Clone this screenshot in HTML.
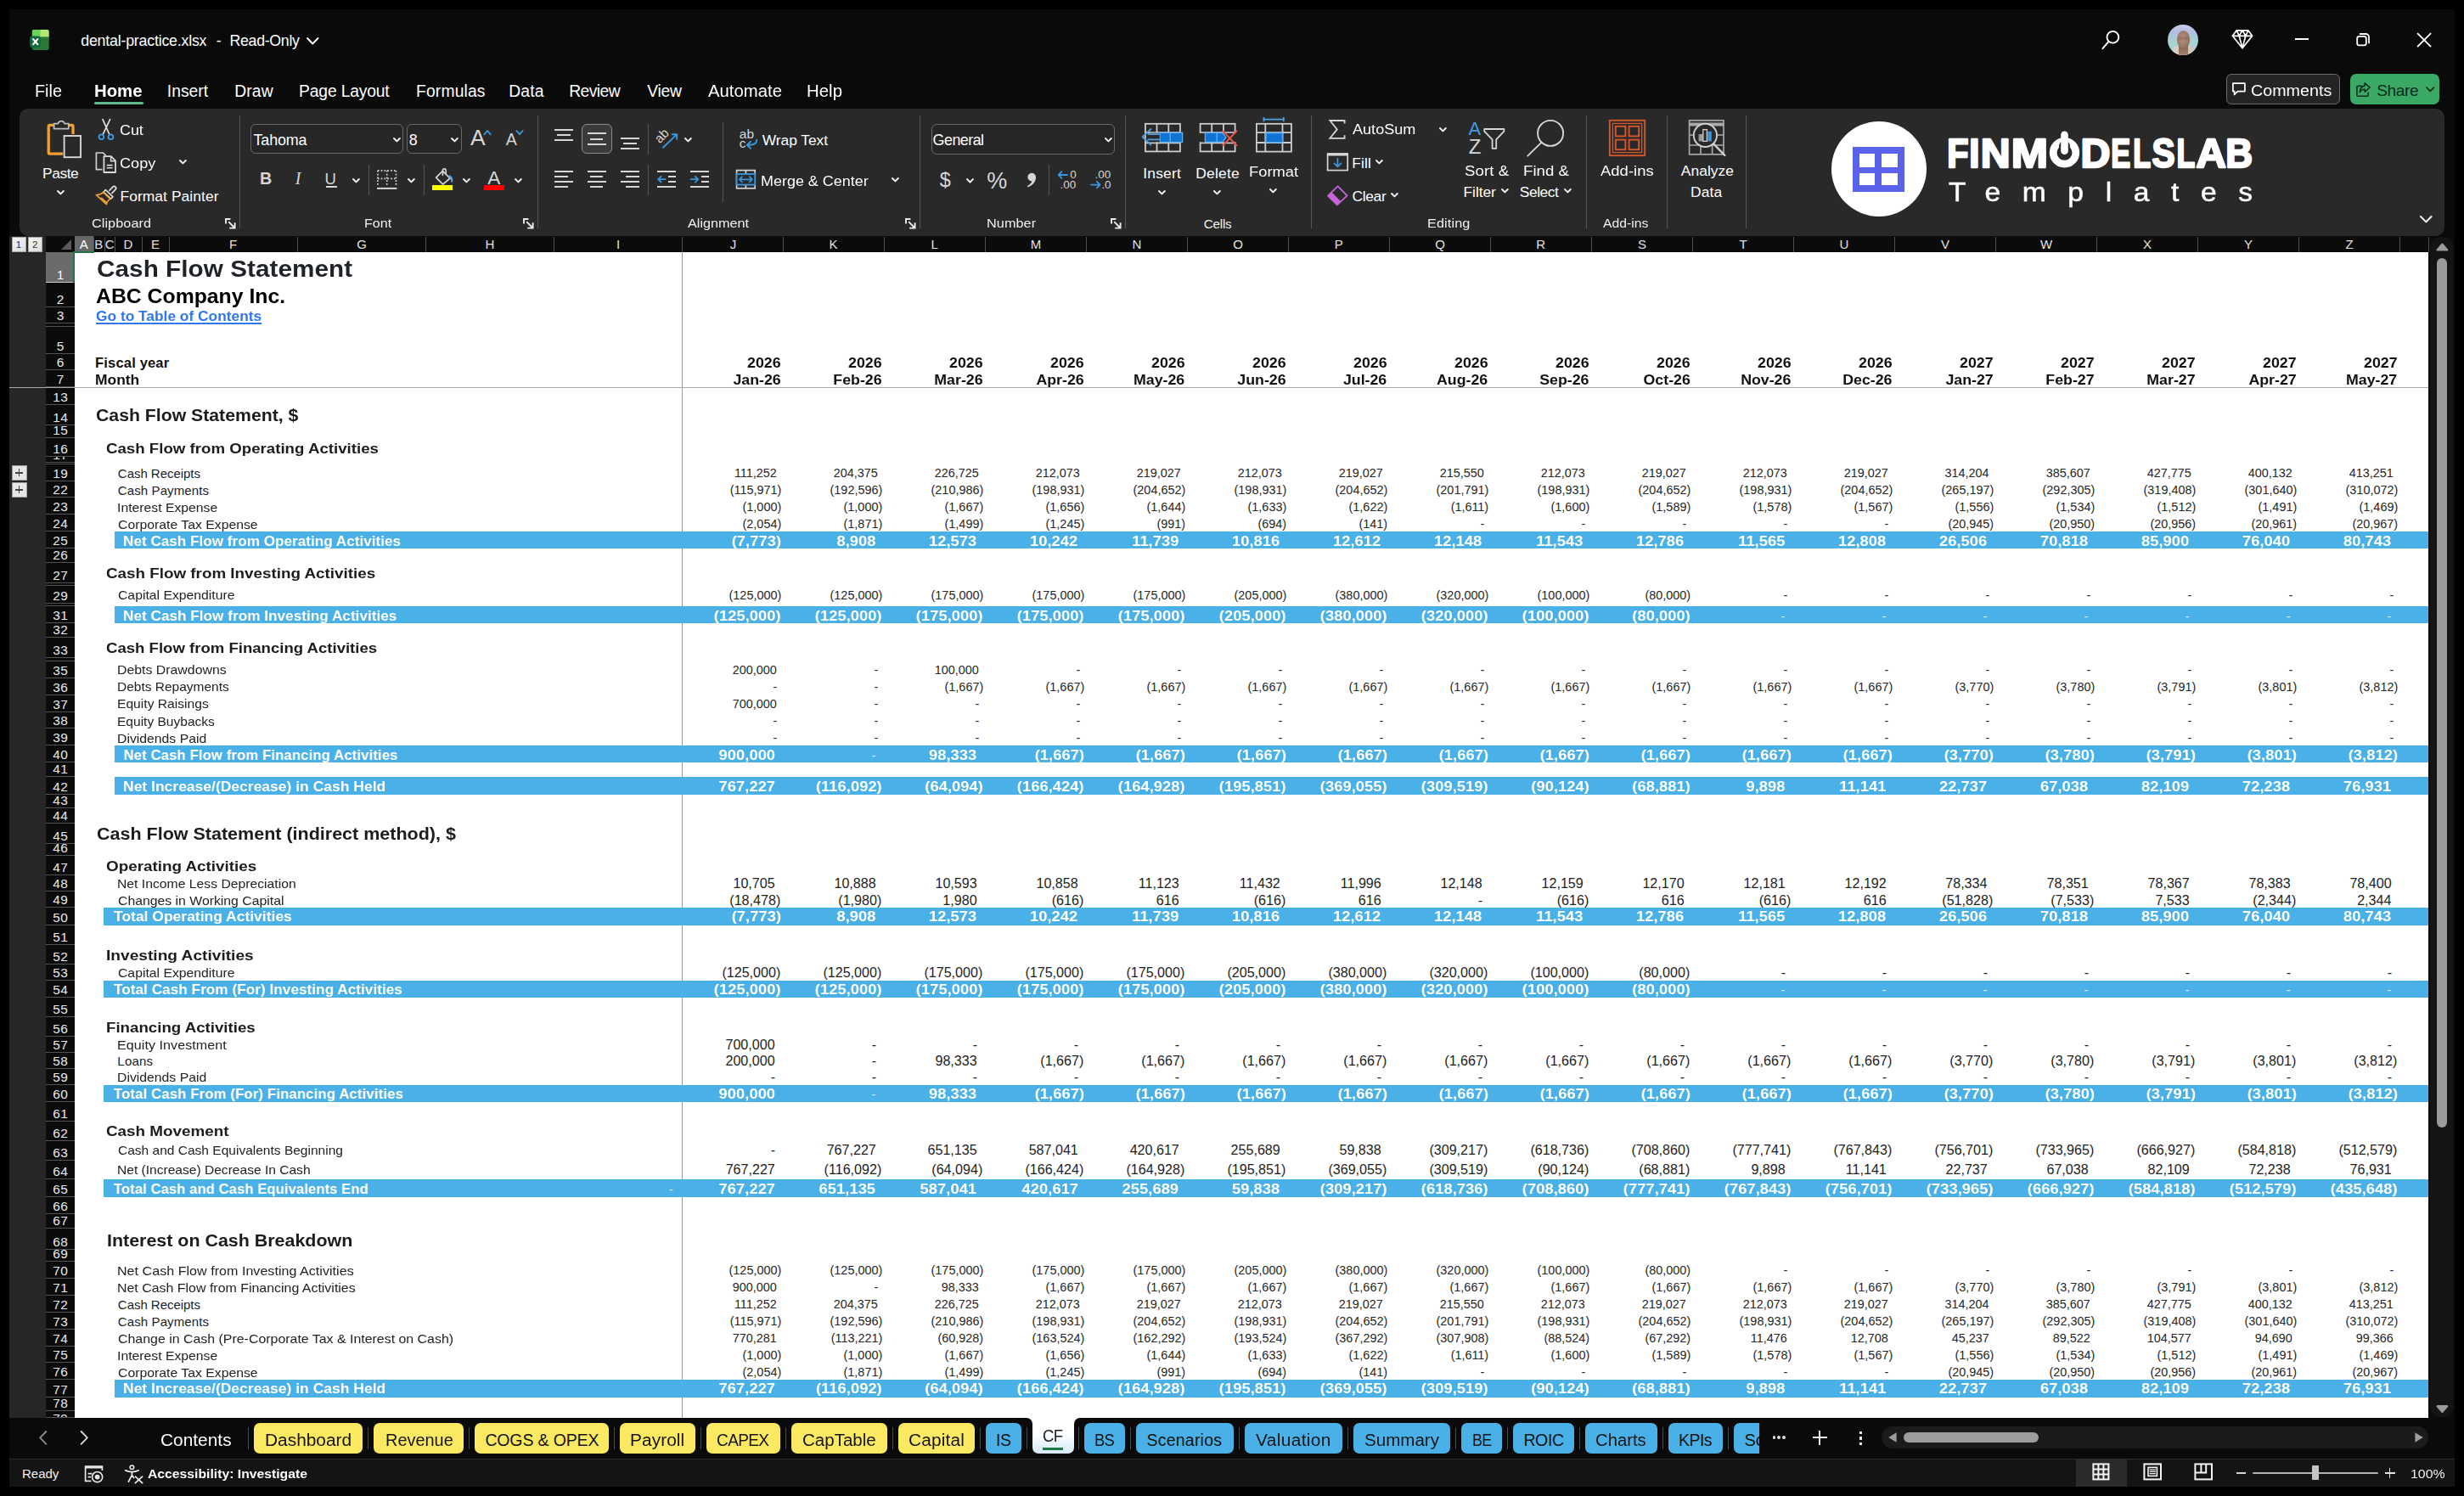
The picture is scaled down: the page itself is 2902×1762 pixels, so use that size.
<!DOCTYPE html>
<html><head><meta charset="utf-8"><title>dental-practice.xlsx</title><style>html,body{margin:0;padding:0;background:#000;}
body{width:2902px;height:1762px;overflow:hidden;position:relative;font-family:"Liberation Sans",sans-serif;}
#r{position:absolute;left:0;top:0;width:2902px;height:1762px;overflow:hidden;}
#r div,#r span,#r svg{position:absolute;white-space:nowrap;}
#r span{display:block;}
</style></head><body><div id="r">
<div style="left:11px;top:11px;width:2880px;height:1740px;background:#0a0a0a;"></div>
<div style="left:11px;top:278px;width:43px;height:1392px;background:#262626;"></div>
<div style="left:54px;top:278px;width:2806px;height:19px;background:#0b0b0b;"></div>
<div style="left:54px;top:297px;width:33.5px;height:1373px;background:#0b0b0b;"></div>
<div style="left:87.5px;top:297px;width:2772.5px;height:1373px;background:#fff;"></div>
<div style="left:13.5px;top:278.5px;width:17.5px;height:18px;background:linear-gradient(135deg,#f4f4f4,#dcdcdc);border:1px solid #a8a8a8;box-sizing:border-box;"></div>
<span style="top:283.00px;font-size:11.5px;line-height:1;color:#333;left:-177.95px;width:400px;text-align:center;">1</span>
<div style="left:32.5px;top:278.5px;width:17.5px;height:18px;background:linear-gradient(135deg,#f4f4f4,#dcdcdc);border:1px solid #a8a8a8;box-sizing:border-box;"></div>
<span style="top:283.00px;font-size:11.5px;line-height:1;color:#333;left:-158.81px;width:400px;text-align:center;">2</span>
<svg style="left:71px;top:281px;" width="14" height="14" viewBox="0 0 14 14" fill="none"><path d="M13 1 L13 13 L1 13 Z" fill="#5a5a5a"/></svg>
<div style="left:87.5px;top:278px;width:22.5px;height:19px;background:#676767;"></div>
<span style="top:280.00px;font-size:15px;line-height:1;color:#fff;left:-101.25px;width:400px;text-align:center;">A</span>
<div style="left:109.5px;top:279px;width:1px;height:18px;background:#4d4d4d;"></div>
<span style="top:280.00px;font-size:15px;line-height:1;color:#e2e2e2;left:-83.73px;width:400px;text-align:center;">B</span>
<div style="left:122.5px;top:279px;width:1px;height:18px;background:#4d4d4d;"></div>
<span style="top:280.00px;font-size:15px;line-height:1;color:#e2e2e2;left:-70.85px;width:400px;text-align:center;">C</span>
<div style="left:135px;top:279px;width:1px;height:18px;background:#4d4d4d;"></div>
<span style="top:280.00px;font-size:15px;line-height:1;color:#e2e2e2;left:-49.01px;width:400px;text-align:center;">D</span>
<div style="left:166.5px;top:279px;width:1px;height:18px;background:#4d4d4d;"></div>
<span style="top:280.00px;font-size:15px;line-height:1;color:#e2e2e2;left:-17.05px;width:400px;text-align:center;">E</span>
<div style="left:199px;top:279px;width:1px;height:18px;background:#4d4d4d;"></div>
<span style="top:280.00px;font-size:15px;line-height:1;color:#e2e2e2;left:74.67px;width:400px;text-align:center;">F</span>
<div style="left:350px;top:279px;width:1px;height:18px;background:#4d4d4d;"></div>
<span style="top:280.00px;font-size:15px;line-height:1;color:#e2e2e2;left:226.17px;width:400px;text-align:center;">G</span>
<div style="left:501px;top:279px;width:1px;height:18px;background:#4d4d4d;"></div>
<span style="top:280.00px;font-size:15px;line-height:1;color:#e2e2e2;left:376.98px;width:400px;text-align:center;">H</span>
<div style="left:652px;top:279px;width:1px;height:18px;background:#4d4d4d;"></div>
<span style="top:280.00px;font-size:15px;line-height:1;color:#e2e2e2;left:528.00px;width:400px;text-align:center;">I</span>
<div style="left:803px;top:279px;width:1px;height:18px;background:#4d4d4d;"></div>
<span style="top:280.00px;font-size:15px;line-height:1;color:#e2e2e2;left:663.43px;width:400px;text-align:center;">J</span>
<div style="left:922px;top:279px;width:1px;height:18px;background:#4d4d4d;"></div>
<span style="top:280.00px;font-size:15px;line-height:1;color:#e2e2e2;left:781.47px;width:400px;text-align:center;">K</span>
<div style="left:1041px;top:279px;width:1px;height:18px;background:#4d4d4d;"></div>
<span style="top:280.00px;font-size:15px;line-height:1;color:#e2e2e2;left:900.63px;width:400px;text-align:center;">L</span>
<div style="left:1160px;top:279px;width:1px;height:18px;background:#4d4d4d;"></div>
<span style="top:280.00px;font-size:15px;line-height:1;color:#e2e2e2;left:1019.99px;width:400px;text-align:center;">M</span>
<div style="left:1279px;top:279px;width:1px;height:18px;background:#4d4d4d;"></div>
<span style="top:280.00px;font-size:15px;line-height:1;color:#e2e2e2;left:1138.98px;width:400px;text-align:center;">N</span>
<div style="left:1398px;top:279px;width:1px;height:18px;background:#4d4d4d;"></div>
<span style="top:280.00px;font-size:15px;line-height:1;color:#e2e2e2;left:1258.00px;width:400px;text-align:center;">O</span>
<div style="left:1517px;top:279px;width:1px;height:18px;background:#4d4d4d;"></div>
<span style="top:280.00px;font-size:15px;line-height:1;color:#e2e2e2;left:1376.77px;width:400px;text-align:center;">P</span>
<div style="left:1636px;top:279px;width:1px;height:18px;background:#4d4d4d;"></div>
<span style="top:280.00px;font-size:15px;line-height:1;color:#e2e2e2;left:1496.00px;width:400px;text-align:center;">Q</span>
<div style="left:1755px;top:279px;width:1px;height:18px;background:#4d4d4d;"></div>
<span style="top:280.00px;font-size:15px;line-height:1;color:#e2e2e2;left:1614.74px;width:400px;text-align:center;">R</span>
<div style="left:1874px;top:279px;width:1px;height:18px;background:#4d4d4d;"></div>
<span style="top:280.00px;font-size:15px;line-height:1;color:#e2e2e2;left:1734.00px;width:400px;text-align:center;">S</span>
<div style="left:1993px;top:279px;width:1px;height:18px;background:#4d4d4d;"></div>
<span style="top:280.00px;font-size:15px;line-height:1;color:#e2e2e2;left:1853.01px;width:400px;text-align:center;">T</span>
<div style="left:2112px;top:279px;width:1px;height:18px;background:#4d4d4d;"></div>
<span style="top:280.00px;font-size:15px;line-height:1;color:#e2e2e2;left:1972.00px;width:400px;text-align:center;">U</span>
<div style="left:2231px;top:279px;width:1px;height:18px;background:#4d4d4d;"></div>
<span style="top:280.00px;font-size:15px;line-height:1;color:#e2e2e2;left:2091.00px;width:400px;text-align:center;">V</span>
<div style="left:2350px;top:279px;width:1px;height:18px;background:#4d4d4d;"></div>
<span style="top:280.00px;font-size:15px;line-height:1;color:#e2e2e2;left:2209.99px;width:400px;text-align:center;">W</span>
<div style="left:2469px;top:279px;width:1px;height:18px;background:#4d4d4d;"></div>
<span style="top:280.00px;font-size:15px;line-height:1;color:#e2e2e2;left:2329.00px;width:400px;text-align:center;">X</span>
<div style="left:2588px;top:279px;width:1px;height:18px;background:#4d4d4d;"></div>
<span style="top:280.00px;font-size:15px;line-height:1;color:#e2e2e2;left:2448.00px;width:400px;text-align:center;">Y</span>
<div style="left:2707px;top:279px;width:1px;height:18px;background:#4d4d4d;"></div>
<span style="top:280.00px;font-size:15px;line-height:1;color:#e2e2e2;left:2567.01px;width:400px;text-align:center;">Z</span>
<div style="left:2826px;top:279px;width:1px;height:18px;background:#4d4d4d;"></div>
<div style="left:2859.5px;top:279px;width:1px;height:18px;background:#4d4d4d;"></div>
<div style="left:54px;top:297px;width:33.5px;height:36px;background:#6b6b6b;overflow:hidden;border-bottom:1px solid #c8c8c8;box-sizing:border-box;"><span style="left:0.6px;width:33.5px;text-align:center;top:19.00px;font-size:15.4px;line-height:1;letter-spacing:0.6px;color:#fff">1</span></div>
<div style="left:54px;top:333px;width:33.5px;height:29px;background:#0b0b0b;overflow:hidden;border-bottom:1px solid #505050;box-sizing:border-box;"><span style="left:0.6px;width:33.5px;text-align:center;top:12.00px;font-size:15.4px;line-height:1;letter-spacing:0.6px;color:#e9e9e9">2</span></div>
<div style="left:54px;top:362px;width:33.5px;height:19px;background:#0b0b0b;overflow:hidden;border-bottom:1px solid #505050;box-sizing:border-box;"><span style="left:0.6px;width:33.5px;text-align:center;top:2.00px;font-size:15.4px;line-height:1;letter-spacing:0.6px;color:#e9e9e9">3</span></div>
<div style="left:54px;top:381px;width:33.5px;height:4px;background:#0b0b0b;overflow:hidden;border-bottom:1px solid #505050;box-sizing:border-box;"></div>
<div style="left:54px;top:385px;width:33.5px;height:32px;background:#0b0b0b;overflow:hidden;border-bottom:1px solid #505050;box-sizing:border-box;"><span style="left:0.6px;width:33.5px;text-align:center;top:15.00px;font-size:15.4px;line-height:1;letter-spacing:0.6px;color:#e9e9e9">5</span></div>
<div style="left:54px;top:417px;width:33.5px;height:19px;background:#0b0b0b;overflow:hidden;border-bottom:1px solid #505050;box-sizing:border-box;"><span style="left:0.6px;width:33.5px;text-align:center;top:2.00px;font-size:15.4px;line-height:1;letter-spacing:0.6px;color:#e9e9e9">6</span></div>
<div style="left:54px;top:436px;width:33.5px;height:20px;background:#0b0b0b;overflow:hidden;border-bottom:1px solid #505050;box-sizing:border-box;"><span style="left:0.6px;width:33.5px;text-align:center;top:3.00px;font-size:15.4px;line-height:1;letter-spacing:0.6px;color:#e9e9e9">7</span></div>
<div style="left:54px;top:457px;width:33.5px;height:20px;background:#0b0b0b;overflow:hidden;border-bottom:1px solid #505050;box-sizing:border-box;"><span style="left:0.6px;width:33.5px;text-align:center;top:3.00px;font-size:15.4px;line-height:1;letter-spacing:0.6px;color:#e9e9e9">13</span></div>
<div style="left:54px;top:477px;width:33.5px;height:24px;background:#0b0b0b;overflow:hidden;border-bottom:1px solid #505050;box-sizing:border-box;"><span style="left:0.6px;width:33.5px;text-align:center;top:7.00px;font-size:15.4px;line-height:1;letter-spacing:0.6px;color:#e9e9e9">14</span></div>
<div style="left:54px;top:501px;width:33.5px;height:14.5px;background:#0b0b0b;overflow:hidden;border-bottom:1px solid #505050;box-sizing:border-box;"><span style="left:0.6px;width:33.5px;text-align:center;top:-2.00px;font-size:15.4px;line-height:1;letter-spacing:0.6px;color:#e9e9e9">15</span></div>
<div style="left:54px;top:515.5px;width:33.5px;height:22.5px;background:#0b0b0b;overflow:hidden;border-bottom:1px solid #505050;box-sizing:border-box;"><span style="left:0.6px;width:33.5px;text-align:center;top:5.50px;font-size:15.4px;line-height:1;letter-spacing:0.6px;color:#e9e9e9">16</span></div>
<div style="left:54px;top:538px;width:33.5px;height:7px;background:#0b0b0b;overflow:hidden;border-bottom:1px solid #505050;box-sizing:border-box;"><span style="left:0.6px;width:33.5px;text-align:center;top:-10.00px;font-size:15.4px;line-height:1;letter-spacing:0.6px;color:#e9e9e9">17</span></div>
<div style="left:54px;top:545px;width:33.5px;height:2px;background:#0b0b0b;overflow:hidden;border-bottom:1px solid #505050;box-sizing:border-box;"></div>
<div style="left:54px;top:547px;width:33.5px;height:19.5px;background:#0b0b0b;overflow:hidden;border-bottom:1px solid #505050;box-sizing:border-box;"><span style="left:0.6px;width:33.5px;text-align:center;top:3.00px;font-size:15.4px;line-height:1;letter-spacing:0.6px;color:#e9e9e9">19</span></div>
<div style="left:54px;top:566.5px;width:33.5px;height:19.5px;background:#0b0b0b;overflow:hidden;border-bottom:1px solid #505050;box-sizing:border-box;"><span style="left:0.6px;width:33.5px;text-align:center;top:2.50px;font-size:15.4px;line-height:1;letter-spacing:0.6px;color:#e9e9e9">22</span></div>
<div style="left:54px;top:586px;width:33.5px;height:20px;background:#0b0b0b;overflow:hidden;border-bottom:1px solid #505050;box-sizing:border-box;"><span style="left:0.6px;width:33.5px;text-align:center;top:3.00px;font-size:15.4px;line-height:1;letter-spacing:0.6px;color:#e9e9e9">23</span></div>
<div style="left:54px;top:606px;width:33.5px;height:20px;background:#0b0b0b;overflow:hidden;border-bottom:1px solid #505050;box-sizing:border-box;"><span style="left:0.6px;width:33.5px;text-align:center;top:3.00px;font-size:15.4px;line-height:1;letter-spacing:0.6px;color:#e9e9e9">24</span></div>
<div style="left:54px;top:626px;width:33.5px;height:20px;background:#0b0b0b;overflow:hidden;border-bottom:1px solid #505050;box-sizing:border-box;"><span style="left:0.6px;width:33.5px;text-align:center;top:3.00px;font-size:15.4px;line-height:1;letter-spacing:0.6px;color:#e9e9e9">25</span></div>
<div style="left:54px;top:646px;width:33.5px;height:17px;background:#0b0b0b;overflow:hidden;border-bottom:1px solid #505050;box-sizing:border-box;"><span style="left:0.6px;width:33.5px;text-align:center;top:0.00px;font-size:15.4px;line-height:1;letter-spacing:0.6px;color:#e9e9e9">26</span></div>
<div style="left:54px;top:663px;width:33.5px;height:23.5px;background:#0b0b0b;overflow:hidden;border-bottom:1px solid #505050;box-sizing:border-box;"><span style="left:0.6px;width:33.5px;text-align:center;top:7.00px;font-size:15.4px;line-height:1;letter-spacing:0.6px;color:#e9e9e9">27</span></div>
<div style="left:54px;top:686.5px;width:33.5px;height:3.5px;background:#0b0b0b;overflow:hidden;border-bottom:1px solid #505050;box-sizing:border-box;"></div>
<div style="left:54px;top:690px;width:33.5px;height:20.5px;background:#0b0b0b;overflow:hidden;border-bottom:1px solid #505050;box-sizing:border-box;"><span style="left:0.6px;width:33.5px;text-align:center;top:4.00px;font-size:15.4px;line-height:1;letter-spacing:0.6px;color:#e9e9e9">29</span></div>
<div style="left:54px;top:710.5px;width:33.5px;height:3.5px;background:#0b0b0b;overflow:hidden;border-bottom:1px solid #505050;box-sizing:border-box;"></div>
<div style="left:54px;top:714px;width:33.5px;height:20px;background:#0b0b0b;overflow:hidden;border-bottom:1px solid #505050;box-sizing:border-box;"><span style="left:0.6px;width:33.5px;text-align:center;top:3.00px;font-size:15.4px;line-height:1;letter-spacing:0.6px;color:#e9e9e9">31</span></div>
<div style="left:54px;top:734px;width:33.5px;height:17px;background:#0b0b0b;overflow:hidden;border-bottom:1px solid #505050;box-sizing:border-box;"><span style="left:0.6px;width:33.5px;text-align:center;top:0.00px;font-size:15.4px;line-height:1;letter-spacing:0.6px;color:#e9e9e9">32</span></div>
<div style="left:54px;top:751px;width:33.5px;height:24px;background:#0b0b0b;overflow:hidden;border-bottom:1px solid #505050;box-sizing:border-box;"><span style="left:0.6px;width:33.5px;text-align:center;top:7.00px;font-size:15.4px;line-height:1;letter-spacing:0.6px;color:#e9e9e9">33</span></div>
<div style="left:54px;top:775px;width:33.5px;height:3.5px;background:#0b0b0b;overflow:hidden;border-bottom:1px solid #505050;box-sizing:border-box;"></div>
<div style="left:54px;top:778.5px;width:33.5px;height:20.5px;background:#0b0b0b;overflow:hidden;border-bottom:1px solid #505050;box-sizing:border-box;"><span style="left:0.6px;width:33.5px;text-align:center;top:3.50px;font-size:15.4px;line-height:1;letter-spacing:0.6px;color:#e9e9e9">35</span></div>
<div style="left:54px;top:799px;width:33.5px;height:20px;background:#0b0b0b;overflow:hidden;border-bottom:1px solid #505050;box-sizing:border-box;"><span style="left:0.6px;width:33.5px;text-align:center;top:3.00px;font-size:15.4px;line-height:1;letter-spacing:0.6px;color:#e9e9e9">36</span></div>
<div style="left:54px;top:819px;width:33.5px;height:19.5px;background:#0b0b0b;overflow:hidden;border-bottom:1px solid #505050;box-sizing:border-box;"><span style="left:0.6px;width:33.5px;text-align:center;top:3.00px;font-size:15.4px;line-height:1;letter-spacing:0.6px;color:#e9e9e9">37</span></div>
<div style="left:54px;top:838.5px;width:33.5px;height:19.5px;background:#0b0b0b;overflow:hidden;border-bottom:1px solid #505050;box-sizing:border-box;"><span style="left:0.6px;width:33.5px;text-align:center;top:2.50px;font-size:15.4px;line-height:1;letter-spacing:0.6px;color:#e9e9e9">38</span></div>
<div style="left:54px;top:858px;width:33.5px;height:20px;background:#0b0b0b;overflow:hidden;border-bottom:1px solid #505050;box-sizing:border-box;"><span style="left:0.6px;width:33.5px;text-align:center;top:3.00px;font-size:15.4px;line-height:1;letter-spacing:0.6px;color:#e9e9e9">39</span></div>
<div style="left:54px;top:878px;width:33.5px;height:20px;background:#0b0b0b;overflow:hidden;border-bottom:1px solid #505050;box-sizing:border-box;"><span style="left:0.6px;width:33.5px;text-align:center;top:3.00px;font-size:15.4px;line-height:1;letter-spacing:0.6px;color:#e9e9e9">40</span></div>
<div style="left:54px;top:898px;width:33.5px;height:17px;background:#0b0b0b;overflow:hidden;border-bottom:1px solid #505050;box-sizing:border-box;"><span style="left:0.6px;width:33.5px;text-align:center;top:0.00px;font-size:15.4px;line-height:1;letter-spacing:0.6px;color:#e9e9e9">41</span></div>
<div style="left:54px;top:915px;width:33.5px;height:20.5px;background:#0b0b0b;overflow:hidden;border-bottom:1px solid #505050;box-sizing:border-box;"><span style="left:0.6px;width:33.5px;text-align:center;top:4.00px;font-size:15.4px;line-height:1;letter-spacing:0.6px;color:#e9e9e9">42</span></div>
<div style="left:54px;top:935.5px;width:33.5px;height:16.5px;background:#0b0b0b;overflow:hidden;border-bottom:1px solid #505050;box-sizing:border-box;"><span style="left:0.6px;width:33.5px;text-align:center;top:-0.50px;font-size:15.4px;line-height:1;letter-spacing:0.6px;color:#e9e9e9">43</span></div>
<div style="left:54px;top:952px;width:33.5px;height:17.5px;background:#0b0b0b;overflow:hidden;border-bottom:1px solid #505050;box-sizing:border-box;"><span style="left:0.6px;width:33.5px;text-align:center;top:1.00px;font-size:15.4px;line-height:1;letter-spacing:0.6px;color:#e9e9e9">44</span></div>
<div style="left:54px;top:969.5px;width:33.5px;height:24.5px;background:#0b0b0b;overflow:hidden;border-bottom:1px solid #505050;box-sizing:border-box;"><span style="left:0.6px;width:33.5px;text-align:center;top:7.50px;font-size:15.4px;line-height:1;letter-spacing:0.6px;color:#e9e9e9">45</span></div>
<div style="left:54px;top:994px;width:33.5px;height:14px;background:#0b0b0b;overflow:hidden;border-bottom:1px solid #505050;box-sizing:border-box;"><span style="left:0.6px;width:33.5px;text-align:center;top:-3.00px;font-size:15.4px;line-height:1;letter-spacing:0.6px;color:#e9e9e9">46</span></div>
<div style="left:54px;top:1008px;width:33.5px;height:23px;background:#0b0b0b;overflow:hidden;border-bottom:1px solid #505050;box-sizing:border-box;"><span style="left:0.6px;width:33.5px;text-align:center;top:6.00px;font-size:15.4px;line-height:1;letter-spacing:0.6px;color:#e9e9e9">47</span></div>
<div style="left:54px;top:1031px;width:33.5px;height:19px;background:#0b0b0b;overflow:hidden;border-bottom:1px solid #505050;box-sizing:border-box;"><span style="left:0.6px;width:33.5px;text-align:center;top:2.00px;font-size:15.4px;line-height:1;letter-spacing:0.6px;color:#e9e9e9">48</span></div>
<div style="left:54px;top:1050px;width:33.5px;height:19px;background:#0b0b0b;overflow:hidden;border-bottom:1px solid #505050;box-sizing:border-box;"><span style="left:0.6px;width:33.5px;text-align:center;top:2.00px;font-size:15.4px;line-height:1;letter-spacing:0.6px;color:#e9e9e9">49</span></div>
<div style="left:54px;top:1069px;width:33.5px;height:20.5px;background:#0b0b0b;overflow:hidden;border-bottom:1px solid #505050;box-sizing:border-box;"><span style="left:0.6px;width:33.5px;text-align:center;top:4.00px;font-size:15.4px;line-height:1;letter-spacing:0.6px;color:#e9e9e9">50</span></div>
<div style="left:54px;top:1089.5px;width:33.5px;height:23.5px;background:#0b0b0b;overflow:hidden;border-bottom:1px solid #505050;box-sizing:border-box;"><span style="left:0.6px;width:33.5px;text-align:center;top:6.50px;font-size:15.4px;line-height:1;letter-spacing:0.6px;color:#e9e9e9">51</span></div>
<div style="left:54px;top:1113px;width:33.5px;height:22.5px;background:#0b0b0b;overflow:hidden;border-bottom:1px solid #505050;box-sizing:border-box;"><span style="left:0.6px;width:33.5px;text-align:center;top:6.00px;font-size:15.4px;line-height:1;letter-spacing:0.6px;color:#e9e9e9">52</span></div>
<div style="left:54px;top:1135.5px;width:33.5px;height:19px;background:#0b0b0b;overflow:hidden;border-bottom:1px solid #505050;box-sizing:border-box;"><span style="left:0.6px;width:33.5px;text-align:center;top:2.50px;font-size:15.4px;line-height:1;letter-spacing:0.6px;color:#e9e9e9">53</span></div>
<div style="left:54px;top:1154.5px;width:33.5px;height:20px;background:#0b0b0b;overflow:hidden;border-bottom:1px solid #505050;box-sizing:border-box;"><span style="left:0.6px;width:33.5px;text-align:center;top:3.50px;font-size:15.4px;line-height:1;letter-spacing:0.6px;color:#e9e9e9">54</span></div>
<div style="left:54px;top:1174.5px;width:33.5px;height:23.5px;background:#0b0b0b;overflow:hidden;border-bottom:1px solid #505050;box-sizing:border-box;"><span style="left:0.6px;width:33.5px;text-align:center;top:6.50px;font-size:15.4px;line-height:1;letter-spacing:0.6px;color:#e9e9e9">55</span></div>
<div style="left:54px;top:1198px;width:33.5px;height:22.5px;background:#0b0b0b;overflow:hidden;border-bottom:1px solid #505050;box-sizing:border-box;"><span style="left:0.6px;width:33.5px;text-align:center;top:6.00px;font-size:15.4px;line-height:1;letter-spacing:0.6px;color:#e9e9e9">56</span></div>
<div style="left:54px;top:1220.5px;width:33.5px;height:19px;background:#0b0b0b;overflow:hidden;border-bottom:1px solid #505050;box-sizing:border-box;"><span style="left:0.6px;width:33.5px;text-align:center;top:2.50px;font-size:15.4px;line-height:1;letter-spacing:0.6px;color:#e9e9e9">57</span></div>
<div style="left:54px;top:1239.5px;width:33.5px;height:19px;background:#0b0b0b;overflow:hidden;border-bottom:1px solid #505050;box-sizing:border-box;"><span style="left:0.6px;width:33.5px;text-align:center;top:2.50px;font-size:15.4px;line-height:1;letter-spacing:0.6px;color:#e9e9e9">58</span></div>
<div style="left:54px;top:1258.5px;width:33.5px;height:19px;background:#0b0b0b;overflow:hidden;border-bottom:1px solid #505050;box-sizing:border-box;"><span style="left:0.6px;width:33.5px;text-align:center;top:2.50px;font-size:15.4px;line-height:1;letter-spacing:0.6px;color:#e9e9e9">59</span></div>
<div style="left:54px;top:1277.5px;width:33.5px;height:20.5px;background:#0b0b0b;overflow:hidden;border-bottom:1px solid #505050;box-sizing:border-box;"><span style="left:0.6px;width:33.5px;text-align:center;top:3.50px;font-size:15.4px;line-height:1;letter-spacing:0.6px;color:#e9e9e9">60</span></div>
<div style="left:54px;top:1298px;width:33.5px;height:23px;background:#0b0b0b;overflow:hidden;border-bottom:1px solid #505050;box-sizing:border-box;"><span style="left:0.6px;width:33.5px;text-align:center;top:6.00px;font-size:15.4px;line-height:1;letter-spacing:0.6px;color:#e9e9e9">61</span></div>
<div style="left:54px;top:1321px;width:33.5px;height:22.5px;background:#0b0b0b;overflow:hidden;border-bottom:1px solid #505050;box-sizing:border-box;"><span style="left:0.6px;width:33.5px;text-align:center;top:6.00px;font-size:15.4px;line-height:1;letter-spacing:0.6px;color:#e9e9e9">62</span></div>
<div style="left:54px;top:1343.5px;width:33.5px;height:23px;background:#0b0b0b;overflow:hidden;border-bottom:1px solid #505050;box-sizing:border-box;"><span style="left:0.6px;width:33.5px;text-align:center;top:6.50px;font-size:15.4px;line-height:1;letter-spacing:0.6px;color:#e9e9e9">63</span></div>
<div style="left:54px;top:1366.5px;width:33.5px;height:22.5px;background:#0b0b0b;overflow:hidden;border-bottom:1px solid #505050;box-sizing:border-box;"><span style="left:0.6px;width:33.5px;text-align:center;top:5.50px;font-size:15.4px;line-height:1;letter-spacing:0.6px;color:#e9e9e9">64</span></div>
<div style="left:54px;top:1389px;width:33.5px;height:21px;background:#0b0b0b;overflow:hidden;border-bottom:1px solid #505050;box-sizing:border-box;"><span style="left:0.6px;width:33.5px;text-align:center;top:4.00px;font-size:15.4px;line-height:1;letter-spacing:0.6px;color:#e9e9e9">65</span></div>
<div style="left:54px;top:1410px;width:33.5px;height:20px;background:#0b0b0b;overflow:hidden;border-bottom:1px solid #505050;box-sizing:border-box;"><span style="left:0.6px;width:33.5px;text-align:center;top:3.00px;font-size:15.4px;line-height:1;letter-spacing:0.6px;color:#e9e9e9">66</span></div>
<div style="left:54px;top:1430px;width:33.5px;height:17px;background:#0b0b0b;overflow:hidden;border-bottom:1px solid #505050;box-sizing:border-box;"><span style="left:0.6px;width:33.5px;text-align:center;top:0.00px;font-size:15.4px;line-height:1;letter-spacing:0.6px;color:#e9e9e9">67</span></div>
<div style="left:54px;top:1447px;width:33.5px;height:25px;background:#0b0b0b;overflow:hidden;border-bottom:1px solid #505050;box-sizing:border-box;"><span style="left:0.6px;width:33.5px;text-align:center;top:8.00px;font-size:15.4px;line-height:1;letter-spacing:0.6px;color:#e9e9e9">68</span></div>
<div style="left:54px;top:1472px;width:33.5px;height:13.5px;background:#0b0b0b;overflow:hidden;border-bottom:1px solid #505050;box-sizing:border-box;"><span style="left:0.6px;width:33.5px;text-align:center;top:-3.00px;font-size:15.4px;line-height:1;letter-spacing:0.6px;color:#e9e9e9">69</span></div>
<div style="left:54px;top:1485.5px;width:33.5px;height:20px;background:#0b0b0b;overflow:hidden;border-bottom:1px solid #505050;box-sizing:border-box;"><span style="left:0.6px;width:33.5px;text-align:center;top:3.50px;font-size:15.4px;line-height:1;letter-spacing:0.6px;color:#e9e9e9">70</span></div>
<div style="left:54px;top:1505.5px;width:33.5px;height:20px;background:#0b0b0b;overflow:hidden;border-bottom:1px solid #505050;box-sizing:border-box;"><span style="left:0.6px;width:33.5px;text-align:center;top:3.50px;font-size:15.4px;line-height:1;letter-spacing:0.6px;color:#e9e9e9">71</span></div>
<div style="left:54px;top:1525.5px;width:33.5px;height:20px;background:#0b0b0b;overflow:hidden;border-bottom:1px solid #505050;box-sizing:border-box;"><span style="left:0.6px;width:33.5px;text-align:center;top:3.50px;font-size:15.4px;line-height:1;letter-spacing:0.6px;color:#e9e9e9">72</span></div>
<div style="left:54px;top:1545.5px;width:33.5px;height:20px;background:#0b0b0b;overflow:hidden;border-bottom:1px solid #505050;box-sizing:border-box;"><span style="left:0.6px;width:33.5px;text-align:center;top:3.50px;font-size:15.4px;line-height:1;letter-spacing:0.6px;color:#e9e9e9">73</span></div>
<div style="left:54px;top:1565.5px;width:33.5px;height:20px;background:#0b0b0b;overflow:hidden;border-bottom:1px solid #505050;box-sizing:border-box;"><span style="left:0.6px;width:33.5px;text-align:center;top:3.50px;font-size:15.4px;line-height:1;letter-spacing:0.6px;color:#e9e9e9">74</span></div>
<div style="left:54px;top:1585.5px;width:33.5px;height:19.5px;background:#0b0b0b;overflow:hidden;border-bottom:1px solid #505050;box-sizing:border-box;"><span style="left:0.6px;width:33.5px;text-align:center;top:2.50px;font-size:15.4px;line-height:1;letter-spacing:0.6px;color:#e9e9e9">75</span></div>
<div style="left:54px;top:1605px;width:33.5px;height:20px;background:#0b0b0b;overflow:hidden;border-bottom:1px solid #505050;box-sizing:border-box;"><span style="left:0.6px;width:33.5px;text-align:center;top:3.00px;font-size:15.4px;line-height:1;letter-spacing:0.6px;color:#e9e9e9">76</span></div>
<div style="left:54px;top:1625px;width:33.5px;height:20.5px;background:#0b0b0b;overflow:hidden;border-bottom:1px solid #505050;box-sizing:border-box;"><span style="left:0.6px;width:33.5px;text-align:center;top:4.00px;font-size:15.4px;line-height:1;letter-spacing:0.6px;color:#e9e9e9">77</span></div>
<div style="left:54px;top:1645.5px;width:33.5px;height:16.5px;background:#0b0b0b;overflow:hidden;border-bottom:1px solid #505050;box-sizing:border-box;"><span style="left:0.6px;width:33.5px;text-align:center;top:-0.50px;font-size:15.4px;line-height:1;letter-spacing:0.6px;color:#e9e9e9">78</span></div>
<div style="left:54px;top:1662px;width:33.5px;height:8px;background:#0b0b0b;overflow:hidden;border-bottom:1px solid #505050;box-sizing:border-box;"><span style="left:0.6px;width:33.5px;text-align:center;top:1.00px;font-size:15.4px;line-height:1;letter-spacing:0.6px;color:#e9e9e9">79</span></div>
<div style="left:86.2px;top:296px;width:25.2px;height:2px;background:#21734a;"></div>
<div style="left:86px;top:296px;width:2px;height:36.5px;background:#21734a;"></div>
<span style="top:304.00px;font-size:27px;line-height:1;color:#1f2328;font-weight:700;letter-spacing:0.043px;transform:scaleX(1.1000);transform-origin:left center;left:114.11px;">Cash Flow Statement</span>
<span style="top:337.00px;font-size:24px;line-height:1;color:#000;font-weight:700;letter-spacing:0.000px;transform:scaleX(1.0328);transform-origin:left center;left:113.38px;">ABC Company Inc.</span>
<span style="top:365.00px;font-size:16.6px;line-height:1;color:#2f77ee;font-weight:700;letter-spacing:0.000px;transform:scaleX(1.0445);transform-origin:left center;left:112.51px;text-decoration:underline;text-decoration-thickness:1.5px;text-underline-offset:2px;">Go to Table of Contents</span>
<span style="top:419.00px;font-size:16.5px;line-height:1;color:#111;font-weight:700;letter-spacing:0.172px;left:112.09px;">Fiscal year</span>
<span style="top:439.00px;font-size:16.5px;line-height:1;color:#111;font-weight:700;letter-spacing:0.000px;transform:scaleX(1.0559);transform-origin:left center;left:112.02px;">Month</span>
<span style="top:420.00px;font-size:16px;line-height:1;color:#111;font-weight:700;letter-spacing:0.000px;transform:scaleX(1.1100);transform-origin:right center;right:1982.64px;text-align:right;">2026</span>
<span style="top:420.00px;font-size:16px;line-height:1;color:#111;font-weight:700;letter-spacing:0.000px;transform:scaleX(1.1100);transform-origin:right center;right:1863.64px;text-align:right;">2026</span>
<span style="top:420.00px;font-size:16px;line-height:1;color:#111;font-weight:700;letter-spacing:0.000px;transform:scaleX(1.1100);transform-origin:right center;right:1744.64px;text-align:right;">2026</span>
<span style="top:420.00px;font-size:16px;line-height:1;color:#111;font-weight:700;letter-spacing:0.000px;transform:scaleX(1.1100);transform-origin:right center;right:1625.64px;text-align:right;">2026</span>
<span style="top:420.00px;font-size:16px;line-height:1;color:#111;font-weight:700;letter-spacing:0.000px;transform:scaleX(1.1100);transform-origin:right center;right:1506.64px;text-align:right;">2026</span>
<span style="top:420.00px;font-size:16px;line-height:1;color:#111;font-weight:700;letter-spacing:0.000px;transform:scaleX(1.1100);transform-origin:right center;right:1387.64px;text-align:right;">2026</span>
<span style="top:420.00px;font-size:16px;line-height:1;color:#111;font-weight:700;letter-spacing:0.000px;transform:scaleX(1.1100);transform-origin:right center;right:1268.64px;text-align:right;">2026</span>
<span style="top:420.00px;font-size:16px;line-height:1;color:#111;font-weight:700;letter-spacing:0.000px;transform:scaleX(1.1100);transform-origin:right center;right:1149.64px;text-align:right;">2026</span>
<span style="top:420.00px;font-size:16px;line-height:1;color:#111;font-weight:700;letter-spacing:0.000px;transform:scaleX(1.1100);transform-origin:right center;right:1030.64px;text-align:right;">2026</span>
<span style="top:420.00px;font-size:16px;line-height:1;color:#111;font-weight:700;letter-spacing:0.000px;transform:scaleX(1.1100);transform-origin:right center;right:911.64px;text-align:right;">2026</span>
<span style="top:420.00px;font-size:16px;line-height:1;color:#111;font-weight:700;letter-spacing:0.000px;transform:scaleX(1.1100);transform-origin:right center;right:792.64px;text-align:right;">2026</span>
<span style="top:420.00px;font-size:16px;line-height:1;color:#111;font-weight:700;letter-spacing:0.000px;transform:scaleX(1.1100);transform-origin:right center;right:673.64px;text-align:right;">2026</span>
<span style="top:420.00px;font-size:16px;line-height:1;color:#111;font-weight:700;letter-spacing:0.000px;transform:scaleX(1.1100);transform-origin:right center;right:554.51px;text-align:right;">2027</span>
<span style="top:420.00px;font-size:16px;line-height:1;color:#111;font-weight:700;letter-spacing:0.000px;transform:scaleX(1.1100);transform-origin:right center;right:435.51px;text-align:right;">2027</span>
<span style="top:420.00px;font-size:16px;line-height:1;color:#111;font-weight:700;letter-spacing:0.000px;transform:scaleX(1.1100);transform-origin:right center;right:316.51px;text-align:right;">2027</span>
<span style="top:420.00px;font-size:16px;line-height:1;color:#111;font-weight:700;letter-spacing:0.000px;transform:scaleX(1.1100);transform-origin:right center;right:197.51px;text-align:right;">2027</span>
<span style="top:420.00px;font-size:16px;line-height:1;color:#111;font-weight:700;letter-spacing:0.000px;transform:scaleX(1.1100);transform-origin:right center;right:78.51px;text-align:right;">2027</span>
<span style="top:440.00px;font-size:16px;line-height:1;color:#111;font-weight:700;letter-spacing:0.000px;transform:scaleX(1.1100);transform-origin:right center;right:1982.66px;text-align:right;">Jan-26</span>
<span style="top:440.00px;font-size:16px;line-height:1;color:#111;font-weight:700;letter-spacing:0.000px;transform:scaleX(1.1100);transform-origin:right center;right:1863.66px;text-align:right;">Feb-26</span>
<span style="top:440.00px;font-size:16px;line-height:1;color:#111;font-weight:700;letter-spacing:0.000px;transform:scaleX(1.1100);transform-origin:right center;right:1744.66px;text-align:right;">Mar-26</span>
<span style="top:440.00px;font-size:16px;line-height:1;color:#111;font-weight:700;letter-spacing:0.000px;transform:scaleX(1.1100);transform-origin:right center;right:1625.68px;text-align:right;">Apr-26</span>
<span style="top:440.00px;font-size:16px;line-height:1;color:#111;font-weight:700;letter-spacing:0.000px;transform:scaleX(1.1100);transform-origin:right center;right:1506.66px;text-align:right;">May-26</span>
<span style="top:440.00px;font-size:16px;line-height:1;color:#111;font-weight:700;letter-spacing:0.000px;transform:scaleX(1.1100);transform-origin:right center;right:1387.66px;text-align:right;">Jun-26</span>
<span style="top:440.00px;font-size:16px;line-height:1;color:#111;font-weight:700;letter-spacing:0.000px;transform:scaleX(1.1100);transform-origin:right center;right:1268.67px;text-align:right;">Jul-26</span>
<span style="top:440.00px;font-size:16px;line-height:1;color:#111;font-weight:700;letter-spacing:0.000px;transform:scaleX(1.1100);transform-origin:right center;right:1149.65px;text-align:right;">Aug-26</span>
<span style="top:440.00px;font-size:16px;line-height:1;color:#111;font-weight:700;letter-spacing:0.000px;transform:scaleX(1.1100);transform-origin:right center;right:1030.64px;text-align:right;">Sep-26</span>
<span style="top:440.00px;font-size:16px;line-height:1;color:#111;font-weight:700;letter-spacing:0.000px;transform:scaleX(1.1100);transform-origin:right center;right:911.64px;text-align:right;">Oct-26</span>
<span style="top:440.00px;font-size:16px;line-height:1;color:#111;font-weight:700;letter-spacing:0.000px;transform:scaleX(1.1100);transform-origin:right center;right:792.64px;text-align:right;">Nov-26</span>
<span style="top:440.00px;font-size:16px;line-height:1;color:#111;font-weight:700;letter-spacing:0.000px;transform:scaleX(1.1100);transform-origin:right center;right:673.64px;text-align:right;">Dec-26</span>
<span style="top:440.00px;font-size:16px;line-height:1;color:#111;font-weight:700;letter-spacing:0.000px;transform:scaleX(1.1100);transform-origin:right center;right:554.53px;text-align:right;">Jan-27</span>
<span style="top:440.00px;font-size:16px;line-height:1;color:#111;font-weight:700;letter-spacing:0.000px;transform:scaleX(1.1100);transform-origin:right center;right:435.53px;text-align:right;">Feb-27</span>
<span style="top:440.00px;font-size:16px;line-height:1;color:#111;font-weight:700;letter-spacing:0.000px;transform:scaleX(1.1100);transform-origin:right center;right:316.52px;text-align:right;">Mar-27</span>
<span style="top:440.00px;font-size:16px;line-height:1;color:#111;font-weight:700;letter-spacing:0.000px;transform:scaleX(1.1100);transform-origin:right center;right:197.54px;text-align:right;">Apr-27</span>
<span style="top:440.00px;font-size:16px;line-height:1;color:#111;font-weight:700;letter-spacing:0.000px;transform:scaleX(1.1100);transform-origin:right center;right:78.53px;text-align:right;">May-27</span>
<span style="top:480.00px;font-size:19.6px;line-height:1;color:#1c1c1c;font-weight:700;letter-spacing:0.000px;transform:scaleX(1.0837);transform-origin:left center;left:113.35px;">Cash Flow Statement, $</span>
<span style="top:520.00px;font-size:17.4px;line-height:1;color:#1c1c1c;font-weight:700;letter-spacing:0.000px;transform:scaleX(1.0737);transform-origin:left center;left:125.45px;">Cash Flow from Operating Activities</span>
<span style="top:550.00px;font-size:15px;line-height:1;color:#222;letter-spacing:-0.039px;left:138.85px;">Cash Receipts</span>
<span style="top:550.00px;font-size:14.4px;line-height:1;color:#262626;right:1987.20px;text-align:right;">111,252</span>
<span style="top:550.00px;font-size:14.4px;line-height:1;color:#262626;right:1868.29px;text-align:right;">204,375</span>
<span style="top:550.00px;font-size:14.4px;line-height:1;color:#262626;right:1749.29px;text-align:right;">226,725</span>
<span style="top:550.00px;font-size:14.4px;line-height:1;color:#262626;right:1630.25px;text-align:right;">212,073</span>
<span style="top:550.00px;font-size:14.4px;line-height:1;color:#262626;right:1511.18px;text-align:right;">219,027</span>
<span style="top:550.00px;font-size:14.4px;line-height:1;color:#262626;right:1392.25px;text-align:right;">212,073</span>
<span style="top:550.00px;font-size:14.4px;line-height:1;color:#262626;right:1273.18px;text-align:right;">219,027</span>
<span style="top:550.00px;font-size:14.4px;line-height:1;color:#262626;right:1154.33px;text-align:right;">215,550</span>
<span style="top:550.00px;font-size:14.4px;line-height:1;color:#262626;right:1035.25px;text-align:right;">212,073</span>
<span style="top:550.00px;font-size:14.4px;line-height:1;color:#262626;right:916.18px;text-align:right;">219,027</span>
<span style="top:550.00px;font-size:14.4px;line-height:1;color:#262626;right:797.25px;text-align:right;">212,073</span>
<span style="top:550.00px;font-size:14.4px;line-height:1;color:#262626;right:678.18px;text-align:right;">219,027</span>
<span style="top:550.00px;font-size:14.4px;line-height:1;color:#262626;right:559.47px;text-align:right;">314,204</span>
<span style="top:550.00px;font-size:14.4px;line-height:1;color:#262626;right:440.18px;text-align:right;">385,607</span>
<span style="top:550.00px;font-size:14.4px;line-height:1;color:#262626;right:321.29px;text-align:right;">427,775</span>
<span style="top:550.00px;font-size:14.4px;line-height:1;color:#262626;right:202.18px;text-align:right;">400,132</span>
<span style="top:550.00px;font-size:14.4px;line-height:1;color:#262626;right:83.18px;text-align:right;">413,251</span>
<span style="top:570.00px;font-size:15px;line-height:1;color:#222;letter-spacing:0.106px;left:138.85px;">Cash Payments</span>
<span style="top:570.00px;font-size:14.4px;line-height:1;color:#262626;right:1981.81px;text-align:right;">(115,971)</span>
<span style="top:570.00px;font-size:14.4px;line-height:1;color:#262626;right:1862.82px;text-align:right;">(192,596)</span>
<span style="top:570.00px;font-size:14.4px;line-height:1;color:#262626;right:1743.82px;text-align:right;">(210,986)</span>
<span style="top:570.00px;font-size:14.4px;line-height:1;color:#262626;right:1624.82px;text-align:right;">(198,931)</span>
<span style="top:570.00px;font-size:14.4px;line-height:1;color:#262626;right:1505.82px;text-align:right;">(204,652)</span>
<span style="top:570.00px;font-size:14.4px;line-height:1;color:#262626;right:1386.82px;text-align:right;">(198,931)</span>
<span style="top:570.00px;font-size:14.4px;line-height:1;color:#262626;right:1267.82px;text-align:right;">(204,652)</span>
<span style="top:570.00px;font-size:14.4px;line-height:1;color:#262626;right:1148.82px;text-align:right;">(201,791)</span>
<span style="top:570.00px;font-size:14.4px;line-height:1;color:#262626;right:1029.82px;text-align:right;">(198,931)</span>
<span style="top:570.00px;font-size:14.4px;line-height:1;color:#262626;right:910.82px;text-align:right;">(204,652)</span>
<span style="top:570.00px;font-size:14.4px;line-height:1;color:#262626;right:791.82px;text-align:right;">(198,931)</span>
<span style="top:570.00px;font-size:14.4px;line-height:1;color:#262626;right:672.82px;text-align:right;">(204,652)</span>
<span style="top:570.00px;font-size:14.4px;line-height:1;color:#262626;right:553.82px;text-align:right;">(265,197)</span>
<span style="top:570.00px;font-size:14.4px;line-height:1;color:#262626;right:434.82px;text-align:right;">(292,305)</span>
<span style="top:570.00px;font-size:14.4px;line-height:1;color:#262626;right:315.82px;text-align:right;">(319,408)</span>
<span style="top:570.00px;font-size:14.4px;line-height:1;color:#262626;right:196.82px;text-align:right;">(301,640)</span>
<span style="top:570.00px;font-size:14.4px;line-height:1;color:#262626;right:77.82px;text-align:right;">(310,072)</span>
<span style="top:590.00px;font-size:15px;line-height:1;color:#222;letter-spacing:0.000px;transform:scaleX(1.0506);transform-origin:left center;left:138.14px;">Interest Expense</span>
<span style="top:590.00px;font-size:14.4px;line-height:1;color:#262626;right:1981.82px;text-align:right;">(1,000)</span>
<span style="top:590.00px;font-size:14.4px;line-height:1;color:#262626;right:1862.82px;text-align:right;">(1,000)</span>
<span style="top:590.00px;font-size:14.4px;line-height:1;color:#262626;right:1743.82px;text-align:right;">(1,667)</span>
<span style="top:590.00px;font-size:14.4px;line-height:1;color:#262626;right:1624.82px;text-align:right;">(1,656)</span>
<span style="top:590.00px;font-size:14.4px;line-height:1;color:#262626;right:1505.82px;text-align:right;">(1,644)</span>
<span style="top:590.00px;font-size:14.4px;line-height:1;color:#262626;right:1386.82px;text-align:right;">(1,633)</span>
<span style="top:590.00px;font-size:14.4px;line-height:1;color:#262626;right:1267.82px;text-align:right;">(1,622)</span>
<span style="top:590.00px;font-size:14.4px;line-height:1;color:#262626;right:1148.85px;text-align:right;">(1,611)</span>
<span style="top:590.00px;font-size:14.4px;line-height:1;color:#262626;right:1029.82px;text-align:right;">(1,600)</span>
<span style="top:590.00px;font-size:14.4px;line-height:1;color:#262626;right:910.82px;text-align:right;">(1,589)</span>
<span style="top:590.00px;font-size:14.4px;line-height:1;color:#262626;right:791.82px;text-align:right;">(1,578)</span>
<span style="top:590.00px;font-size:14.4px;line-height:1;color:#262626;right:672.82px;text-align:right;">(1,567)</span>
<span style="top:590.00px;font-size:14.4px;line-height:1;color:#262626;right:553.82px;text-align:right;">(1,556)</span>
<span style="top:590.00px;font-size:14.4px;line-height:1;color:#262626;right:434.82px;text-align:right;">(1,534)</span>
<span style="top:590.00px;font-size:14.4px;line-height:1;color:#262626;right:315.82px;text-align:right;">(1,512)</span>
<span style="top:590.00px;font-size:14.4px;line-height:1;color:#262626;right:196.82px;text-align:right;">(1,491)</span>
<span style="top:590.00px;font-size:14.4px;line-height:1;color:#262626;right:77.82px;text-align:right;">(1,469)</span>
<span style="top:610.00px;font-size:15px;line-height:1;color:#222;letter-spacing:0.000px;transform:scaleX(1.0522);transform-origin:left center;left:138.81px;">Corporate Tax Expense</span>
<span style="top:610.00px;font-size:14.4px;line-height:1;color:#262626;right:1981.82px;text-align:right;">(2,054)</span>
<span style="top:610.00px;font-size:14.4px;line-height:1;color:#262626;right:1862.82px;text-align:right;">(1,871)</span>
<span style="top:610.00px;font-size:14.4px;line-height:1;color:#262626;right:1743.82px;text-align:right;">(1,499)</span>
<span style="top:610.00px;font-size:14.4px;line-height:1;color:#262626;right:1624.82px;text-align:right;">(1,245)</span>
<span style="top:610.00px;font-size:14.4px;line-height:1;color:#262626;right:1505.84px;text-align:right;">(991)</span>
<span style="top:610.00px;font-size:14.4px;line-height:1;color:#262626;right:1386.84px;text-align:right;">(694)</span>
<span style="top:610.00px;font-size:14.4px;line-height:1;color:#262626;right:1267.84px;text-align:right;">(141)</span>
<span style="top:610.00px;font-size:14.4px;line-height:1;color:#262626;right:1153.68px;text-align:right;">-</span>
<span style="top:610.00px;font-size:14.4px;line-height:1;color:#262626;right:1034.68px;text-align:right;">-</span>
<span style="top:610.00px;font-size:14.4px;line-height:1;color:#262626;right:915.68px;text-align:right;">-</span>
<span style="top:610.00px;font-size:14.4px;line-height:1;color:#262626;right:796.68px;text-align:right;">-</span>
<span style="top:610.00px;font-size:14.4px;line-height:1;color:#262626;right:677.68px;text-align:right;">-</span>
<span style="top:610.00px;font-size:14.4px;line-height:1;color:#262626;right:553.84px;text-align:right;">(20,945)</span>
<span style="top:610.00px;font-size:14.4px;line-height:1;color:#262626;right:434.84px;text-align:right;">(20,950)</span>
<span style="top:610.00px;font-size:14.4px;line-height:1;color:#262626;right:315.84px;text-align:right;">(20,956)</span>
<span style="top:610.00px;font-size:14.4px;line-height:1;color:#262626;right:196.84px;text-align:right;">(20,961)</span>
<span style="top:610.00px;font-size:14.4px;line-height:1;color:#262626;right:77.84px;text-align:right;">(20,967)</span>
<div style="left:135px;top:626px;width:2725px;height:20px;background:#4ab1e8;"></div>
<span style="top:630.00px;font-size:16.6px;line-height:1;color:#fff;font-weight:700;letter-spacing:0.000px;transform:scaleX(1.0330);transform-origin:left center;left:145.34px;">Net Cash Flow from Operating Activities</span>
<span style="top:630.00px;font-size:15.8px;line-height:1;color:#fff;font-weight:700;letter-spacing:0.000px;transform:scaleX(1.1650);transform-origin:right center;right:1982.11px;text-align:right;">(7,773)</span>
<span style="top:630.00px;font-size:15.8px;line-height:1;color:#fff;font-weight:700;letter-spacing:0.000px;transform:scaleX(1.1650);transform-origin:right center;right:1870.55px;text-align:right;">8,908</span>
<span style="top:630.00px;font-size:15.8px;line-height:1;color:#fff;font-weight:700;letter-spacing:0.000px;transform:scaleX(1.1650);transform-origin:right center;right:1751.43px;text-align:right;">12,573</span>
<span style="top:630.00px;font-size:15.8px;line-height:1;color:#fff;font-weight:700;letter-spacing:0.000px;transform:scaleX(1.1650);transform-origin:right center;right:1632.39px;text-align:right;">10,242</span>
<span style="top:630.00px;font-size:15.8px;line-height:1;color:#fff;font-weight:700;letter-spacing:0.000px;transform:scaleX(1.1650);transform-origin:right center;right:1513.44px;text-align:right;">11,739</span>
<span style="top:630.00px;font-size:15.8px;line-height:1;color:#fff;font-weight:700;letter-spacing:0.000px;transform:scaleX(1.1650);transform-origin:right center;right:1394.43px;text-align:right;">10,816</span>
<span style="top:630.00px;font-size:15.8px;line-height:1;color:#fff;font-weight:700;letter-spacing:0.000px;transform:scaleX(1.1650);transform-origin:right center;right:1275.39px;text-align:right;">12,612</span>
<span style="top:630.00px;font-size:15.8px;line-height:1;color:#fff;font-weight:700;letter-spacing:0.000px;transform:scaleX(1.1650);transform-origin:right center;right:1156.53px;text-align:right;">12,148</span>
<span style="top:630.00px;font-size:15.8px;line-height:1;color:#fff;font-weight:700;letter-spacing:0.000px;transform:scaleX(1.1650);transform-origin:right center;right:1037.44px;text-align:right;">11,543</span>
<span style="top:630.00px;font-size:15.8px;line-height:1;color:#fff;font-weight:700;letter-spacing:0.000px;transform:scaleX(1.1650);transform-origin:right center;right:918.43px;text-align:right;">12,786</span>
<span style="top:630.00px;font-size:15.8px;line-height:1;color:#fff;font-weight:700;letter-spacing:0.000px;transform:scaleX(1.1650);transform-origin:right center;right:799.62px;text-align:right;">11,565</span>
<span style="top:630.00px;font-size:15.8px;line-height:1;color:#fff;font-weight:700;letter-spacing:0.000px;transform:scaleX(1.1650);transform-origin:right center;right:680.53px;text-align:right;">12,808</span>
<span style="top:630.00px;font-size:15.8px;line-height:1;color:#fff;font-weight:700;letter-spacing:0.000px;transform:scaleX(1.1650);transform-origin:right center;right:561.43px;text-align:right;">26,506</span>
<span style="top:630.00px;font-size:15.8px;line-height:1;color:#fff;font-weight:700;letter-spacing:0.000px;transform:scaleX(1.1650);transform-origin:right center;right:442.53px;text-align:right;">70,818</span>
<span style="top:630.00px;font-size:15.8px;line-height:1;color:#fff;font-weight:700;letter-spacing:0.000px;transform:scaleX(1.1650);transform-origin:right center;right:323.34px;text-align:right;">85,900</span>
<span style="top:630.00px;font-size:15.8px;line-height:1;color:#fff;font-weight:700;letter-spacing:0.000px;transform:scaleX(1.1650);transform-origin:right center;right:204.34px;text-align:right;">76,040</span>
<span style="top:630.00px;font-size:15.8px;line-height:1;color:#fff;font-weight:700;letter-spacing:0.000px;transform:scaleX(1.1650);transform-origin:right center;right:85.43px;text-align:right;">80,743</span>
<span style="top:667.00px;font-size:17.4px;line-height:1;color:#1c1c1c;font-weight:700;letter-spacing:0.000px;transform:scaleX(1.0819);transform-origin:left center;left:125.45px;">Cash Flow from Investing Activities</span>
<span style="top:693.00px;font-size:15px;line-height:1;color:#222;letter-spacing:0.000px;transform:scaleX(1.0500);transform-origin:left center;left:138.81px;">Capital Expenditure</span>
<span style="top:694.00px;font-size:14.4px;line-height:1;color:#262626;right:1981.82px;text-align:right;">(125,000)</span>
<span style="top:694.00px;font-size:14.4px;line-height:1;color:#262626;right:1862.82px;text-align:right;">(125,000)</span>
<span style="top:694.00px;font-size:14.4px;line-height:1;color:#262626;right:1743.82px;text-align:right;">(175,000)</span>
<span style="top:694.00px;font-size:14.4px;line-height:1;color:#262626;right:1624.82px;text-align:right;">(175,000)</span>
<span style="top:694.00px;font-size:14.4px;line-height:1;color:#262626;right:1505.82px;text-align:right;">(175,000)</span>
<span style="top:694.00px;font-size:14.4px;line-height:1;color:#262626;right:1386.82px;text-align:right;">(205,000)</span>
<span style="top:694.00px;font-size:14.4px;line-height:1;color:#262626;right:1267.82px;text-align:right;">(380,000)</span>
<span style="top:694.00px;font-size:14.4px;line-height:1;color:#262626;right:1148.82px;text-align:right;">(320,000)</span>
<span style="top:694.00px;font-size:14.4px;line-height:1;color:#262626;right:1029.82px;text-align:right;">(100,000)</span>
<span style="top:694.00px;font-size:14.4px;line-height:1;color:#262626;right:910.84px;text-align:right;">(80,000)</span>
<span style="top:694.00px;font-size:14.4px;line-height:1;color:#262626;right:796.68px;text-align:right;">-</span>
<span style="top:694.00px;font-size:14.4px;line-height:1;color:#262626;right:677.68px;text-align:right;">-</span>
<span style="top:694.00px;font-size:14.4px;line-height:1;color:#262626;right:558.68px;text-align:right;">-</span>
<span style="top:694.00px;font-size:14.4px;line-height:1;color:#262626;right:439.68px;text-align:right;">-</span>
<span style="top:694.00px;font-size:14.4px;line-height:1;color:#262626;right:320.68px;text-align:right;">-</span>
<span style="top:694.00px;font-size:14.4px;line-height:1;color:#262626;right:201.68px;text-align:right;">-</span>
<span style="top:694.00px;font-size:14.4px;line-height:1;color:#262626;right:82.68px;text-align:right;">-</span>
<div style="left:135px;top:714px;width:2725px;height:20px;background:#4ab1e8;"></div>
<span style="top:718.00px;font-size:16.6px;line-height:1;color:#fff;font-weight:700;letter-spacing:0.000px;transform:scaleX(1.0364);transform-origin:left center;left:145.34px;">Net Cash Flow from Investing Activities</span>
<span style="top:718.00px;font-size:15.8px;line-height:1;color:#fff;font-weight:700;letter-spacing:0.000px;transform:scaleX(1.1650);transform-origin:right center;right:1982.11px;text-align:right;">(125,000)</span>
<span style="top:718.00px;font-size:15.8px;line-height:1;color:#fff;font-weight:700;letter-spacing:0.000px;transform:scaleX(1.1650);transform-origin:right center;right:1863.11px;text-align:right;">(125,000)</span>
<span style="top:718.00px;font-size:15.8px;line-height:1;color:#fff;font-weight:700;letter-spacing:0.000px;transform:scaleX(1.1650);transform-origin:right center;right:1744.11px;text-align:right;">(175,000)</span>
<span style="top:718.00px;font-size:15.8px;line-height:1;color:#fff;font-weight:700;letter-spacing:0.000px;transform:scaleX(1.1650);transform-origin:right center;right:1625.11px;text-align:right;">(175,000)</span>
<span style="top:718.00px;font-size:15.8px;line-height:1;color:#fff;font-weight:700;letter-spacing:0.000px;transform:scaleX(1.1650);transform-origin:right center;right:1506.11px;text-align:right;">(175,000)</span>
<span style="top:718.00px;font-size:15.8px;line-height:1;color:#fff;font-weight:700;letter-spacing:0.000px;transform:scaleX(1.1650);transform-origin:right center;right:1387.11px;text-align:right;">(205,000)</span>
<span style="top:718.00px;font-size:15.8px;line-height:1;color:#fff;font-weight:700;letter-spacing:0.000px;transform:scaleX(1.1650);transform-origin:right center;right:1268.11px;text-align:right;">(380,000)</span>
<span style="top:718.00px;font-size:15.8px;line-height:1;color:#fff;font-weight:700;letter-spacing:0.000px;transform:scaleX(1.1650);transform-origin:right center;right:1149.11px;text-align:right;">(320,000)</span>
<span style="top:718.00px;font-size:15.8px;line-height:1;color:#fff;font-weight:700;letter-spacing:0.000px;transform:scaleX(1.1650);transform-origin:right center;right:1030.11px;text-align:right;">(100,000)</span>
<span style="top:718.00px;font-size:15.8px;line-height:1;color:#fff;font-weight:700;letter-spacing:0.000px;transform:scaleX(1.1650);transform-origin:right center;right:911.13px;text-align:right;">(80,000)</span>
<span style="top:718.00px;font-size:15px;line-height:1;color:rgba(255,255,255,.78);right:799.45px;text-align:right;">-</span>
<span style="top:718.00px;font-size:15px;line-height:1;color:rgba(255,255,255,.78);right:680.45px;text-align:right;">-</span>
<span style="top:718.00px;font-size:15px;line-height:1;color:rgba(255,255,255,.78);right:561.45px;text-align:right;">-</span>
<span style="top:718.00px;font-size:15px;line-height:1;color:rgba(255,255,255,.78);right:442.45px;text-align:right;">-</span>
<span style="top:718.00px;font-size:15px;line-height:1;color:rgba(255,255,255,.78);right:323.45px;text-align:right;">-</span>
<span style="top:718.00px;font-size:15px;line-height:1;color:rgba(255,255,255,.78);right:204.45px;text-align:right;">-</span>
<span style="top:718.00px;font-size:15px;line-height:1;color:rgba(255,255,255,.78);right:85.45px;text-align:right;">-</span>
<span style="top:755.00px;font-size:17.4px;line-height:1;color:#1c1c1c;font-weight:700;letter-spacing:0.000px;transform:scaleX(1.0676);transform-origin:left center;left:125.46px;">Cash Flow from Financing Activities</span>
<span style="top:781.00px;font-size:15px;line-height:1;color:#222;letter-spacing:0.000px;transform:scaleX(1.0570);transform-origin:left center;left:138.29px;">Debts Drawdowns</span>
<span style="top:782.00px;font-size:14.4px;line-height:1;color:#262626;right:1987.33px;text-align:right;">200,000</span>
<span style="top:782.00px;font-size:14.4px;line-height:1;color:#262626;right:1867.68px;text-align:right;">-</span>
<span style="top:782.00px;font-size:14.4px;line-height:1;color:#262626;right:1749.33px;text-align:right;">100,000</span>
<span style="top:782.00px;font-size:14.4px;line-height:1;color:#262626;right:1629.68px;text-align:right;">-</span>
<span style="top:782.00px;font-size:14.4px;line-height:1;color:#262626;right:1510.68px;text-align:right;">-</span>
<span style="top:782.00px;font-size:14.4px;line-height:1;color:#262626;right:1391.68px;text-align:right;">-</span>
<span style="top:782.00px;font-size:14.4px;line-height:1;color:#262626;right:1272.68px;text-align:right;">-</span>
<span style="top:782.00px;font-size:14.4px;line-height:1;color:#262626;right:1153.68px;text-align:right;">-</span>
<span style="top:782.00px;font-size:14.4px;line-height:1;color:#262626;right:1034.68px;text-align:right;">-</span>
<span style="top:782.00px;font-size:14.4px;line-height:1;color:#262626;right:915.68px;text-align:right;">-</span>
<span style="top:782.00px;font-size:14.4px;line-height:1;color:#262626;right:796.68px;text-align:right;">-</span>
<span style="top:782.00px;font-size:14.4px;line-height:1;color:#262626;right:677.68px;text-align:right;">-</span>
<span style="top:782.00px;font-size:14.4px;line-height:1;color:#262626;right:558.68px;text-align:right;">-</span>
<span style="top:782.00px;font-size:14.4px;line-height:1;color:#262626;right:439.68px;text-align:right;">-</span>
<span style="top:782.00px;font-size:14.4px;line-height:1;color:#262626;right:320.68px;text-align:right;">-</span>
<span style="top:782.00px;font-size:14.4px;line-height:1;color:#262626;right:201.68px;text-align:right;">-</span>
<span style="top:782.00px;font-size:14.4px;line-height:1;color:#262626;right:82.68px;text-align:right;">-</span>
<span style="top:801.00px;font-size:15px;line-height:1;color:#222;letter-spacing:-0.000px;transform:scaleX(1.0325);transform-origin:left center;left:138.32px;">Debts Repayments</span>
<span style="top:802.00px;font-size:14.4px;line-height:1;color:#262626;right:1986.68px;text-align:right;">-</span>
<span style="top:802.00px;font-size:14.4px;line-height:1;color:#262626;right:1867.68px;text-align:right;">-</span>
<span style="top:802.00px;font-size:14.4px;line-height:1;color:#262626;right:1743.82px;text-align:right;">(1,667)</span>
<span style="top:802.00px;font-size:14.4px;line-height:1;color:#262626;right:1624.82px;text-align:right;">(1,667)</span>
<span style="top:802.00px;font-size:14.4px;line-height:1;color:#262626;right:1505.82px;text-align:right;">(1,667)</span>
<span style="top:802.00px;font-size:14.4px;line-height:1;color:#262626;right:1386.82px;text-align:right;">(1,667)</span>
<span style="top:802.00px;font-size:14.4px;line-height:1;color:#262626;right:1267.82px;text-align:right;">(1,667)</span>
<span style="top:802.00px;font-size:14.4px;line-height:1;color:#262626;right:1148.82px;text-align:right;">(1,667)</span>
<span style="top:802.00px;font-size:14.4px;line-height:1;color:#262626;right:1029.82px;text-align:right;">(1,667)</span>
<span style="top:802.00px;font-size:14.4px;line-height:1;color:#262626;right:910.82px;text-align:right;">(1,667)</span>
<span style="top:802.00px;font-size:14.4px;line-height:1;color:#262626;right:791.82px;text-align:right;">(1,667)</span>
<span style="top:802.00px;font-size:14.4px;line-height:1;color:#262626;right:672.82px;text-align:right;">(1,667)</span>
<span style="top:802.00px;font-size:14.4px;line-height:1;color:#262626;right:553.82px;text-align:right;">(3,770)</span>
<span style="top:802.00px;font-size:14.4px;line-height:1;color:#262626;right:434.82px;text-align:right;">(3,780)</span>
<span style="top:802.00px;font-size:14.4px;line-height:1;color:#262626;right:315.82px;text-align:right;">(3,791)</span>
<span style="top:802.00px;font-size:14.4px;line-height:1;color:#262626;right:196.82px;text-align:right;">(3,801)</span>
<span style="top:802.00px;font-size:14.4px;line-height:1;color:#262626;right:77.82px;text-align:right;">(3,812)</span>
<span style="top:821.00px;font-size:15px;line-height:1;color:#222;letter-spacing:0.000px;transform:scaleX(1.0421);transform-origin:left center;left:138.31px;">Equity Raisings</span>
<span style="top:822.00px;font-size:14.4px;line-height:1;color:#262626;right:1987.33px;text-align:right;">700,000</span>
<span style="top:822.00px;font-size:14.4px;line-height:1;color:#262626;right:1867.68px;text-align:right;">-</span>
<span style="top:822.00px;font-size:14.4px;line-height:1;color:#262626;right:1748.68px;text-align:right;">-</span>
<span style="top:822.00px;font-size:14.4px;line-height:1;color:#262626;right:1629.68px;text-align:right;">-</span>
<span style="top:822.00px;font-size:14.4px;line-height:1;color:#262626;right:1510.68px;text-align:right;">-</span>
<span style="top:822.00px;font-size:14.4px;line-height:1;color:#262626;right:1391.68px;text-align:right;">-</span>
<span style="top:822.00px;font-size:14.4px;line-height:1;color:#262626;right:1272.68px;text-align:right;">-</span>
<span style="top:822.00px;font-size:14.4px;line-height:1;color:#262626;right:1153.68px;text-align:right;">-</span>
<span style="top:822.00px;font-size:14.4px;line-height:1;color:#262626;right:1034.68px;text-align:right;">-</span>
<span style="top:822.00px;font-size:14.4px;line-height:1;color:#262626;right:915.68px;text-align:right;">-</span>
<span style="top:822.00px;font-size:14.4px;line-height:1;color:#262626;right:796.68px;text-align:right;">-</span>
<span style="top:822.00px;font-size:14.4px;line-height:1;color:#262626;right:677.68px;text-align:right;">-</span>
<span style="top:822.00px;font-size:14.4px;line-height:1;color:#262626;right:558.68px;text-align:right;">-</span>
<span style="top:822.00px;font-size:14.4px;line-height:1;color:#262626;right:439.68px;text-align:right;">-</span>
<span style="top:822.00px;font-size:14.4px;line-height:1;color:#262626;right:320.68px;text-align:right;">-</span>
<span style="top:822.00px;font-size:14.4px;line-height:1;color:#262626;right:201.68px;text-align:right;">-</span>
<span style="top:822.00px;font-size:14.4px;line-height:1;color:#262626;right:82.68px;text-align:right;">-</span>
<span style="top:842.00px;font-size:15px;line-height:1;color:#222;letter-spacing:-0.000px;transform:scaleX(1.0355);transform-origin:left center;left:138.32px;">Equity Buybacks</span>
<span style="top:842.00px;font-size:14.4px;line-height:1;color:#262626;right:1986.68px;text-align:right;">-</span>
<span style="top:842.00px;font-size:14.4px;line-height:1;color:#262626;right:1867.68px;text-align:right;">-</span>
<span style="top:842.00px;font-size:14.4px;line-height:1;color:#262626;right:1748.68px;text-align:right;">-</span>
<span style="top:842.00px;font-size:14.4px;line-height:1;color:#262626;right:1629.68px;text-align:right;">-</span>
<span style="top:842.00px;font-size:14.4px;line-height:1;color:#262626;right:1510.68px;text-align:right;">-</span>
<span style="top:842.00px;font-size:14.4px;line-height:1;color:#262626;right:1391.68px;text-align:right;">-</span>
<span style="top:842.00px;font-size:14.4px;line-height:1;color:#262626;right:1272.68px;text-align:right;">-</span>
<span style="top:842.00px;font-size:14.4px;line-height:1;color:#262626;right:1153.68px;text-align:right;">-</span>
<span style="top:842.00px;font-size:14.4px;line-height:1;color:#262626;right:1034.68px;text-align:right;">-</span>
<span style="top:842.00px;font-size:14.4px;line-height:1;color:#262626;right:915.68px;text-align:right;">-</span>
<span style="top:842.00px;font-size:14.4px;line-height:1;color:#262626;right:796.68px;text-align:right;">-</span>
<span style="top:842.00px;font-size:14.4px;line-height:1;color:#262626;right:677.68px;text-align:right;">-</span>
<span style="top:842.00px;font-size:14.4px;line-height:1;color:#262626;right:558.68px;text-align:right;">-</span>
<span style="top:842.00px;font-size:14.4px;line-height:1;color:#262626;right:439.68px;text-align:right;">-</span>
<span style="top:842.00px;font-size:14.4px;line-height:1;color:#262626;right:320.68px;text-align:right;">-</span>
<span style="top:842.00px;font-size:14.4px;line-height:1;color:#262626;right:201.68px;text-align:right;">-</span>
<span style="top:842.00px;font-size:14.4px;line-height:1;color:#262626;right:82.68px;text-align:right;">-</span>
<span style="top:862.00px;font-size:15px;line-height:1;color:#222;letter-spacing:0.000px;transform:scaleX(1.0513);transform-origin:left center;left:138.30px;">Dividends Paid</span>
<span style="top:862.00px;font-size:14.4px;line-height:1;color:#262626;right:1986.68px;text-align:right;">-</span>
<span style="top:862.00px;font-size:14.4px;line-height:1;color:#262626;right:1867.68px;text-align:right;">-</span>
<span style="top:862.00px;font-size:14.4px;line-height:1;color:#262626;right:1748.68px;text-align:right;">-</span>
<span style="top:862.00px;font-size:14.4px;line-height:1;color:#262626;right:1629.68px;text-align:right;">-</span>
<span style="top:862.00px;font-size:14.4px;line-height:1;color:#262626;right:1510.68px;text-align:right;">-</span>
<span style="top:862.00px;font-size:14.4px;line-height:1;color:#262626;right:1391.68px;text-align:right;">-</span>
<span style="top:862.00px;font-size:14.4px;line-height:1;color:#262626;right:1272.68px;text-align:right;">-</span>
<span style="top:862.00px;font-size:14.4px;line-height:1;color:#262626;right:1153.68px;text-align:right;">-</span>
<span style="top:862.00px;font-size:14.4px;line-height:1;color:#262626;right:1034.68px;text-align:right;">-</span>
<span style="top:862.00px;font-size:14.4px;line-height:1;color:#262626;right:915.68px;text-align:right;">-</span>
<span style="top:862.00px;font-size:14.4px;line-height:1;color:#262626;right:796.68px;text-align:right;">-</span>
<span style="top:862.00px;font-size:14.4px;line-height:1;color:#262626;right:677.68px;text-align:right;">-</span>
<span style="top:862.00px;font-size:14.4px;line-height:1;color:#262626;right:558.68px;text-align:right;">-</span>
<span style="top:862.00px;font-size:14.4px;line-height:1;color:#262626;right:439.68px;text-align:right;">-</span>
<span style="top:862.00px;font-size:14.4px;line-height:1;color:#262626;right:320.68px;text-align:right;">-</span>
<span style="top:862.00px;font-size:14.4px;line-height:1;color:#262626;right:201.68px;text-align:right;">-</span>
<span style="top:862.00px;font-size:14.4px;line-height:1;color:#262626;right:82.68px;text-align:right;">-</span>
<div style="left:135px;top:878px;width:2725px;height:20px;background:#4ab1e8;"></div>
<span style="top:882.00px;font-size:16.6px;line-height:1;color:#fff;font-weight:700;letter-spacing:0.167px;left:145.38px;">Net Cash Flow from Financing Activities</span>
<span style="top:882.00px;font-size:15.8px;line-height:1;color:#fff;font-weight:700;letter-spacing:0.000px;transform:scaleX(1.1650);transform-origin:right center;right:1989.32px;text-align:right;">900,000</span>
<span style="top:882.00px;font-size:15px;line-height:1;color:rgba(255,255,255,.78);right:1870.45px;text-align:right;">-</span>
<span style="top:882.00px;font-size:15.8px;line-height:1;color:#fff;font-weight:700;letter-spacing:0.000px;transform:scaleX(1.1650);transform-origin:right center;right:1751.43px;text-align:right;">98,333</span>
<span style="top:882.00px;font-size:15.8px;line-height:1;color:#fff;font-weight:700;letter-spacing:0.000px;transform:scaleX(1.1650);transform-origin:right center;right:1625.11px;text-align:right;">(1,667)</span>
<span style="top:882.00px;font-size:15.8px;line-height:1;color:#fff;font-weight:700;letter-spacing:0.000px;transform:scaleX(1.1650);transform-origin:right center;right:1506.11px;text-align:right;">(1,667)</span>
<span style="top:882.00px;font-size:15.8px;line-height:1;color:#fff;font-weight:700;letter-spacing:0.000px;transform:scaleX(1.1650);transform-origin:right center;right:1387.11px;text-align:right;">(1,667)</span>
<span style="top:882.00px;font-size:15.8px;line-height:1;color:#fff;font-weight:700;letter-spacing:0.000px;transform:scaleX(1.1650);transform-origin:right center;right:1268.11px;text-align:right;">(1,667)</span>
<span style="top:882.00px;font-size:15.8px;line-height:1;color:#fff;font-weight:700;letter-spacing:0.000px;transform:scaleX(1.1650);transform-origin:right center;right:1149.11px;text-align:right;">(1,667)</span>
<span style="top:882.00px;font-size:15.8px;line-height:1;color:#fff;font-weight:700;letter-spacing:0.000px;transform:scaleX(1.1650);transform-origin:right center;right:1030.11px;text-align:right;">(1,667)</span>
<span style="top:882.00px;font-size:15.8px;line-height:1;color:#fff;font-weight:700;letter-spacing:0.000px;transform:scaleX(1.1650);transform-origin:right center;right:911.11px;text-align:right;">(1,667)</span>
<span style="top:882.00px;font-size:15.8px;line-height:1;color:#fff;font-weight:700;letter-spacing:0.000px;transform:scaleX(1.1650);transform-origin:right center;right:792.11px;text-align:right;">(1,667)</span>
<span style="top:882.00px;font-size:15.8px;line-height:1;color:#fff;font-weight:700;letter-spacing:0.000px;transform:scaleX(1.1650);transform-origin:right center;right:673.11px;text-align:right;">(1,667)</span>
<span style="top:882.00px;font-size:15.8px;line-height:1;color:#fff;font-weight:700;letter-spacing:0.000px;transform:scaleX(1.1650);transform-origin:right center;right:554.11px;text-align:right;">(3,770)</span>
<span style="top:882.00px;font-size:15.8px;line-height:1;color:#fff;font-weight:700;letter-spacing:0.000px;transform:scaleX(1.1650);transform-origin:right center;right:435.11px;text-align:right;">(3,780)</span>
<span style="top:882.00px;font-size:15.8px;line-height:1;color:#fff;font-weight:700;letter-spacing:0.000px;transform:scaleX(1.1650);transform-origin:right center;right:316.11px;text-align:right;">(3,791)</span>
<span style="top:882.00px;font-size:15.8px;line-height:1;color:#fff;font-weight:700;letter-spacing:0.000px;transform:scaleX(1.1650);transform-origin:right center;right:197.11px;text-align:right;">(3,801)</span>
<span style="top:882.00px;font-size:15.8px;line-height:1;color:#fff;font-weight:700;letter-spacing:0.000px;transform:scaleX(1.1650);transform-origin:right center;right:78.11px;text-align:right;">(3,812)</span>
<div style="left:135px;top:915px;width:2725px;height:20.5px;background:#4ab1e8;"></div>
<span style="top:919.00px;font-size:16.6px;line-height:1;color:#fff;font-weight:700;letter-spacing:0.000px;transform:scaleX(1.0542);transform-origin:left center;left:145.32px;">Net Increase/(Decrease) in Cash Held</span>
<span style="top:919.00px;font-size:15.8px;line-height:1;color:#fff;font-weight:700;letter-spacing:0.000px;transform:scaleX(1.1650);transform-origin:right center;right:1989.27px;text-align:right;">767,227</span>
<span style="top:919.00px;font-size:15.8px;line-height:1;color:#fff;font-weight:700;letter-spacing:0.000px;transform:scaleX(1.1650);transform-origin:right center;right:1863.11px;text-align:right;">(116,092)</span>
<span style="top:919.00px;font-size:15.8px;line-height:1;color:#fff;font-weight:700;letter-spacing:0.000px;transform:scaleX(1.1650);transform-origin:right center;right:1744.13px;text-align:right;">(64,094)</span>
<span style="top:919.00px;font-size:15.8px;line-height:1;color:#fff;font-weight:700;letter-spacing:0.000px;transform:scaleX(1.1650);transform-origin:right center;right:1625.11px;text-align:right;">(166,424)</span>
<span style="top:919.00px;font-size:15.8px;line-height:1;color:#fff;font-weight:700;letter-spacing:0.000px;transform:scaleX(1.1650);transform-origin:right center;right:1506.11px;text-align:right;">(164,928)</span>
<span style="top:919.00px;font-size:15.8px;line-height:1;color:#fff;font-weight:700;letter-spacing:0.000px;transform:scaleX(1.1650);transform-origin:right center;right:1387.11px;text-align:right;">(195,851)</span>
<span style="top:919.00px;font-size:15.8px;line-height:1;color:#fff;font-weight:700;letter-spacing:0.000px;transform:scaleX(1.1650);transform-origin:right center;right:1268.11px;text-align:right;">(369,055)</span>
<span style="top:919.00px;font-size:15.8px;line-height:1;color:#fff;font-weight:700;letter-spacing:0.000px;transform:scaleX(1.1650);transform-origin:right center;right:1149.11px;text-align:right;">(309,519)</span>
<span style="top:919.00px;font-size:15.8px;line-height:1;color:#fff;font-weight:700;letter-spacing:0.000px;transform:scaleX(1.1650);transform-origin:right center;right:1030.13px;text-align:right;">(90,124)</span>
<span style="top:919.00px;font-size:15.8px;line-height:1;color:#fff;font-weight:700;letter-spacing:0.000px;transform:scaleX(1.1650);transform-origin:right center;right:911.13px;text-align:right;">(68,881)</span>
<span style="top:919.00px;font-size:15.8px;line-height:1;color:#fff;font-weight:700;letter-spacing:0.000px;transform:scaleX(1.1650);transform-origin:right center;right:799.55px;text-align:right;">9,898</span>
<span style="top:919.00px;font-size:15.8px;line-height:1;color:#fff;font-weight:700;letter-spacing:0.000px;transform:scaleX(1.1650);transform-origin:right center;right:680.62px;text-align:right;">11,141</span>
<span style="top:919.00px;font-size:15.8px;line-height:1;color:#fff;font-weight:700;letter-spacing:0.000px;transform:scaleX(1.1650);transform-origin:right center;right:561.30px;text-align:right;">22,737</span>
<span style="top:919.00px;font-size:15.8px;line-height:1;color:#fff;font-weight:700;letter-spacing:0.000px;transform:scaleX(1.1650);transform-origin:right center;right:442.53px;text-align:right;">67,038</span>
<span style="top:919.00px;font-size:15.8px;line-height:1;color:#fff;font-weight:700;letter-spacing:0.000px;transform:scaleX(1.1650);transform-origin:right center;right:323.43px;text-align:right;">82,109</span>
<span style="top:919.00px;font-size:15.8px;line-height:1;color:#fff;font-weight:700;letter-spacing:0.000px;transform:scaleX(1.1650);transform-origin:right center;right:204.53px;text-align:right;">72,238</span>
<span style="top:919.00px;font-size:15.8px;line-height:1;color:#fff;font-weight:700;letter-spacing:0.000px;transform:scaleX(1.1650);transform-origin:right center;right:85.62px;text-align:right;">76,931</span>
<span style="top:973.00px;font-size:19.6px;line-height:1;color:#1c1c1c;font-weight:700;letter-spacing:0.000px;transform:scaleX(1.0974);transform-origin:left center;left:113.74px;">Cash Flow Statement (indirect method), $</span>
<span style="top:1012.00px;font-size:17.4px;line-height:1;color:#1c1c1c;font-weight:700;letter-spacing:0.000px;transform:scaleX(1.0829);transform-origin:left center;left:125.45px;">Operating Activities</span>
<span style="top:1033.00px;font-size:15px;line-height:1;color:#222;letter-spacing:0.000px;transform:scaleX(1.0486);transform-origin:left center;left:138.30px;">Net Income Less Depreciation</span>
<span style="top:1032.00px;font-size:16.1px;line-height:1;color:#1e1e1e;right:1989.34px;text-align:right;">10,705</span>
<span style="top:1032.00px;font-size:16.1px;line-height:1;color:#1e1e1e;right:1870.30px;text-align:right;">10,888</span>
<span style="top:1032.00px;font-size:16.1px;line-height:1;color:#1e1e1e;right:1751.30px;text-align:right;">10,593</span>
<span style="top:1032.00px;font-size:16.1px;line-height:1;color:#1e1e1e;right:1632.30px;text-align:right;">10,858</span>
<span style="top:1032.00px;font-size:16.1px;line-height:1;color:#1e1e1e;right:1513.28px;text-align:right;">11,123</span>
<span style="top:1032.00px;font-size:16.1px;line-height:1;color:#1e1e1e;right:1394.20px;text-align:right;">11,432</span>
<span style="top:1032.00px;font-size:16.1px;line-height:1;color:#1e1e1e;right:1275.28px;text-align:right;">11,996</span>
<span style="top:1032.00px;font-size:16.1px;line-height:1;color:#1e1e1e;right:1156.30px;text-align:right;">12,148</span>
<span style="top:1032.00px;font-size:16.1px;line-height:1;color:#1e1e1e;right:1037.26px;text-align:right;">12,159</span>
<span style="top:1032.00px;font-size:16.1px;line-height:1;color:#1e1e1e;right:918.38px;text-align:right;">12,170</span>
<span style="top:1032.00px;font-size:16.1px;line-height:1;color:#1e1e1e;right:799.22px;text-align:right;">12,181</span>
<span style="top:1032.00px;font-size:16.1px;line-height:1;color:#1e1e1e;right:680.22px;text-align:right;">12,192</span>
<span style="top:1032.00px;font-size:16.1px;line-height:1;color:#1e1e1e;right:561.54px;text-align:right;">78,334</span>
<span style="top:1032.00px;font-size:16.1px;line-height:1;color:#1e1e1e;right:442.22px;text-align:right;">78,351</span>
<span style="top:1032.00px;font-size:16.1px;line-height:1;color:#1e1e1e;right:323.22px;text-align:right;">78,367</span>
<span style="top:1032.00px;font-size:16.1px;line-height:1;color:#1e1e1e;right:204.30px;text-align:right;">78,383</span>
<span style="top:1032.00px;font-size:16.1px;line-height:1;color:#1e1e1e;right:85.38px;text-align:right;">78,400</span>
<span style="top:1053.00px;font-size:15px;line-height:1;color:#222;letter-spacing:0.000px;transform:scaleX(1.0527);transform-origin:left center;left:138.81px;">Changes in Working Capital</span>
<span style="top:1052.00px;font-size:16.1px;line-height:1;color:#1e1e1e;right:1982.74px;text-align:right;">(18,478)</span>
<span style="top:1052.00px;font-size:16.1px;line-height:1;color:#1e1e1e;right:1863.72px;text-align:right;">(1,980)</span>
<span style="top:1052.00px;font-size:16.1px;line-height:1;color:#1e1e1e;right:1751.40px;text-align:right;">1,980</span>
<span style="top:1052.00px;font-size:16.1px;line-height:1;color:#1e1e1e;right:1625.74px;text-align:right;">(616)</span>
<span style="top:1052.00px;font-size:16.1px;line-height:1;color:#1e1e1e;right:1513.30px;text-align:right;">616</span>
<span style="top:1052.00px;font-size:16.1px;line-height:1;color:#1e1e1e;right:1387.74px;text-align:right;">(616)</span>
<span style="top:1052.00px;font-size:16.1px;line-height:1;color:#1e1e1e;right:1275.30px;text-align:right;">616</span>
<span style="top:1052.00px;font-size:16.1px;line-height:1;color:#1e1e1e;right:1155.81px;text-align:right;">-</span>
<span style="top:1052.00px;font-size:16.1px;line-height:1;color:#1e1e1e;right:1030.74px;text-align:right;">(616)</span>
<span style="top:1052.00px;font-size:16.1px;line-height:1;color:#1e1e1e;right:918.30px;text-align:right;">616</span>
<span style="top:1052.00px;font-size:16.1px;line-height:1;color:#1e1e1e;right:792.74px;text-align:right;">(616)</span>
<span style="top:1052.00px;font-size:16.1px;line-height:1;color:#1e1e1e;right:680.30px;text-align:right;">616</span>
<span style="top:1052.00px;font-size:16.1px;line-height:1;color:#1e1e1e;right:554.74px;text-align:right;">(51,828)</span>
<span style="top:1052.00px;font-size:16.1px;line-height:1;color:#1e1e1e;right:435.72px;text-align:right;">(7,533)</span>
<span style="top:1052.00px;font-size:16.1px;line-height:1;color:#1e1e1e;right:323.32px;text-align:right;">7,533</span>
<span style="top:1052.00px;font-size:16.1px;line-height:1;color:#1e1e1e;right:197.72px;text-align:right;">(2,344)</span>
<span style="top:1052.00px;font-size:16.1px;line-height:1;color:#1e1e1e;right:85.56px;text-align:right;">2,344</span>
<div style="left:122.2px;top:1069px;width:2737.8px;height:20.5px;background:#4ab1e8;"></div>
<span style="top:1072.00px;font-size:16.6px;line-height:1;color:#fff;font-weight:700;letter-spacing:-0.000px;transform:scaleX(1.0536);transform-origin:left center;left:133.83px;">Total Operating Activities</span>
<span style="top:1072.00px;font-size:15.8px;line-height:1;color:#fff;font-weight:700;letter-spacing:0.000px;transform:scaleX(1.1650);transform-origin:right center;right:1982.11px;text-align:right;">(7,773)</span>
<span style="top:1072.00px;font-size:15.8px;line-height:1;color:#fff;font-weight:700;letter-spacing:0.000px;transform:scaleX(1.1650);transform-origin:right center;right:1870.55px;text-align:right;">8,908</span>
<span style="top:1072.00px;font-size:15.8px;line-height:1;color:#fff;font-weight:700;letter-spacing:0.000px;transform:scaleX(1.1650);transform-origin:right center;right:1751.43px;text-align:right;">12,573</span>
<span style="top:1072.00px;font-size:15.8px;line-height:1;color:#fff;font-weight:700;letter-spacing:0.000px;transform:scaleX(1.1650);transform-origin:right center;right:1632.39px;text-align:right;">10,242</span>
<span style="top:1072.00px;font-size:15.8px;line-height:1;color:#fff;font-weight:700;letter-spacing:0.000px;transform:scaleX(1.1650);transform-origin:right center;right:1513.44px;text-align:right;">11,739</span>
<span style="top:1072.00px;font-size:15.8px;line-height:1;color:#fff;font-weight:700;letter-spacing:0.000px;transform:scaleX(1.1650);transform-origin:right center;right:1394.43px;text-align:right;">10,816</span>
<span style="top:1072.00px;font-size:15.8px;line-height:1;color:#fff;font-weight:700;letter-spacing:0.000px;transform:scaleX(1.1650);transform-origin:right center;right:1275.39px;text-align:right;">12,612</span>
<span style="top:1072.00px;font-size:15.8px;line-height:1;color:#fff;font-weight:700;letter-spacing:0.000px;transform:scaleX(1.1650);transform-origin:right center;right:1156.53px;text-align:right;">12,148</span>
<span style="top:1072.00px;font-size:15.8px;line-height:1;color:#fff;font-weight:700;letter-spacing:0.000px;transform:scaleX(1.1650);transform-origin:right center;right:1037.44px;text-align:right;">11,543</span>
<span style="top:1072.00px;font-size:15.8px;line-height:1;color:#fff;font-weight:700;letter-spacing:0.000px;transform:scaleX(1.1650);transform-origin:right center;right:918.43px;text-align:right;">12,786</span>
<span style="top:1072.00px;font-size:15.8px;line-height:1;color:#fff;font-weight:700;letter-spacing:0.000px;transform:scaleX(1.1650);transform-origin:right center;right:799.62px;text-align:right;">11,565</span>
<span style="top:1072.00px;font-size:15.8px;line-height:1;color:#fff;font-weight:700;letter-spacing:0.000px;transform:scaleX(1.1650);transform-origin:right center;right:680.53px;text-align:right;">12,808</span>
<span style="top:1072.00px;font-size:15.8px;line-height:1;color:#fff;font-weight:700;letter-spacing:0.000px;transform:scaleX(1.1650);transform-origin:right center;right:561.43px;text-align:right;">26,506</span>
<span style="top:1072.00px;font-size:15.8px;line-height:1;color:#fff;font-weight:700;letter-spacing:0.000px;transform:scaleX(1.1650);transform-origin:right center;right:442.53px;text-align:right;">70,818</span>
<span style="top:1072.00px;font-size:15.8px;line-height:1;color:#fff;font-weight:700;letter-spacing:0.000px;transform:scaleX(1.1650);transform-origin:right center;right:323.34px;text-align:right;">85,900</span>
<span style="top:1072.00px;font-size:15.8px;line-height:1;color:#fff;font-weight:700;letter-spacing:0.000px;transform:scaleX(1.1650);transform-origin:right center;right:204.34px;text-align:right;">76,040</span>
<span style="top:1072.00px;font-size:15.8px;line-height:1;color:#fff;font-weight:700;letter-spacing:0.000px;transform:scaleX(1.1650);transform-origin:right center;right:85.43px;text-align:right;">80,743</span>
<span style="top:1117.00px;font-size:17.4px;line-height:1;color:#1c1c1c;font-weight:700;letter-spacing:0.003px;transform:scaleX(1.1000);transform-origin:left center;left:124.91px;">Investing Activities</span>
<span style="top:1138.00px;font-size:15px;line-height:1;color:#222;letter-spacing:0.000px;transform:scaleX(1.0500);transform-origin:left center;left:138.81px;">Capital Expenditure</span>
<span style="top:1137.00px;font-size:16.1px;line-height:1;color:#1e1e1e;right:1982.72px;text-align:right;">(125,000)</span>
<span style="top:1137.00px;font-size:16.1px;line-height:1;color:#1e1e1e;right:1863.72px;text-align:right;">(125,000)</span>
<span style="top:1137.00px;font-size:16.1px;line-height:1;color:#1e1e1e;right:1744.72px;text-align:right;">(175,000)</span>
<span style="top:1137.00px;font-size:16.1px;line-height:1;color:#1e1e1e;right:1625.72px;text-align:right;">(175,000)</span>
<span style="top:1137.00px;font-size:16.1px;line-height:1;color:#1e1e1e;right:1506.72px;text-align:right;">(175,000)</span>
<span style="top:1137.00px;font-size:16.1px;line-height:1;color:#1e1e1e;right:1387.72px;text-align:right;">(205,000)</span>
<span style="top:1137.00px;font-size:16.1px;line-height:1;color:#1e1e1e;right:1268.72px;text-align:right;">(380,000)</span>
<span style="top:1137.00px;font-size:16.1px;line-height:1;color:#1e1e1e;right:1149.72px;text-align:right;">(320,000)</span>
<span style="top:1137.00px;font-size:16.1px;line-height:1;color:#1e1e1e;right:1030.72px;text-align:right;">(100,000)</span>
<span style="top:1137.00px;font-size:16.1px;line-height:1;color:#1e1e1e;right:911.74px;text-align:right;">(80,000)</span>
<span style="top:1137.00px;font-size:16.1px;line-height:1;color:#1e1e1e;right:798.81px;text-align:right;">-</span>
<span style="top:1137.00px;font-size:16.1px;line-height:1;color:#1e1e1e;right:679.81px;text-align:right;">-</span>
<span style="top:1137.00px;font-size:16.1px;line-height:1;color:#1e1e1e;right:560.81px;text-align:right;">-</span>
<span style="top:1137.00px;font-size:16.1px;line-height:1;color:#1e1e1e;right:441.81px;text-align:right;">-</span>
<span style="top:1137.00px;font-size:16.1px;line-height:1;color:#1e1e1e;right:322.81px;text-align:right;">-</span>
<span style="top:1137.00px;font-size:16.1px;line-height:1;color:#1e1e1e;right:203.81px;text-align:right;">-</span>
<span style="top:1137.00px;font-size:16.1px;line-height:1;color:#1e1e1e;right:84.81px;text-align:right;">-</span>
<div style="left:122.2px;top:1154.5px;width:2737.8px;height:20px;background:#4ab1e8;"></div>
<span style="top:1158.00px;font-size:16.6px;line-height:1;color:#fff;font-weight:700;letter-spacing:0.000px;transform:scaleX(1.0386);transform-origin:left center;left:133.83px;">Total Cash From (For) Investing Activities</span>
<span style="top:1158.00px;font-size:15.8px;line-height:1;color:#fff;font-weight:700;letter-spacing:0.000px;transform:scaleX(1.1650);transform-origin:right center;right:1982.11px;text-align:right;">(125,000)</span>
<span style="top:1158.00px;font-size:15.8px;line-height:1;color:#fff;font-weight:700;letter-spacing:0.000px;transform:scaleX(1.1650);transform-origin:right center;right:1863.11px;text-align:right;">(125,000)</span>
<span style="top:1158.00px;font-size:15.8px;line-height:1;color:#fff;font-weight:700;letter-spacing:0.000px;transform:scaleX(1.1650);transform-origin:right center;right:1744.11px;text-align:right;">(175,000)</span>
<span style="top:1158.00px;font-size:15.8px;line-height:1;color:#fff;font-weight:700;letter-spacing:0.000px;transform:scaleX(1.1650);transform-origin:right center;right:1625.11px;text-align:right;">(175,000)</span>
<span style="top:1158.00px;font-size:15.8px;line-height:1;color:#fff;font-weight:700;letter-spacing:0.000px;transform:scaleX(1.1650);transform-origin:right center;right:1506.11px;text-align:right;">(175,000)</span>
<span style="top:1158.00px;font-size:15.8px;line-height:1;color:#fff;font-weight:700;letter-spacing:0.000px;transform:scaleX(1.1650);transform-origin:right center;right:1387.11px;text-align:right;">(205,000)</span>
<span style="top:1158.00px;font-size:15.8px;line-height:1;color:#fff;font-weight:700;letter-spacing:0.000px;transform:scaleX(1.1650);transform-origin:right center;right:1268.11px;text-align:right;">(380,000)</span>
<span style="top:1158.00px;font-size:15.8px;line-height:1;color:#fff;font-weight:700;letter-spacing:0.000px;transform:scaleX(1.1650);transform-origin:right center;right:1149.11px;text-align:right;">(320,000)</span>
<span style="top:1158.00px;font-size:15.8px;line-height:1;color:#fff;font-weight:700;letter-spacing:0.000px;transform:scaleX(1.1650);transform-origin:right center;right:1030.11px;text-align:right;">(100,000)</span>
<span style="top:1158.00px;font-size:15.8px;line-height:1;color:#fff;font-weight:700;letter-spacing:0.000px;transform:scaleX(1.1650);transform-origin:right center;right:911.13px;text-align:right;">(80,000)</span>
<span style="top:1158.00px;font-size:15px;line-height:1;color:rgba(255,255,255,.78);right:799.45px;text-align:right;">-</span>
<span style="top:1158.00px;font-size:15px;line-height:1;color:rgba(255,255,255,.78);right:680.45px;text-align:right;">-</span>
<span style="top:1158.00px;font-size:15px;line-height:1;color:rgba(255,255,255,.78);right:561.45px;text-align:right;">-</span>
<span style="top:1158.00px;font-size:15px;line-height:1;color:rgba(255,255,255,.78);right:442.45px;text-align:right;">-</span>
<span style="top:1158.00px;font-size:15px;line-height:1;color:rgba(255,255,255,.78);right:323.45px;text-align:right;">-</span>
<span style="top:1158.00px;font-size:15px;line-height:1;color:rgba(255,255,255,.78);right:204.45px;text-align:right;">-</span>
<span style="top:1158.00px;font-size:15px;line-height:1;color:rgba(255,255,255,.78);right:85.45px;text-align:right;">-</span>
<span style="top:1202.00px;font-size:17.4px;line-height:1;color:#1c1c1c;font-weight:700;letter-spacing:0.000px;transform:scaleX(1.0740);transform-origin:left center;left:124.94px;">Financing Activities</span>
<span style="top:1223.00px;font-size:15px;line-height:1;color:#222;letter-spacing:0.064px;transform:scaleX(1.0700);transform-origin:left center;left:138.28px;">Equity Investment</span>
<span style="top:1222.00px;font-size:16.1px;line-height:1;color:#1e1e1e;right:1989.36px;text-align:right;">700,000</span>
<span style="top:1222.00px;font-size:16.1px;line-height:1;color:#1e1e1e;right:1869.81px;text-align:right;">-</span>
<span style="top:1222.00px;font-size:16.1px;line-height:1;color:#1e1e1e;right:1750.81px;text-align:right;">-</span>
<span style="top:1222.00px;font-size:16.1px;line-height:1;color:#1e1e1e;right:1631.81px;text-align:right;">-</span>
<span style="top:1222.00px;font-size:16.1px;line-height:1;color:#1e1e1e;right:1512.81px;text-align:right;">-</span>
<span style="top:1222.00px;font-size:16.1px;line-height:1;color:#1e1e1e;right:1393.81px;text-align:right;">-</span>
<span style="top:1222.00px;font-size:16.1px;line-height:1;color:#1e1e1e;right:1274.81px;text-align:right;">-</span>
<span style="top:1222.00px;font-size:16.1px;line-height:1;color:#1e1e1e;right:1155.81px;text-align:right;">-</span>
<span style="top:1222.00px;font-size:16.1px;line-height:1;color:#1e1e1e;right:1036.81px;text-align:right;">-</span>
<span style="top:1222.00px;font-size:16.1px;line-height:1;color:#1e1e1e;right:917.81px;text-align:right;">-</span>
<span style="top:1222.00px;font-size:16.1px;line-height:1;color:#1e1e1e;right:798.81px;text-align:right;">-</span>
<span style="top:1222.00px;font-size:16.1px;line-height:1;color:#1e1e1e;right:679.81px;text-align:right;">-</span>
<span style="top:1222.00px;font-size:16.1px;line-height:1;color:#1e1e1e;right:560.81px;text-align:right;">-</span>
<span style="top:1222.00px;font-size:16.1px;line-height:1;color:#1e1e1e;right:441.81px;text-align:right;">-</span>
<span style="top:1222.00px;font-size:16.1px;line-height:1;color:#1e1e1e;right:322.81px;text-align:right;">-</span>
<span style="top:1222.00px;font-size:16.1px;line-height:1;color:#1e1e1e;right:203.81px;text-align:right;">-</span>
<span style="top:1222.00px;font-size:16.1px;line-height:1;color:#1e1e1e;right:84.81px;text-align:right;">-</span>
<span style="top:1242.00px;font-size:15px;line-height:1;color:#222;letter-spacing:0.222px;left:138.36px;">Loans</span>
<span style="top:1241.00px;font-size:16.1px;line-height:1;color:#1e1e1e;right:1989.36px;text-align:right;">200,000</span>
<span style="top:1241.00px;font-size:16.1px;line-height:1;color:#1e1e1e;right:1869.81px;text-align:right;">-</span>
<span style="top:1241.00px;font-size:16.1px;line-height:1;color:#1e1e1e;right:1751.30px;text-align:right;">98,333</span>
<span style="top:1241.00px;font-size:16.1px;line-height:1;color:#1e1e1e;right:1625.72px;text-align:right;">(1,667)</span>
<span style="top:1241.00px;font-size:16.1px;line-height:1;color:#1e1e1e;right:1506.72px;text-align:right;">(1,667)</span>
<span style="top:1241.00px;font-size:16.1px;line-height:1;color:#1e1e1e;right:1387.72px;text-align:right;">(1,667)</span>
<span style="top:1241.00px;font-size:16.1px;line-height:1;color:#1e1e1e;right:1268.72px;text-align:right;">(1,667)</span>
<span style="top:1241.00px;font-size:16.1px;line-height:1;color:#1e1e1e;right:1149.72px;text-align:right;">(1,667)</span>
<span style="top:1241.00px;font-size:16.1px;line-height:1;color:#1e1e1e;right:1030.72px;text-align:right;">(1,667)</span>
<span style="top:1241.00px;font-size:16.1px;line-height:1;color:#1e1e1e;right:911.72px;text-align:right;">(1,667)</span>
<span style="top:1241.00px;font-size:16.1px;line-height:1;color:#1e1e1e;right:792.72px;text-align:right;">(1,667)</span>
<span style="top:1241.00px;font-size:16.1px;line-height:1;color:#1e1e1e;right:673.72px;text-align:right;">(1,667)</span>
<span style="top:1241.00px;font-size:16.1px;line-height:1;color:#1e1e1e;right:554.72px;text-align:right;">(3,770)</span>
<span style="top:1241.00px;font-size:16.1px;line-height:1;color:#1e1e1e;right:435.72px;text-align:right;">(3,780)</span>
<span style="top:1241.00px;font-size:16.1px;line-height:1;color:#1e1e1e;right:316.72px;text-align:right;">(3,791)</span>
<span style="top:1241.00px;font-size:16.1px;line-height:1;color:#1e1e1e;right:197.72px;text-align:right;">(3,801)</span>
<span style="top:1241.00px;font-size:16.1px;line-height:1;color:#1e1e1e;right:78.72px;text-align:right;">(3,812)</span>
<span style="top:1261.00px;font-size:15px;line-height:1;color:#222;letter-spacing:0.000px;transform:scaleX(1.0513);transform-origin:left center;left:138.30px;">Dividends Paid</span>
<span style="top:1260.00px;font-size:16.1px;line-height:1;color:#1e1e1e;right:1988.81px;text-align:right;">-</span>
<span style="top:1260.00px;font-size:16.1px;line-height:1;color:#1e1e1e;right:1869.81px;text-align:right;">-</span>
<span style="top:1260.00px;font-size:16.1px;line-height:1;color:#1e1e1e;right:1750.81px;text-align:right;">-</span>
<span style="top:1260.00px;font-size:16.1px;line-height:1;color:#1e1e1e;right:1631.81px;text-align:right;">-</span>
<span style="top:1260.00px;font-size:16.1px;line-height:1;color:#1e1e1e;right:1512.81px;text-align:right;">-</span>
<span style="top:1260.00px;font-size:16.1px;line-height:1;color:#1e1e1e;right:1393.81px;text-align:right;">-</span>
<span style="top:1260.00px;font-size:16.1px;line-height:1;color:#1e1e1e;right:1274.81px;text-align:right;">-</span>
<span style="top:1260.00px;font-size:16.1px;line-height:1;color:#1e1e1e;right:1155.81px;text-align:right;">-</span>
<span style="top:1260.00px;font-size:16.1px;line-height:1;color:#1e1e1e;right:1036.81px;text-align:right;">-</span>
<span style="top:1260.00px;font-size:16.1px;line-height:1;color:#1e1e1e;right:917.81px;text-align:right;">-</span>
<span style="top:1260.00px;font-size:16.1px;line-height:1;color:#1e1e1e;right:798.81px;text-align:right;">-</span>
<span style="top:1260.00px;font-size:16.1px;line-height:1;color:#1e1e1e;right:679.81px;text-align:right;">-</span>
<span style="top:1260.00px;font-size:16.1px;line-height:1;color:#1e1e1e;right:560.81px;text-align:right;">-</span>
<span style="top:1260.00px;font-size:16.1px;line-height:1;color:#1e1e1e;right:441.81px;text-align:right;">-</span>
<span style="top:1260.00px;font-size:16.1px;line-height:1;color:#1e1e1e;right:322.81px;text-align:right;">-</span>
<span style="top:1260.00px;font-size:16.1px;line-height:1;color:#1e1e1e;right:203.81px;text-align:right;">-</span>
<span style="top:1260.00px;font-size:16.1px;line-height:1;color:#1e1e1e;right:84.81px;text-align:right;">-</span>
<div style="left:122.2px;top:1277.5px;width:2737.8px;height:20.5px;background:#4ab1e8;"></div>
<span style="top:1281.00px;font-size:16.6px;line-height:1;color:#fff;font-weight:700;letter-spacing:0.197px;left:133.83px;">Total Cash From (For) Financing Activities</span>
<span style="top:1281.00px;font-size:15.8px;line-height:1;color:#fff;font-weight:700;letter-spacing:0.000px;transform:scaleX(1.1650);transform-origin:right center;right:1989.32px;text-align:right;">900,000</span>
<span style="top:1281.00px;font-size:15px;line-height:1;color:rgba(255,255,255,.78);right:1870.45px;text-align:right;">-</span>
<span style="top:1281.00px;font-size:15.8px;line-height:1;color:#fff;font-weight:700;letter-spacing:0.000px;transform:scaleX(1.1650);transform-origin:right center;right:1751.43px;text-align:right;">98,333</span>
<span style="top:1281.00px;font-size:15.8px;line-height:1;color:#fff;font-weight:700;letter-spacing:0.000px;transform:scaleX(1.1650);transform-origin:right center;right:1625.11px;text-align:right;">(1,667)</span>
<span style="top:1281.00px;font-size:15.8px;line-height:1;color:#fff;font-weight:700;letter-spacing:0.000px;transform:scaleX(1.1650);transform-origin:right center;right:1506.11px;text-align:right;">(1,667)</span>
<span style="top:1281.00px;font-size:15.8px;line-height:1;color:#fff;font-weight:700;letter-spacing:0.000px;transform:scaleX(1.1650);transform-origin:right center;right:1387.11px;text-align:right;">(1,667)</span>
<span style="top:1281.00px;font-size:15.8px;line-height:1;color:#fff;font-weight:700;letter-spacing:0.000px;transform:scaleX(1.1650);transform-origin:right center;right:1268.11px;text-align:right;">(1,667)</span>
<span style="top:1281.00px;font-size:15.8px;line-height:1;color:#fff;font-weight:700;letter-spacing:0.000px;transform:scaleX(1.1650);transform-origin:right center;right:1149.11px;text-align:right;">(1,667)</span>
<span style="top:1281.00px;font-size:15.8px;line-height:1;color:#fff;font-weight:700;letter-spacing:0.000px;transform:scaleX(1.1650);transform-origin:right center;right:1030.11px;text-align:right;">(1,667)</span>
<span style="top:1281.00px;font-size:15.8px;line-height:1;color:#fff;font-weight:700;letter-spacing:0.000px;transform:scaleX(1.1650);transform-origin:right center;right:911.11px;text-align:right;">(1,667)</span>
<span style="top:1281.00px;font-size:15.8px;line-height:1;color:#fff;font-weight:700;letter-spacing:0.000px;transform:scaleX(1.1650);transform-origin:right center;right:792.11px;text-align:right;">(1,667)</span>
<span style="top:1281.00px;font-size:15.8px;line-height:1;color:#fff;font-weight:700;letter-spacing:0.000px;transform:scaleX(1.1650);transform-origin:right center;right:673.11px;text-align:right;">(1,667)</span>
<span style="top:1281.00px;font-size:15.8px;line-height:1;color:#fff;font-weight:700;letter-spacing:0.000px;transform:scaleX(1.1650);transform-origin:right center;right:554.11px;text-align:right;">(3,770)</span>
<span style="top:1281.00px;font-size:15.8px;line-height:1;color:#fff;font-weight:700;letter-spacing:0.000px;transform:scaleX(1.1650);transform-origin:right center;right:435.11px;text-align:right;">(3,780)</span>
<span style="top:1281.00px;font-size:15.8px;line-height:1;color:#fff;font-weight:700;letter-spacing:0.000px;transform:scaleX(1.1650);transform-origin:right center;right:316.11px;text-align:right;">(3,791)</span>
<span style="top:1281.00px;font-size:15.8px;line-height:1;color:#fff;font-weight:700;letter-spacing:0.000px;transform:scaleX(1.1650);transform-origin:right center;right:197.11px;text-align:right;">(3,801)</span>
<span style="top:1281.00px;font-size:15.8px;line-height:1;color:#fff;font-weight:700;letter-spacing:0.000px;transform:scaleX(1.1650);transform-origin:right center;right:78.11px;text-align:right;">(3,812)</span>
<span style="top:1324.00px;font-size:17.4px;line-height:1;color:#1c1c1c;font-weight:700;letter-spacing:0.000px;transform:scaleX(1.0842);transform-origin:left center;left:125.45px;">Cash Movement</span>
<span style="top:1347.00px;font-size:15px;line-height:1;color:#222;letter-spacing:0.000px;transform:scaleX(1.0349);transform-origin:left center;left:138.82px;">Cash and Cash Equivalents Beginning</span>
<span style="top:1346.00px;font-size:16.1px;line-height:1;color:#1e1e1e;right:1988.81px;text-align:right;">-</span>
<span style="top:1346.00px;font-size:16.1px;line-height:1;color:#1e1e1e;right:1870.20px;text-align:right;">767,227</span>
<span style="top:1346.00px;font-size:16.1px;line-height:1;color:#1e1e1e;right:1751.32px;text-align:right;">651,135</span>
<span style="top:1346.00px;font-size:16.1px;line-height:1;color:#1e1e1e;right:1632.20px;text-align:right;">587,041</span>
<span style="top:1346.00px;font-size:16.1px;line-height:1;color:#1e1e1e;right:1513.20px;text-align:right;">420,617</span>
<span style="top:1346.00px;font-size:16.1px;line-height:1;color:#1e1e1e;right:1394.24px;text-align:right;">255,689</span>
<span style="top:1346.00px;font-size:16.1px;line-height:1;color:#1e1e1e;right:1275.30px;text-align:right;">59,838</span>
<span style="top:1346.00px;font-size:16.1px;line-height:1;color:#1e1e1e;right:1149.72px;text-align:right;">(309,217)</span>
<span style="top:1346.00px;font-size:16.1px;line-height:1;color:#1e1e1e;right:1030.72px;text-align:right;">(618,736)</span>
<span style="top:1346.00px;font-size:16.1px;line-height:1;color:#1e1e1e;right:911.72px;text-align:right;">(708,860)</span>
<span style="top:1346.00px;font-size:16.1px;line-height:1;color:#1e1e1e;right:792.72px;text-align:right;">(777,741)</span>
<span style="top:1346.00px;font-size:16.1px;line-height:1;color:#1e1e1e;right:673.72px;text-align:right;">(767,843)</span>
<span style="top:1346.00px;font-size:16.1px;line-height:1;color:#1e1e1e;right:554.72px;text-align:right;">(756,701)</span>
<span style="top:1346.00px;font-size:16.1px;line-height:1;color:#1e1e1e;right:435.72px;text-align:right;">(733,965)</span>
<span style="top:1346.00px;font-size:16.1px;line-height:1;color:#1e1e1e;right:316.72px;text-align:right;">(666,927)</span>
<span style="top:1346.00px;font-size:16.1px;line-height:1;color:#1e1e1e;right:197.72px;text-align:right;">(584,818)</span>
<span style="top:1346.00px;font-size:16.1px;line-height:1;color:#1e1e1e;right:78.72px;text-align:right;">(512,579)</span>
<span style="top:1370.00px;font-size:15px;line-height:1;color:#222;letter-spacing:0.000px;transform:scaleX(1.0378);transform-origin:left center;left:138.32px;">Net (Increase) Decrease In Cash</span>
<span style="top:1369.00px;font-size:16.1px;line-height:1;color:#1e1e1e;right:1989.20px;text-align:right;">767,227</span>
<span style="top:1369.00px;font-size:16.1px;line-height:1;color:#1e1e1e;right:1863.71px;text-align:right;">(116,092)</span>
<span style="top:1369.00px;font-size:16.1px;line-height:1;color:#1e1e1e;right:1744.74px;text-align:right;">(64,094)</span>
<span style="top:1369.00px;font-size:16.1px;line-height:1;color:#1e1e1e;right:1625.72px;text-align:right;">(166,424)</span>
<span style="top:1369.00px;font-size:16.1px;line-height:1;color:#1e1e1e;right:1506.72px;text-align:right;">(164,928)</span>
<span style="top:1369.00px;font-size:16.1px;line-height:1;color:#1e1e1e;right:1387.72px;text-align:right;">(195,851)</span>
<span style="top:1369.00px;font-size:16.1px;line-height:1;color:#1e1e1e;right:1268.72px;text-align:right;">(369,055)</span>
<span style="top:1369.00px;font-size:16.1px;line-height:1;color:#1e1e1e;right:1149.72px;text-align:right;">(309,519)</span>
<span style="top:1369.00px;font-size:16.1px;line-height:1;color:#1e1e1e;right:1030.74px;text-align:right;">(90,124)</span>
<span style="top:1369.00px;font-size:16.1px;line-height:1;color:#1e1e1e;right:911.74px;text-align:right;">(68,881)</span>
<span style="top:1369.00px;font-size:16.1px;line-height:1;color:#1e1e1e;right:799.32px;text-align:right;">9,898</span>
<span style="top:1369.00px;font-size:16.1px;line-height:1;color:#1e1e1e;right:680.20px;text-align:right;">11,141</span>
<span style="top:1369.00px;font-size:16.1px;line-height:1;color:#1e1e1e;right:561.22px;text-align:right;">22,737</span>
<span style="top:1369.00px;font-size:16.1px;line-height:1;color:#1e1e1e;right:442.30px;text-align:right;">67,038</span>
<span style="top:1369.00px;font-size:16.1px;line-height:1;color:#1e1e1e;right:323.26px;text-align:right;">82,109</span>
<span style="top:1369.00px;font-size:16.1px;line-height:1;color:#1e1e1e;right:204.30px;text-align:right;">72,238</span>
<span style="top:1369.00px;font-size:16.1px;line-height:1;color:#1e1e1e;right:85.22px;text-align:right;">76,931</span>
<div style="left:122.2px;top:1389px;width:2737.8px;height:21px;background:#4ab1e8;"></div>
<span style="top:1393.00px;font-size:16.6px;line-height:1;color:#fff;font-weight:700;letter-spacing:0.093px;left:133.83px;">Total Cash and Cash Equivalents End</span>
<span style="top:1393.00px;font-size:15.8px;line-height:1;color:#fff;font-weight:700;letter-spacing:0.000px;transform:scaleX(1.1650);transform-origin:right center;right:1989.27px;text-align:right;">767,227</span>
<span style="top:1393.00px;font-size:15.8px;line-height:1;color:#fff;font-weight:700;letter-spacing:0.000px;transform:scaleX(1.1650);transform-origin:right center;right:1870.60px;text-align:right;">651,135</span>
<span style="top:1393.00px;font-size:15.8px;line-height:1;color:#fff;font-weight:700;letter-spacing:0.000px;transform:scaleX(1.1650);transform-origin:right center;right:1751.60px;text-align:right;">587,041</span>
<span style="top:1393.00px;font-size:15.8px;line-height:1;color:#fff;font-weight:700;letter-spacing:0.000px;transform:scaleX(1.1650);transform-origin:right center;right:1632.27px;text-align:right;">420,617</span>
<span style="top:1393.00px;font-size:15.8px;line-height:1;color:#fff;font-weight:700;letter-spacing:-0.000px;transform:scaleX(1.1650);transform-origin:right center;right:1513.41px;text-align:right;">255,689</span>
<span style="top:1393.00px;font-size:15.8px;line-height:1;color:#fff;font-weight:700;letter-spacing:0.000px;transform:scaleX(1.1650);transform-origin:right center;right:1394.53px;text-align:right;">59,838</span>
<span style="top:1393.00px;font-size:15.8px;line-height:1;color:#fff;font-weight:700;letter-spacing:0.000px;transform:scaleX(1.1650);transform-origin:right center;right:1268.11px;text-align:right;">(309,217)</span>
<span style="top:1393.00px;font-size:15.8px;line-height:1;color:#fff;font-weight:700;letter-spacing:0.000px;transform:scaleX(1.1650);transform-origin:right center;right:1149.11px;text-align:right;">(618,736)</span>
<span style="top:1393.00px;font-size:15.8px;line-height:1;color:#fff;font-weight:700;letter-spacing:0.000px;transform:scaleX(1.1650);transform-origin:right center;right:1030.11px;text-align:right;">(708,860)</span>
<span style="top:1393.00px;font-size:15.8px;line-height:1;color:#fff;font-weight:700;letter-spacing:0.000px;transform:scaleX(1.1650);transform-origin:right center;right:911.11px;text-align:right;">(777,741)</span>
<span style="top:1393.00px;font-size:15.8px;line-height:1;color:#fff;font-weight:700;letter-spacing:0.000px;transform:scaleX(1.1650);transform-origin:right center;right:792.11px;text-align:right;">(767,843)</span>
<span style="top:1393.00px;font-size:15.8px;line-height:1;color:#fff;font-weight:700;letter-spacing:0.000px;transform:scaleX(1.1650);transform-origin:right center;right:673.11px;text-align:right;">(756,701)</span>
<span style="top:1393.00px;font-size:15.8px;line-height:1;color:#fff;font-weight:700;letter-spacing:0.000px;transform:scaleX(1.1650);transform-origin:right center;right:554.11px;text-align:right;">(733,965)</span>
<span style="top:1393.00px;font-size:15.8px;line-height:1;color:#fff;font-weight:700;letter-spacing:0.000px;transform:scaleX(1.1650);transform-origin:right center;right:435.11px;text-align:right;">(666,927)</span>
<span style="top:1393.00px;font-size:15.8px;line-height:1;color:#fff;font-weight:700;letter-spacing:0.000px;transform:scaleX(1.1650);transform-origin:right center;right:316.11px;text-align:right;">(584,818)</span>
<span style="top:1393.00px;font-size:15.8px;line-height:1;color:#fff;font-weight:700;letter-spacing:0.000px;transform:scaleX(1.1650);transform-origin:right center;right:197.11px;text-align:right;">(512,579)</span>
<span style="top:1393.00px;font-size:15.8px;line-height:1;color:#fff;font-weight:700;letter-spacing:0.000px;transform:scaleX(1.1650);transform-origin:right center;right:78.11px;text-align:right;">(435,648)</span>
<span style="top:1393.00px;font-size:15px;line-height:1;color:rgba(255,255,255,.8);right:2109.35px;text-align:right;">-</span>
<span style="top:1452.00px;font-size:19.6px;line-height:1;color:#1c1c1c;font-weight:700;letter-spacing:0.000px;transform:scaleX(1.0933);transform-origin:left center;left:125.95px;">Interest on Cash Breakdown</span>
<span style="top:1489.00px;font-size:15px;line-height:1;color:#222;letter-spacing:0.031px;transform:scaleX(1.0700);transform-origin:left center;left:138.28px;">Net Cash Flow from Investing Activities</span>
<span style="top:1489.00px;font-size:14.4px;line-height:1;color:#262626;right:1981.82px;text-align:right;">(125,000)</span>
<span style="top:1489.00px;font-size:14.4px;line-height:1;color:#262626;right:1862.82px;text-align:right;">(125,000)</span>
<span style="top:1489.00px;font-size:14.4px;line-height:1;color:#262626;right:1743.82px;text-align:right;">(175,000)</span>
<span style="top:1489.00px;font-size:14.4px;line-height:1;color:#262626;right:1624.82px;text-align:right;">(175,000)</span>
<span style="top:1489.00px;font-size:14.4px;line-height:1;color:#262626;right:1505.82px;text-align:right;">(175,000)</span>
<span style="top:1489.00px;font-size:14.4px;line-height:1;color:#262626;right:1386.82px;text-align:right;">(205,000)</span>
<span style="top:1489.00px;font-size:14.4px;line-height:1;color:#262626;right:1267.82px;text-align:right;">(380,000)</span>
<span style="top:1489.00px;font-size:14.4px;line-height:1;color:#262626;right:1148.82px;text-align:right;">(320,000)</span>
<span style="top:1489.00px;font-size:14.4px;line-height:1;color:#262626;right:1029.82px;text-align:right;">(100,000)</span>
<span style="top:1489.00px;font-size:14.4px;line-height:1;color:#262626;right:910.84px;text-align:right;">(80,000)</span>
<span style="top:1489.00px;font-size:14.4px;line-height:1;color:#262626;right:796.68px;text-align:right;">-</span>
<span style="top:1489.00px;font-size:14.4px;line-height:1;color:#262626;right:677.68px;text-align:right;">-</span>
<span style="top:1489.00px;font-size:14.4px;line-height:1;color:#262626;right:558.68px;text-align:right;">-</span>
<span style="top:1489.00px;font-size:14.4px;line-height:1;color:#262626;right:439.68px;text-align:right;">-</span>
<span style="top:1489.00px;font-size:14.4px;line-height:1;color:#262626;right:320.68px;text-align:right;">-</span>
<span style="top:1489.00px;font-size:14.4px;line-height:1;color:#262626;right:201.68px;text-align:right;">-</span>
<span style="top:1489.00px;font-size:14.4px;line-height:1;color:#262626;right:82.68px;text-align:right;">-</span>
<span style="top:1509.00px;font-size:15px;line-height:1;color:#222;letter-spacing:0.000px;transform:scaleX(1.0621);transform-origin:left center;left:138.29px;">Net Cash Flow from Financing Activities</span>
<span style="top:1509.00px;font-size:14.4px;line-height:1;color:#262626;right:1987.33px;text-align:right;">900,000</span>
<span style="top:1509.00px;font-size:14.4px;line-height:1;color:#262626;right:1867.68px;text-align:right;">-</span>
<span style="top:1509.00px;font-size:14.4px;line-height:1;color:#262626;right:1749.27px;text-align:right;">98,333</span>
<span style="top:1509.00px;font-size:14.4px;line-height:1;color:#262626;right:1624.82px;text-align:right;">(1,667)</span>
<span style="top:1509.00px;font-size:14.4px;line-height:1;color:#262626;right:1505.82px;text-align:right;">(1,667)</span>
<span style="top:1509.00px;font-size:14.4px;line-height:1;color:#262626;right:1386.82px;text-align:right;">(1,667)</span>
<span style="top:1509.00px;font-size:14.4px;line-height:1;color:#262626;right:1267.82px;text-align:right;">(1,667)</span>
<span style="top:1509.00px;font-size:14.4px;line-height:1;color:#262626;right:1148.82px;text-align:right;">(1,667)</span>
<span style="top:1509.00px;font-size:14.4px;line-height:1;color:#262626;right:1029.82px;text-align:right;">(1,667)</span>
<span style="top:1509.00px;font-size:14.4px;line-height:1;color:#262626;right:910.82px;text-align:right;">(1,667)</span>
<span style="top:1509.00px;font-size:14.4px;line-height:1;color:#262626;right:791.82px;text-align:right;">(1,667)</span>
<span style="top:1509.00px;font-size:14.4px;line-height:1;color:#262626;right:672.82px;text-align:right;">(1,667)</span>
<span style="top:1509.00px;font-size:14.4px;line-height:1;color:#262626;right:553.82px;text-align:right;">(3,770)</span>
<span style="top:1509.00px;font-size:14.4px;line-height:1;color:#262626;right:434.82px;text-align:right;">(3,780)</span>
<span style="top:1509.00px;font-size:14.4px;line-height:1;color:#262626;right:315.82px;text-align:right;">(3,791)</span>
<span style="top:1509.00px;font-size:14.4px;line-height:1;color:#262626;right:196.82px;text-align:right;">(3,801)</span>
<span style="top:1509.00px;font-size:14.4px;line-height:1;color:#262626;right:77.82px;text-align:right;">(3,812)</span>
<span style="top:1529.00px;font-size:15px;line-height:1;color:#222;letter-spacing:-0.039px;left:138.85px;">Cash Receipts</span>
<span style="top:1529.00px;font-size:14.4px;line-height:1;color:#262626;right:1987.20px;text-align:right;">111,252</span>
<span style="top:1529.00px;font-size:14.4px;line-height:1;color:#262626;right:1868.29px;text-align:right;">204,375</span>
<span style="top:1529.00px;font-size:14.4px;line-height:1;color:#262626;right:1749.29px;text-align:right;">226,725</span>
<span style="top:1529.00px;font-size:14.4px;line-height:1;color:#262626;right:1630.25px;text-align:right;">212,073</span>
<span style="top:1529.00px;font-size:14.4px;line-height:1;color:#262626;right:1511.18px;text-align:right;">219,027</span>
<span style="top:1529.00px;font-size:14.4px;line-height:1;color:#262626;right:1392.25px;text-align:right;">212,073</span>
<span style="top:1529.00px;font-size:14.4px;line-height:1;color:#262626;right:1273.18px;text-align:right;">219,027</span>
<span style="top:1529.00px;font-size:14.4px;line-height:1;color:#262626;right:1154.33px;text-align:right;">215,550</span>
<span style="top:1529.00px;font-size:14.4px;line-height:1;color:#262626;right:1035.25px;text-align:right;">212,073</span>
<span style="top:1529.00px;font-size:14.4px;line-height:1;color:#262626;right:916.18px;text-align:right;">219,027</span>
<span style="top:1529.00px;font-size:14.4px;line-height:1;color:#262626;right:797.25px;text-align:right;">212,073</span>
<span style="top:1529.00px;font-size:14.4px;line-height:1;color:#262626;right:678.18px;text-align:right;">219,027</span>
<span style="top:1529.00px;font-size:14.4px;line-height:1;color:#262626;right:559.47px;text-align:right;">314,204</span>
<span style="top:1529.00px;font-size:14.4px;line-height:1;color:#262626;right:440.18px;text-align:right;">385,607</span>
<span style="top:1529.00px;font-size:14.4px;line-height:1;color:#262626;right:321.29px;text-align:right;">427,775</span>
<span style="top:1529.00px;font-size:14.4px;line-height:1;color:#262626;right:202.18px;text-align:right;">400,132</span>
<span style="top:1529.00px;font-size:14.4px;line-height:1;color:#262626;right:83.18px;text-align:right;">413,251</span>
<span style="top:1549.00px;font-size:15px;line-height:1;color:#222;letter-spacing:0.106px;left:138.85px;">Cash Payments</span>
<span style="top:1549.00px;font-size:14.4px;line-height:1;color:#262626;right:1981.81px;text-align:right;">(115,971)</span>
<span style="top:1549.00px;font-size:14.4px;line-height:1;color:#262626;right:1862.82px;text-align:right;">(192,596)</span>
<span style="top:1549.00px;font-size:14.4px;line-height:1;color:#262626;right:1743.82px;text-align:right;">(210,986)</span>
<span style="top:1549.00px;font-size:14.4px;line-height:1;color:#262626;right:1624.82px;text-align:right;">(198,931)</span>
<span style="top:1549.00px;font-size:14.4px;line-height:1;color:#262626;right:1505.82px;text-align:right;">(204,652)</span>
<span style="top:1549.00px;font-size:14.4px;line-height:1;color:#262626;right:1386.82px;text-align:right;">(198,931)</span>
<span style="top:1549.00px;font-size:14.4px;line-height:1;color:#262626;right:1267.82px;text-align:right;">(204,652)</span>
<span style="top:1549.00px;font-size:14.4px;line-height:1;color:#262626;right:1148.82px;text-align:right;">(201,791)</span>
<span style="top:1549.00px;font-size:14.4px;line-height:1;color:#262626;right:1029.82px;text-align:right;">(198,931)</span>
<span style="top:1549.00px;font-size:14.4px;line-height:1;color:#262626;right:910.82px;text-align:right;">(204,652)</span>
<span style="top:1549.00px;font-size:14.4px;line-height:1;color:#262626;right:791.82px;text-align:right;">(198,931)</span>
<span style="top:1549.00px;font-size:14.4px;line-height:1;color:#262626;right:672.82px;text-align:right;">(204,652)</span>
<span style="top:1549.00px;font-size:14.4px;line-height:1;color:#262626;right:553.82px;text-align:right;">(265,197)</span>
<span style="top:1549.00px;font-size:14.4px;line-height:1;color:#262626;right:434.82px;text-align:right;">(292,305)</span>
<span style="top:1549.00px;font-size:14.4px;line-height:1;color:#262626;right:315.82px;text-align:right;">(319,408)</span>
<span style="top:1549.00px;font-size:14.4px;line-height:1;color:#262626;right:196.82px;text-align:right;">(301,640)</span>
<span style="top:1549.00px;font-size:14.4px;line-height:1;color:#262626;right:77.82px;text-align:right;">(310,072)</span>
<span style="top:1569.00px;font-size:15px;line-height:1;color:#222;letter-spacing:-0.000px;transform:scaleX(1.0608);transform-origin:left center;left:138.80px;">Change in Cash (Pre-Corporate Tax &amp; Interest on Cash)</span>
<span style="top:1569.00px;font-size:14.4px;line-height:1;color:#262626;right:1987.18px;text-align:right;">770,281</span>
<span style="top:1569.00px;font-size:14.4px;line-height:1;color:#262626;right:1862.81px;text-align:right;">(113,221)</span>
<span style="top:1569.00px;font-size:14.4px;line-height:1;color:#262626;right:1743.84px;text-align:right;">(60,928)</span>
<span style="top:1569.00px;font-size:14.4px;line-height:1;color:#262626;right:1624.82px;text-align:right;">(163,524)</span>
<span style="top:1569.00px;font-size:14.4px;line-height:1;color:#262626;right:1505.82px;text-align:right;">(162,292)</span>
<span style="top:1569.00px;font-size:14.4px;line-height:1;color:#262626;right:1386.82px;text-align:right;">(193,524)</span>
<span style="top:1569.00px;font-size:14.4px;line-height:1;color:#262626;right:1267.82px;text-align:right;">(367,292)</span>
<span style="top:1569.00px;font-size:14.4px;line-height:1;color:#262626;right:1148.82px;text-align:right;">(307,908)</span>
<span style="top:1569.00px;font-size:14.4px;line-height:1;color:#262626;right:1029.84px;text-align:right;">(88,524)</span>
<span style="top:1569.00px;font-size:14.4px;line-height:1;color:#262626;right:910.84px;text-align:right;">(67,292)</span>
<span style="top:1569.00px;font-size:14.4px;line-height:1;color:#262626;right:797.26px;text-align:right;">11,476</span>
<span style="top:1569.00px;font-size:14.4px;line-height:1;color:#262626;right:678.27px;text-align:right;">12,708</span>
<span style="top:1569.00px;font-size:14.4px;line-height:1;color:#262626;right:559.20px;text-align:right;">45,237</span>
<span style="top:1569.00px;font-size:14.4px;line-height:1;color:#262626;right:440.20px;text-align:right;">89,522</span>
<span style="top:1569.00px;font-size:14.4px;line-height:1;color:#262626;right:321.18px;text-align:right;">104,577</span>
<span style="top:1569.00px;font-size:14.4px;line-height:1;color:#262626;right:202.34px;text-align:right;">94,690</span>
<span style="top:1569.00px;font-size:14.4px;line-height:1;color:#262626;right:83.27px;text-align:right;">99,366</span>
<span style="top:1589.00px;font-size:15px;line-height:1;color:#222;letter-spacing:0.000px;transform:scaleX(1.0506);transform-origin:left center;left:138.14px;">Interest Expense</span>
<span style="top:1589.00px;font-size:14.4px;line-height:1;color:#262626;right:1981.82px;text-align:right;">(1,000)</span>
<span style="top:1589.00px;font-size:14.4px;line-height:1;color:#262626;right:1862.82px;text-align:right;">(1,000)</span>
<span style="top:1589.00px;font-size:14.4px;line-height:1;color:#262626;right:1743.82px;text-align:right;">(1,667)</span>
<span style="top:1589.00px;font-size:14.4px;line-height:1;color:#262626;right:1624.82px;text-align:right;">(1,656)</span>
<span style="top:1589.00px;font-size:14.4px;line-height:1;color:#262626;right:1505.82px;text-align:right;">(1,644)</span>
<span style="top:1589.00px;font-size:14.4px;line-height:1;color:#262626;right:1386.82px;text-align:right;">(1,633)</span>
<span style="top:1589.00px;font-size:14.4px;line-height:1;color:#262626;right:1267.82px;text-align:right;">(1,622)</span>
<span style="top:1589.00px;font-size:14.4px;line-height:1;color:#262626;right:1148.85px;text-align:right;">(1,611)</span>
<span style="top:1589.00px;font-size:14.4px;line-height:1;color:#262626;right:1029.82px;text-align:right;">(1,600)</span>
<span style="top:1589.00px;font-size:14.4px;line-height:1;color:#262626;right:910.82px;text-align:right;">(1,589)</span>
<span style="top:1589.00px;font-size:14.4px;line-height:1;color:#262626;right:791.82px;text-align:right;">(1,578)</span>
<span style="top:1589.00px;font-size:14.4px;line-height:1;color:#262626;right:672.82px;text-align:right;">(1,567)</span>
<span style="top:1589.00px;font-size:14.4px;line-height:1;color:#262626;right:553.82px;text-align:right;">(1,556)</span>
<span style="top:1589.00px;font-size:14.4px;line-height:1;color:#262626;right:434.82px;text-align:right;">(1,534)</span>
<span style="top:1589.00px;font-size:14.4px;line-height:1;color:#262626;right:315.82px;text-align:right;">(1,512)</span>
<span style="top:1589.00px;font-size:14.4px;line-height:1;color:#262626;right:196.82px;text-align:right;">(1,491)</span>
<span style="top:1589.00px;font-size:14.4px;line-height:1;color:#262626;right:77.82px;text-align:right;">(1,469)</span>
<span style="top:1609.00px;font-size:15px;line-height:1;color:#222;letter-spacing:0.000px;transform:scaleX(1.0522);transform-origin:left center;left:138.81px;">Corporate Tax Expense</span>
<span style="top:1609.00px;font-size:14.4px;line-height:1;color:#262626;right:1981.82px;text-align:right;">(2,054)</span>
<span style="top:1609.00px;font-size:14.4px;line-height:1;color:#262626;right:1862.82px;text-align:right;">(1,871)</span>
<span style="top:1609.00px;font-size:14.4px;line-height:1;color:#262626;right:1743.82px;text-align:right;">(1,499)</span>
<span style="top:1609.00px;font-size:14.4px;line-height:1;color:#262626;right:1624.82px;text-align:right;">(1,245)</span>
<span style="top:1609.00px;font-size:14.4px;line-height:1;color:#262626;right:1505.84px;text-align:right;">(991)</span>
<span style="top:1609.00px;font-size:14.4px;line-height:1;color:#262626;right:1386.84px;text-align:right;">(694)</span>
<span style="top:1609.00px;font-size:14.4px;line-height:1;color:#262626;right:1267.84px;text-align:right;">(141)</span>
<span style="top:1609.00px;font-size:14.4px;line-height:1;color:#262626;right:1153.68px;text-align:right;">-</span>
<span style="top:1609.00px;font-size:14.4px;line-height:1;color:#262626;right:1034.68px;text-align:right;">-</span>
<span style="top:1609.00px;font-size:14.4px;line-height:1;color:#262626;right:915.68px;text-align:right;">-</span>
<span style="top:1609.00px;font-size:14.4px;line-height:1;color:#262626;right:796.68px;text-align:right;">-</span>
<span style="top:1609.00px;font-size:14.4px;line-height:1;color:#262626;right:677.68px;text-align:right;">-</span>
<span style="top:1609.00px;font-size:14.4px;line-height:1;color:#262626;right:553.84px;text-align:right;">(20,945)</span>
<span style="top:1609.00px;font-size:14.4px;line-height:1;color:#262626;right:434.84px;text-align:right;">(20,950)</span>
<span style="top:1609.00px;font-size:14.4px;line-height:1;color:#262626;right:315.84px;text-align:right;">(20,956)</span>
<span style="top:1609.00px;font-size:14.4px;line-height:1;color:#262626;right:196.84px;text-align:right;">(20,961)</span>
<span style="top:1609.00px;font-size:14.4px;line-height:1;color:#262626;right:77.84px;text-align:right;">(20,967)</span>
<div style="left:135px;top:1625px;width:2725px;height:20.5px;background:#4ab1e8;"></div>
<span style="top:1628.00px;font-size:16.6px;line-height:1;color:#fff;font-weight:700;letter-spacing:0.000px;transform:scaleX(1.0542);transform-origin:left center;left:145.32px;">Net Increase/(Decrease) in Cash Held</span>
<span style="top:1628.00px;font-size:15.8px;line-height:1;color:#fff;font-weight:700;letter-spacing:0.000px;transform:scaleX(1.1650);transform-origin:right center;right:1989.27px;text-align:right;">767,227</span>
<span style="top:1628.00px;font-size:15.8px;line-height:1;color:#fff;font-weight:700;letter-spacing:0.000px;transform:scaleX(1.1650);transform-origin:right center;right:1863.11px;text-align:right;">(116,092)</span>
<span style="top:1628.00px;font-size:15.8px;line-height:1;color:#fff;font-weight:700;letter-spacing:0.000px;transform:scaleX(1.1650);transform-origin:right center;right:1744.13px;text-align:right;">(64,094)</span>
<span style="top:1628.00px;font-size:15.8px;line-height:1;color:#fff;font-weight:700;letter-spacing:0.000px;transform:scaleX(1.1650);transform-origin:right center;right:1625.11px;text-align:right;">(166,424)</span>
<span style="top:1628.00px;font-size:15.8px;line-height:1;color:#fff;font-weight:700;letter-spacing:0.000px;transform:scaleX(1.1650);transform-origin:right center;right:1506.11px;text-align:right;">(164,928)</span>
<span style="top:1628.00px;font-size:15.8px;line-height:1;color:#fff;font-weight:700;letter-spacing:0.000px;transform:scaleX(1.1650);transform-origin:right center;right:1387.11px;text-align:right;">(195,851)</span>
<span style="top:1628.00px;font-size:15.8px;line-height:1;color:#fff;font-weight:700;letter-spacing:0.000px;transform:scaleX(1.1650);transform-origin:right center;right:1268.11px;text-align:right;">(369,055)</span>
<span style="top:1628.00px;font-size:15.8px;line-height:1;color:#fff;font-weight:700;letter-spacing:0.000px;transform:scaleX(1.1650);transform-origin:right center;right:1149.11px;text-align:right;">(309,519)</span>
<span style="top:1628.00px;font-size:15.8px;line-height:1;color:#fff;font-weight:700;letter-spacing:0.000px;transform:scaleX(1.1650);transform-origin:right center;right:1030.13px;text-align:right;">(90,124)</span>
<span style="top:1628.00px;font-size:15.8px;line-height:1;color:#fff;font-weight:700;letter-spacing:0.000px;transform:scaleX(1.1650);transform-origin:right center;right:911.13px;text-align:right;">(68,881)</span>
<span style="top:1628.00px;font-size:15.8px;line-height:1;color:#fff;font-weight:700;letter-spacing:0.000px;transform:scaleX(1.1650);transform-origin:right center;right:799.55px;text-align:right;">9,898</span>
<span style="top:1628.00px;font-size:15.8px;line-height:1;color:#fff;font-weight:700;letter-spacing:0.000px;transform:scaleX(1.1650);transform-origin:right center;right:680.62px;text-align:right;">11,141</span>
<span style="top:1628.00px;font-size:15.8px;line-height:1;color:#fff;font-weight:700;letter-spacing:0.000px;transform:scaleX(1.1650);transform-origin:right center;right:561.30px;text-align:right;">22,737</span>
<span style="top:1628.00px;font-size:15.8px;line-height:1;color:#fff;font-weight:700;letter-spacing:0.000px;transform:scaleX(1.1650);transform-origin:right center;right:442.53px;text-align:right;">67,038</span>
<span style="top:1628.00px;font-size:15.8px;line-height:1;color:#fff;font-weight:700;letter-spacing:0.000px;transform:scaleX(1.1650);transform-origin:right center;right:323.43px;text-align:right;">82,109</span>
<span style="top:1628.00px;font-size:15.8px;line-height:1;color:#fff;font-weight:700;letter-spacing:0.000px;transform:scaleX(1.1650);transform-origin:right center;right:204.53px;text-align:right;">72,238</span>
<span style="top:1628.00px;font-size:15.8px;line-height:1;color:#fff;font-weight:700;letter-spacing:0.000px;transform:scaleX(1.1650);transform-origin:right center;right:85.62px;text-align:right;">76,931</span>
<div style="left:803px;top:297px;width:1px;height:1373px;background:#9b9b9b;"></div>
<div style="left:11px;top:456px;width:2849px;height:1px;background:#a8a8a8;"></div>
<div style="left:13.5px;top:548px;width:18px;height:17.5px;background:#e6e6e6;border:1px solid #a0a0a0;box-sizing:border-box;"></div>
<div style="left:18px;top:556px;width:9px;height:1.6px;background:#444;"></div>
<div style="left:21.7px;top:552.3px;width:1.6px;height:9px;background:#444;"></div>
<div style="left:13.5px;top:568px;width:18px;height:17.5px;background:#e6e6e6;border:1px solid #a0a0a0;box-sizing:border-box;"></div>
<div style="left:18px;top:576px;width:9px;height:1.6px;background:#444;"></div>
<div style="left:21.7px;top:572.3px;width:1.6px;height:9px;background:#444;"></div>
<svg style="left:35px;top:34px;" width="24" height="26" viewBox="0 0 24 26" fill="none">
<defs><linearGradient id="xg" x1="0" y1="0" x2="1" y2="1"><stop offset="0" stop-color="#1c7431"/><stop offset="1" stop-color="#2f7a36"/></linearGradient>
<clipPath id="xc"><rect x="2.6" y="0.8" width="20.2" height="24.2" rx="2.7"/></clipPath></defs>
<g clip-path="url(#xc)"><rect x="2.6" y="0.8" width="20.2" height="24.2" fill="url(#xg)"/>
<rect x="2.6" y="0.8" width="9.6" height="8.7" fill="#6dd35d"/><rect x="12.2" y="0.8" width="10.6" height="8.7" fill="#b5e872"/>
<rect x="12.2" y="9.5" width="10.6" height="1.2" fill="#2a8a3c" opacity=".6"/></g>
<rect x="0.1" y="8.6" width="12.5" height="13.4" rx="2.5" fill="#0f693b"/>
<path d="M3.5 11.4 L9.9 18.9 M9.9 11.4 L3.5 18.9" stroke="#fff" stroke-width="2.2"/></svg>
<span style="top:40.00px;font-size:17.8px;line-height:1;color:#ffffff;letter-spacing:-0.207px;left:95.24px;">dental-practice.xlsx</span>
<span style="top:40.00px;font-size:17.8px;line-height:1;color:#ffffff;left:254.70px;">-</span>
<span style="top:40.00px;font-size:17.8px;line-height:1;color:#ffffff;letter-spacing:-0.321px;left:270.53px;">Read-Only</span>
<svg style="left:360.25px;top:42.55px;" width="16.5" height="10.5" viewBox="0 0 16.5 10.5" fill="none"><path d="M2 2 L8.25 8.5 L14.5 2" stroke="#fff" stroke-width="1.9" stroke-linecap="round" stroke-linejoin="round"/></svg>
<svg style="left:2472px;top:32px;" width="30" height="30" viewBox="0 0 30 30" fill="none"><circle cx="16.4" cy="11.75" r="6.9" stroke="#fff" stroke-width="1.9"/><path d="M11.6 16.8 L4.4 25.2" stroke="#fff" stroke-width="1.9" stroke-linecap="round"/></svg>
<div style="left:2552.9px;top:29px;width:36px;height:36px;border-radius:50%;overflow:hidden;background:linear-gradient(180deg,#c9cbe8 0%,#b2bee0 27%,#a9c9d9 34%,#a7d3d2 60%,#b4d0cb 100%);"><div style="left:4px;top:26.5px;width:15px;height:16px;background:#d9d1c9;transform:rotate(28deg);"></div><div style="left:19px;top:26.5px;width:15px;height:16px;background:#cfc6bd;transform:rotate(-28deg);"></div><div style="left:13.5px;top:24px;width:11px;height:14px;background:linear-gradient(180deg,#7a5f50,#b08a78);"></div><div style="left:11px;top:6.8px;width:15.4px;height:21px;border-radius:50% 50% 46% 46%;background:radial-gradient(ellipse at 45% 45%,#b8917c 0%,#a07c69 50%,#7c6253 100%);"></div><div style="left:12.6px;top:15px;width:12px;height:2px;background:rgba(60,40,30,.35);filter:blur(.8px);"></div></div>
<svg style="left:2628px;top:33.5px;" width="26" height="25" viewBox="0 0 26 25" fill="none"><path d="M6.2 1.8 H19.8 L24.6 8.3 L13 22.8 L1.4 8.3 Z M1.4 8.3 H24.6 M9.2 8.3 L13 22.8 L16.8 8.3 M6.2 1.8 L9.2 8.3 L13 1.8 L16.8 8.3 L19.8 1.8" stroke="#fff" stroke-width="1.7" stroke-linejoin="round"/></svg>
<div style="left:2703.4px;top:44.5px;width:15.4px;height:2.1px;background:#fff;"></div>
<svg style="left:2773px;top:37px;" width="20" height="20" viewBox="0 0 20 20" fill="none"><rect x="3.2" y="5.8" width="10.6" height="10.6" rx="2.4" stroke="#fff" stroke-width="1.8"/><path d="M6.6 3 H13.4 A3.6 3.6 0 0 1 17 6.6 V13.4" stroke="#fff" stroke-width="1.8" stroke-linecap="round"/></svg>
<svg style="left:2845px;top:37px;" width="20" height="20" viewBox="0 0 20 20" fill="none"><path d="M2.6 2.6 L17.6 17.6 M17.6 2.6 L2.6 17.6" stroke="#fff" stroke-width="1.9" stroke-linecap="round"/></svg>
<span style="top:98.00px;font-size:19.3px;line-height:1;color:#ffffff;letter-spacing:0.000px;transform:scaleX(1.0293);transform-origin:left center;left:41.06px;">File</span>
<span style="top:98.00px;font-size:19.3px;line-height:1;color:#ffffff;font-weight:700;letter-spacing:-0.000px;transform:scaleX(1.0547);transform-origin:left center;left:110.53px;">Home</span>
<span style="top:98.00px;font-size:19.3px;line-height:1;color:#ffffff;letter-spacing:0.016px;left:196.81px;">Insert</span>
<span style="top:98.00px;font-size:19.3px;line-height:1;color:#ffffff;letter-spacing:0.160px;left:276.21px;">Draw</span>
<span style="top:98.00px;font-size:19.3px;line-height:1;color:#ffffff;letter-spacing:-0.173px;left:352.11px;">Page Layout</span>
<span style="top:98.00px;font-size:19.3px;line-height:1;color:#ffffff;letter-spacing:0.162px;left:490.01px;">Formulas</span>
<span style="top:98.00px;font-size:19.3px;line-height:1;color:#ffffff;letter-spacing:0.140px;left:599.21px;">Data</span>
<span style="top:98.00px;font-size:19.3px;line-height:1;color:#ffffff;letter-spacing:-0.572px;left:670.21px;">Review</span>
<span style="top:98.00px;font-size:19.3px;line-height:1;color:#ffffff;letter-spacing:-0.282px;left:762.30px;">View</span>
<span style="top:98.00px;font-size:19.3px;line-height:1;color:#ffffff;letter-spacing:0.000px;transform:scaleX(1.0534);transform-origin:left center;left:834.35px;">Automate</span>
<span style="top:98.00px;font-size:19.3px;line-height:1;color:#ffffff;letter-spacing:0.000px;transform:scaleX(1.0591);transform-origin:left center;left:949.91px;">Help</span>
<div style="left:111.2px;top:119.9px;width:57.6px;height:3.2px;background:#5fba8c;border-radius:1.6px;"></div>
<div style="left:2621.5px;top:87.3px;width:134.5px;height:35.6px;background:#242424;border:1px solid #6a6a6a;border-radius:6px;box-sizing:border-box;"></div>
<svg style="left:2628px;top:96px;" width="18" height="18" viewBox="0 0 18 18" fill="none"><path d="M1.9 2.1 H15.9 V11.6 H7.4 L3.6 15.3 V11.6 H1.9 Z" stroke="#fff" stroke-width="1.7" stroke-linejoin="round"/></svg>
<span style="top:97.00px;font-size:19.1px;line-height:1;color:#ffffff;letter-spacing:0.000px;transform:scaleX(1.0317);transform-origin:left center;left:2651.41px;">Comments</span>
<div style="left:2768.1px;top:87.3px;width:105px;height:35.6px;background:#3aa966;border-radius:7px;"></div>
<svg style="left:2773.5px;top:95.5px;" width="19" height="19" viewBox="0 0 19 19" fill="none"><path d="M7.2 5.2 H3.2 A1.3 1.3 0 0 0 1.9 6.5 V16 A1.3 1.3 0 0 0 3.2 17.3 H13.8 A1.3 1.3 0 0 0 15.1 16 V13.2" stroke="#0d2d19" stroke-width="1.6" stroke-linecap="round"/><path d="M11.2 1.9 L17.2 7 L11.2 12.1 V9.2 C8.2 9.1 6.4 10.3 5.3 12.6 C5.5 8.2 7.8 5.4 11.2 5 Z" stroke="#0d2d19" stroke-width="1.6" stroke-linejoin="round"/></svg>
<span style="top:97.00px;font-size:19.1px;line-height:1;color:#0c2a18;letter-spacing:-0.370px;left:2799.14px;">Share</span>
<svg style="left:2856.05px;top:101.3px;" width="12.5" height="8.4" viewBox="0 0 12.5 8.4" fill="none"><path d="M2 2 L6.25 6.4 L10.5 2" stroke="#0c2a18" stroke-width="1.7" stroke-linecap="round" stroke-linejoin="round"/></svg>
<div style="left:23px;top:128px;width:2856px;height:150px;background:#292929;border-radius:10px;"></div>
<div style="left:281.8px;top:135.5px;width:1px;height:133px;background:#555555;"></div>
<div style="left:633px;top:135.5px;width:1px;height:133px;background:#555555;"></div>
<div style="left:1082.7px;top:135.5px;width:1px;height:133px;background:#555555;"></div>
<div style="left:1325px;top:135.5px;width:1px;height:133px;background:#555555;"></div>
<div style="left:1544px;top:135.5px;width:1px;height:133px;background:#555555;"></div>
<div style="left:1868px;top:135.5px;width:1px;height:133px;background:#555555;"></div>
<div style="left:1962.7px;top:135.5px;width:1px;height:133px;background:#555555;"></div>
<div style="left:2055.9px;top:135.5px;width:1px;height:133px;background:#555555;"></div>
<span style="top:196.00px;font-size:17.4px;line-height:1;color:#ffffff;letter-spacing:-0.445px;left:50.06px;">Paste</span>
<svg style="left:65.6px;top:222.8px;" width="10.8" height="7.4" viewBox="0 0 10.8 7.4" fill="none"><path d="M2 2 L5.4 5.4 L8.8 2" stroke="#f0f0f0" stroke-width="2" stroke-linecap="round" stroke-linejoin="round"/></svg>
<span style="top:145.00px;font-size:17.4px;line-height:1;color:#ffffff;letter-spacing:-0.000px;transform:scaleX(1.0285);transform-origin:left center;left:141.11px;">Cut</span>
<span style="top:184.00px;font-size:17.4px;line-height:1;color:#ffffff;letter-spacing:0.000px;transform:scaleX(1.0424);transform-origin:left center;left:141.09px;">Copy</span>
<svg style="left:209.6px;top:187.3px;" width="10.8" height="7.4" viewBox="0 0 10.8 7.4" fill="none"><path d="M2 2 L5.4 5.4 L8.8 2" stroke="#f0f0f0" stroke-width="2" stroke-linecap="round" stroke-linejoin="round"/></svg>
<span style="top:223.00px;font-size:17.4px;line-height:1;color:#ffffff;letter-spacing:0.080px;left:141.46px;">Format Painter</span>
<span style="top:255.00px;font-size:15.2px;line-height:1;color:#f0f0f0;letter-spacing:0.049px;transform:scaleX(1.0700);transform-origin:left center;left:107.99px;">Clipboard</span>
<svg style="left:265px;top:257px;" width="13" height="13" viewBox="0 0 13 13" fill="none"><path d="M1 6.4 V1 H6.4" stroke="#ececec" stroke-width="1.9"/><path d="M4.2 4.2 L11 11 M11.6 5.2 V11.6 H5.2" stroke="#ececec" stroke-width="1.9"/></svg>
<div style="left:295.3px;top:146.2px;width:180.2px;height:35.3px;background:#262626;border:1px solid #686868;border-radius:6px;box-sizing:border-box;"></div>
<div style="left:479.4px;top:146.2px;width:64.3px;height:35.3px;background:#262626;border:1px solid #686868;border-radius:6px;box-sizing:border-box;"></div>
<span style="top:157.00px;font-size:17.9px;line-height:1;color:#ffffff;letter-spacing:-0.164px;left:298.60px;">Tahoma</span>
<span style="top:157.00px;font-size:17.9px;line-height:1;color:#ffffff;left:481.84px;">8</span>
<svg style="left:461.7px;top:160.9px;" width="10.8" height="7.4" viewBox="0 0 10.8 7.4" fill="none"><path d="M2 2 L5.4 5.4 L8.8 2" stroke="#f0f0f0" stroke-width="2" stroke-linecap="round" stroke-linejoin="round"/></svg>
<svg style="left:529.8px;top:160.9px;" width="10.8" height="7.4" viewBox="0 0 10.8 7.4" fill="none"><path d="M2 2 L5.4 5.4 L8.8 2" stroke="#f0f0f0" stroke-width="2" stroke-linecap="round" stroke-linejoin="round"/></svg>
<span style="top:149.00px;font-size:26.4px;line-height:1;color:#d6d6d6;left:553.93px;">A</span>
<svg style="left:568.5px;top:152px;" width="10" height="8" viewBox="0 0 10 8" fill="none"><path d="M1.4 6.2 L5 2 L8.6 6.2" stroke="#3a96dd" stroke-width="1.9" stroke-linecap="round" stroke-linejoin="round"/></svg>
<span style="top:155.00px;font-size:19.6px;line-height:1;color:#d6d6d6;left:595.65px;">A</span>
<svg style="left:607.3px;top:152px;" width="10" height="8" viewBox="0 0 10 8" fill="none"><path d="M1.4 2 L5 6.2 L8.6 2" stroke="#3a96dd" stroke-width="1.9" stroke-linecap="round" stroke-linejoin="round"/></svg>
<span style="top:201.00px;font-size:19.7px;line-height:1;color:#d6d6d6;font-weight:700;left:305.97px;">B</span>
<span style="top:200.00px;font-size:20px;line-height:1;color:#d6d6d6;font-style:italic;font-family:'Liberation Serif',serif;left:347.70px;">I</span>
<span style="top:202.00px;font-size:18.5px;line-height:1;color:#d6d6d6;left:382.47px;">U</span>
<div style="left:383.5px;top:218.8px;width:13.6px;height:1.9px;background:#d6d6d6;"></div>
<svg style="left:413.9px;top:208.6px;" width="10.8" height="7.4" viewBox="0 0 10.8 7.4" fill="none"><path d="M2 2 L5.4 5.4 L8.8 2" stroke="#f0f0f0" stroke-width="2" stroke-linecap="round" stroke-linejoin="round"/></svg>
<div style="left:434.1px;top:194px;width:1px;height:36.2px;background:#555555;"></div>
<svg style="left:443px;top:199px;" width="26" height="26" viewBox="0 0 26 26" fill="none"><g stroke="#d6d6d6" stroke-width="1.7" stroke-dasharray="1.7 2.1"><path d="M1.9 1.9 H23.5 M1.9 1.9 V21 M23.5 1.9 V21 M12.7 1.9 V21 M1.9 11.4 H23.5"/></g><path d="M1 22.9 H24.4" stroke="#d6d6d6" stroke-width="2"/></svg>
<svg style="left:478.8px;top:208.6px;" width="10.8" height="7.4" viewBox="0 0 10.8 7.4" fill="none"><path d="M2 2 L5.4 5.4 L8.8 2" stroke="#f0f0f0" stroke-width="2" stroke-linecap="round" stroke-linejoin="round"/></svg>
<div style="left:499px;top:194px;width:1px;height:36.2px;background:#555555;"></div>
<svg style="left:509px;top:198px;" width="26" height="22" viewBox="0 0 26 22" fill="none"><path d="M12.4 3.4 L21 12 L12.6 19.2 L4.6 11.2 Z" stroke="#d6d6d6" stroke-width="1.7" stroke-linejoin="round"/><path d="M12.4 9 V2.8 A1.9 1.9 0 0 1 16.2 2.8 V7" stroke="#d6d6d6" stroke-width="1.6"/><path d="M20.4 9.4 C22.6 10.4 23.6 12.6 23.2 15.6" stroke="#5aa6e6" stroke-width="2.2" stroke-linecap="round"/></svg>
<div style="left:508.9px;top:218.1px;width:24.2px;height:6px;background:#ffff00;"></div>
<svg style="left:543.6px;top:208.6px;" width="10.8" height="7.4" viewBox="0 0 10.8 7.4" fill="none"><path d="M2 2 L5.4 5.4 L8.8 2" stroke="#f0f0f0" stroke-width="2" stroke-linecap="round" stroke-linejoin="round"/></svg>
<span style="top:199.00px;font-size:22.6px;line-height:1;color:#d6d6d6;left:574.14px;">A</span>
<div style="left:569.8px;top:218.1px;width:24.3px;height:6px;background:#ff0000;"></div>
<svg style="left:604.9px;top:208.6px;" width="10.8" height="7.4" viewBox="0 0 10.8 7.4" fill="none"><path d="M2 2 L5.4 5.4 L8.8 2" stroke="#f0f0f0" stroke-width="2" stroke-linecap="round" stroke-linejoin="round"/></svg>
<span style="top:255.00px;font-size:15.2px;line-height:1;color:#f0f0f0;letter-spacing:0.000px;transform:scaleX(1.0575);transform-origin:left center;left:428.97px;">Font</span>
<svg style="left:615.5px;top:257px;" width="13" height="13" viewBox="0 0 13 13" fill="none"><path d="M1 6.4 V1 H6.4" stroke="#ececec" stroke-width="1.9"/><path d="M4.2 4.2 L11 11 M11.6 5.2 V11.6 H5.2" stroke="#ececec" stroke-width="1.9"/></svg>
<div style="left:652.8px;top:151.85px;width:22px;height:1.9px;background:#d6d6d6;"></div>
<div style="left:656px;top:157.95px;width:15.6px;height:1.9px;background:#d6d6d6;"></div>
<div style="left:652.8px;top:163.95px;width:22px;height:1.9px;background:#d6d6d6;"></div>
<div style="left:685.4px;top:146.4px;width:35.5px;height:34.9px;background:#3a3a3a;border:1px solid #8c8c8c;border-radius:6px;box-sizing:border-box;"></div>
<div style="left:692.2px;top:156.45px;width:21.4px;height:1.9px;background:#d6d6d6;"></div>
<div style="left:695.4px;top:162.65px;width:15px;height:1.9px;background:#d6d6d6;"></div>
<div style="left:692.2px;top:168.65px;width:21.4px;height:1.9px;background:#d6d6d6;"></div>
<div style="left:731px;top:162.25px;width:22px;height:1.9px;background:#d6d6d6;"></div>
<div style="left:734.2px;top:168.25px;width:15.6px;height:1.9px;background:#d6d6d6;"></div>
<div style="left:731px;top:174.25px;width:22px;height:1.9px;background:#d6d6d6;"></div>
<div style="left:762.8px;top:146.4px;width:1px;height:35.5px;background:#555555;"></div>
<svg style="left:771px;top:148px;" width="30" height="30" viewBox="0 0 30 30" fill="none"><g transform="translate(6.2 21.4) rotate(-46)"><text x="0" y="0" font-family="Liberation Sans" font-size="15.4" fill="#d6d6d6" textLength="16.4" lengthAdjust="spacingAndGlyphs">ab</text></g><path d="M10 25.8 L26 10.4 M20.6 10.2 H26.2 V15.8" stroke="#3a96dd" stroke-width="1.9" stroke-linecap="round" stroke-linejoin="round"/></svg>
<svg style="left:804.7px;top:160.8px;" width="10.8" height="7.4" viewBox="0 0 10.8 7.4" fill="none"><path d="M2 2 L5.4 5.4 L8.8 2" stroke="#f0f0f0" stroke-width="2" stroke-linecap="round" stroke-linejoin="round"/></svg>
<div style="left:850.9px;top:144px;width:1px;height:94px;background:#555555;"></div>
<svg style="left:869px;top:150px;" width="26" height="28" viewBox="0 0 26 28" fill="none"><text x="1.8" y="13.2" font-family="Liberation Sans" font-size="15.4" fill="#d6d6d6" textLength="17.2" lengthAdjust="spacingAndGlyphs">ab</text><text x="1.8" y="24.2" font-family="Liberation Sans" font-size="15.4" fill="#d6d6d6">c</text><path d="M22.2 14.6 C22.6 19 19 20.8 11.2 20.8 M15 16.8 L10.9 20.8 L15 24.8" stroke="#3a96dd" stroke-width="1.9" stroke-linecap="round" stroke-linejoin="round"/></svg>
<span style="top:157.00px;font-size:17.4px;line-height:1;color:#ffffff;letter-spacing:-0.047px;left:897.81px;">Wrap Text</span>
<div style="left:652.8px;top:200.95px;width:22px;height:1.9px;background:#d6d6d6;"></div>
<div style="left:652.8px;top:207.05px;width:15.8px;height:1.9px;background:#d6d6d6;"></div>
<div style="left:652.8px;top:213.05px;width:22px;height:1.9px;background:#d6d6d6;"></div>
<div style="left:652.8px;top:219.25px;width:15.8px;height:1.9px;background:#d6d6d6;"></div>
<div style="left:692.2px;top:200.95px;width:21.4px;height:1.9px;background:#d6d6d6;"></div>
<div style="left:695.4px;top:207.05px;width:15px;height:1.9px;background:#d6d6d6;"></div>
<div style="left:692.2px;top:213.05px;width:21.4px;height:1.9px;background:#d6d6d6;"></div>
<div style="left:695.4px;top:219.25px;width:15px;height:1.9px;background:#d6d6d6;"></div>
<div style="left:731px;top:200.95px;width:22px;height:1.9px;background:#d6d6d6;"></div>
<div style="left:737.2px;top:207.05px;width:15.8px;height:1.9px;background:#d6d6d6;"></div>
<div style="left:731px;top:213.05px;width:22px;height:1.9px;background:#d6d6d6;"></div>
<div style="left:737.2px;top:219.25px;width:15.8px;height:1.9px;background:#d6d6d6;"></div>
<div style="left:762.8px;top:193.5px;width:1px;height:36.9px;background:#555555;"></div>
<div style="left:774.1px;top:201px;width:21.7px;height:1.9px;background:#d6d6d6;"></div>
<div style="left:774.1px;top:219.2px;width:21.7px;height:1.9px;background:#d6d6d6;"></div>
<div style="left:786.7px;top:207px;width:9.1px;height:1.9px;background:#d6d6d6;"></div>
<div style="left:786.7px;top:213px;width:9.1px;height:1.9px;background:#d6d6d6;"></div>
<svg style="left:773.1px;top:205px;" width="13" height="13" viewBox="0 0 13 13" fill="none"><path d="M10.6 6.2 H2.2 M5.6 2.8 L2.2 6.2 L5.6 9.6" stroke="#3a96dd" stroke-width="1.8" stroke-linecap="round" stroke-linejoin="round"/></svg>
<div style="left:813.3px;top:201px;width:21.7px;height:1.9px;background:#d6d6d6;"></div>
<div style="left:813.3px;top:219.2px;width:21.7px;height:1.9px;background:#d6d6d6;"></div>
<div style="left:825.9px;top:207px;width:9.1px;height:1.9px;background:#d6d6d6;"></div>
<div style="left:825.9px;top:213px;width:9.1px;height:1.9px;background:#d6d6d6;"></div>
<svg style="left:812.3px;top:205px;" width="13" height="13" viewBox="0 0 13 13" fill="none"><path d="M1.6 6.2 H10.2 M6.8 2.8 L10.2 6.2 L6.8 9.6" stroke="#3a96dd" stroke-width="1.8" stroke-linecap="round" stroke-linejoin="round"/></svg>
<svg style="left:866px;top:199px;" width="25" height="25" viewBox="0 0 25 25" fill="none"><rect x="1.6" y="1.6" width="21.6" height="21.2" stroke="#d6d6d6" stroke-width="1.7"/><path d="M12.4 1.6 V6 M12.4 18.6 V22.8" stroke="#d6d6d6" stroke-width="1.7"/><rect x="1.6" y="6" width="21.6" height="12.6" stroke="#3a96dd" stroke-width="1.9" fill="#292929"/><path d="M5 12.3 H19.8 M8 9.2 L4.9 12.3 L8 15.4 M16.8 9.2 L19.9 12.3 L16.8 15.4" stroke="#3a96dd" stroke-width="1.7" stroke-linecap="round" stroke-linejoin="round"/></svg>
<span style="top:205.00px;font-size:17.4px;line-height:1;color:#ffffff;letter-spacing:0.000px;transform:scaleX(1.0322);transform-origin:left center;left:896.42px;">Merge &amp; Center</span>
<svg style="left:1048.7px;top:208.4px;" width="10.8" height="7.4" viewBox="0 0 10.8 7.4" fill="none"><path d="M2 2 L5.4 5.4 L8.8 2" stroke="#f0f0f0" stroke-width="2" stroke-linecap="round" stroke-linejoin="round"/></svg>
<span style="top:255.00px;font-size:15.2px;line-height:1;color:#f0f0f0;letter-spacing:0.000px;transform:scaleX(1.0660);transform-origin:left center;left:810.06px;">Alignment</span>
<svg style="left:1065.5px;top:257.3px;" width="13" height="13" viewBox="0 0 13 13" fill="none"><path d="M1 6.4 V1 H6.4" stroke="#ececec" stroke-width="1.9"/><path d="M4.2 4.2 L11 11 M11.6 5.2 V11.6 H5.2" stroke="#ececec" stroke-width="1.9"/></svg>
<div style="left:1096.6px;top:146.4px;width:216.8px;height:35.2px;background:#262626;border:1px solid #686868;border-radius:6px;box-sizing:border-box;"></div>
<span style="top:157.00px;font-size:17.9px;line-height:1;color:#ffffff;letter-spacing:-0.529px;left:1098.61px;">General</span>
<svg style="left:1299.6px;top:161px;" width="10.8" height="7.4" viewBox="0 0 10.8 7.4" fill="none"><path d="M2 2 L5.4 5.4 L8.8 2" stroke="#f0f0f0" stroke-width="2" stroke-linecap="round" stroke-linejoin="round"/></svg>
<span style="top:201.00px;font-size:23.5px;line-height:1;color:#d6d6d6;left:1106.77px;">$</span>
<svg style="left:1136.8px;top:208.95px;" width="11" height="7.7" viewBox="0 0 11 7.7" fill="none"><path d="M2 2 L5.5 5.7 L9 2" stroke="#f0f0f0" stroke-width="1.9" stroke-linecap="round" stroke-linejoin="round"/></svg>
<span style="top:200.00px;font-size:27px;line-height:1;color:#d6d6d6;left:1162.26px;">%</span>
<svg style="left:1207px;top:202px;" width="16" height="21" viewBox="0 0 16 21" fill="none"><path d="M8 1.8 A5 5 0 0 1 13 6.8 C13 12 9.4 16.4 3.6 18.4 L2.9 16.9 C6.2 15.2 7.8 13.4 8.3 11.4 A4.8 4.8 0 0 1 8 1.8 Z" fill="#d6d6d6"/></svg>
<div style="left:1234.8px;top:194.3px;width:1px;height:35.4px;background:#555555;"></div>
<svg style="left:1243.5px;top:198px;" width="26" height="26" viewBox="0 0 26 26" fill="none"><path d="M13 8 H2.6 M6.4 4.2 L2.6 8 L6.4 11.8" stroke="#3a96dd" stroke-width="1.8" stroke-linecap="round" stroke-linejoin="round"/><text x="16.3" y="12.4" font-family="Liberation Sans" font-size="13.4" fill="#d6d6d6">0</text><text x="4.6" y="24.2" font-family="Liberation Sans" font-size="13.4" fill="#d6d6d6">.00</text></svg>
<svg style="left:1282.5px;top:198px;" width="26" height="26" viewBox="0 0 26 26" fill="none"><text x="6.6" y="12.4" font-family="Liberation Sans" font-size="13.4" fill="#d6d6d6">.00</text><path d="M2 19.6 H12.6 M8.8 15.8 L12.6 19.6 L8.8 23.4" stroke="#3a96dd" stroke-width="1.8" stroke-linecap="round" stroke-linejoin="round"/><text x="14.4" y="24.2" font-family="Liberation Sans" font-size="13.4" fill="#d6d6d6">.0</text></svg>
<span style="top:255.00px;font-size:15.2px;line-height:1;color:#f0f0f0;letter-spacing:0.050px;transform:scaleX(1.0700);transform-origin:left center;left:1162.46px;">Number</span>
<svg style="left:1307.5px;top:257.3px;" width="13" height="13" viewBox="0 0 13 13" fill="none"><path d="M1 6.4 V1 H6.4" stroke="#ececec" stroke-width="1.9"/><path d="M4.2 4.2 L11 11 M11.6 5.2 V11.6 H5.2" stroke="#ececec" stroke-width="1.9"/></svg>
<svg style="left:1343px;top:138px;" width="54" height="44" viewBox="0 0 54 44" fill="none"><g stroke="#cdcdcd" stroke-width="1.8"><rect x="5.9" y="7.8" width="41" height="32.6"/><path d="M19.5 7.8 V40.4 M33.3 7.8 V40.4 M5.9 18.2 H46.9 M5.9 30.4 H46.9"/></g><rect x="23" y="18.3" width="26.6" height="11.2" fill="#1173d4" stroke="#62b2f2" stroke-width="1.3"/><path d="M35.2 18.3 V29.5" stroke="#62b2f2" stroke-width="1.3"/><rect x="11.6" y="18.6" width="11" height="10.6" fill="#292929"/><path d="M12.4 14 L2.6 23.2 L12.4 32.6" stroke="#4f9fe2" stroke-width="1.9" stroke-linecap="round" stroke-linejoin="round"/><path d="M8.6 20.2 H23 M8.6 26.4 H23" stroke="#4f9fe2" stroke-width="1.7"/></svg>
<span style="top:196.00px;font-size:17.4px;line-height:1;color:#ffffff;letter-spacing:0.208px;left:1346.29px;">Insert</span>
<svg style="left:1362.9px;top:222.7px;" width="10.8" height="7.4" viewBox="0 0 10.8 7.4" fill="none"><path d="M2 2 L5.4 5.4 L8.8 2" stroke="#f0f0f0" stroke-width="2" stroke-linecap="round" stroke-linejoin="round"/></svg>
<svg style="left:1408px;top:138px;" width="54" height="44" viewBox="0 0 54 44" fill="none"><g stroke="#cdcdcd" stroke-width="1.8"><rect x="5.6" y="7.8" width="41" height="32.6"/><path d="M19.2 7.8 V40.4 M33 7.8 V40.4 M5.6 18.2 H46.6 M5.6 30.4 H46.6"/></g><rect x="4" y="18.8" width="45" height="10.4" fill="#292929"/><path d="M11.4 18.4 H32 L36 23.9 L32 29.4 H11.4 Z" fill="#1173d4" stroke="#62b2f2" stroke-width="1.3"/><path d="M25.2 18.4 V29.4" stroke="#62b2f2" stroke-width="1.3"/><path d="M32.4 16.4 L48.4 33.2 M48.4 16.4 L32.4 33.2" stroke="#e8544b" stroke-width="2.1" stroke-linecap="round"/></svg>
<span style="top:196.00px;font-size:17.4px;line-height:1;color:#ffffff;letter-spacing:0.198px;left:1408.36px;">Delete</span>
<svg style="left:1427.8px;top:222.7px;" width="10.8" height="7.4" viewBox="0 0 10.8 7.4" fill="none"><path d="M2 2 L5.4 5.4 L8.8 2" stroke="#f0f0f0" stroke-width="2" stroke-linecap="round" stroke-linejoin="round"/></svg>
<svg style="left:1474px;top:136px;" width="54" height="46" viewBox="0 0 54 46" fill="none"><g stroke="#cdcdcd" stroke-width="1.8"><rect x="5.9" y="9.8" width="41" height="32.8"/><path d="M16.3 9.8 V42.6 M36.5 9.8 V42.6 M5.9 20.2 H46.9 M5.9 32 H46.9"/></g><rect x="16.9" y="20.6" width="19.6" height="11.2" fill="#1173d4" stroke="#62b2f2" stroke-width="1.3"/><path d="M14.4 4.6 H37.8 M14.4 2 V7.2 M37.8 2 V7.2" stroke="#4f9fe2" stroke-width="1.8"/></svg>
<span style="top:194.00px;font-size:17.4px;line-height:1;color:#ffffff;letter-spacing:-0.000px;transform:scaleX(1.0533);transform-origin:left center;left:1471.09px;">Format</span>
<svg style="left:1493.8px;top:221.2px;" width="10.8" height="7.4" viewBox="0 0 10.8 7.4" fill="none"><path d="M2 2 L5.4 5.4 L8.8 2" stroke="#f0f0f0" stroke-width="2" stroke-linecap="round" stroke-linejoin="round"/></svg>
<span style="top:256.00px;font-size:15.2px;line-height:1;color:#f0f0f0;letter-spacing:-0.173px;left:1417.64px;">Cells</span>
<svg style="left:1564px;top:139.5px;" width="23" height="25" viewBox="0 0 23 25" fill="none"><path d="M19.6 5.6 V2 H2.4 L10.8 12.4 L2.4 22.8 H19.6 V19.2" stroke="#d6d6d6" stroke-width="1.8" stroke-linejoin="miter"/></svg>
<span style="top:144.00px;font-size:17.4px;line-height:1;color:#ffffff;letter-spacing:0.000px;transform:scaleX(1.0400);transform-origin:left center;left:1593.25px;">AutoSum</span>
<svg style="left:1693.8px;top:148.7px;" width="10.8" height="7.4" viewBox="0 0 10.8 7.4" fill="none"><path d="M2 2 L5.4 5.4 L8.8 2" stroke="#f0f0f0" stroke-width="2" stroke-linecap="round" stroke-linejoin="round"/></svg>
<svg style="left:1561.5px;top:179px;" width="27" height="24" viewBox="0 0 27 24" fill="none"><rect x="1.6" y="2" width="23.6" height="19.6" stroke="#d6d6d6" stroke-width="1.7"/><path d="M1.6 3 H25.2" stroke="#d6d6d6" stroke-width="3"/><path d="M13.4 8 V17.2 M9.4 13.4 L13.4 17.4 L17.4 13.4" stroke="#3a96dd" stroke-width="1.8" stroke-linecap="round" stroke-linejoin="round"/></svg>
<span style="top:184.00px;font-size:17.4px;line-height:1;color:#ffffff;letter-spacing:0.127px;left:1592.36px;">Fill</span>
<svg style="left:1618.9px;top:187.3px;" width="10.8" height="7.4" viewBox="0 0 10.8 7.4" fill="none"><path d="M2 2 L5.4 5.4 L8.8 2" stroke="#f0f0f0" stroke-width="2" stroke-linecap="round" stroke-linejoin="round"/></svg>
<svg style="left:1561.5px;top:216.5px;" width="27" height="27" viewBox="0 0 27 27" fill="none"><path d="M13.6 2.4 L24.6 13.4 L12.8 24.4 L1.9 13.6 Z" stroke="#c565d6" stroke-width="1.8" stroke-linejoin="round"/><path d="M1.9 13.6 L6.4 9.3 L17.3 20.2 L12.8 24.4 Z" fill="#c565d6"/></svg>
<span style="top:223.00px;font-size:17.4px;line-height:1;color:#ffffff;letter-spacing:-0.314px;left:1592.43px;">Clear</span>
<svg style="left:1636.8px;top:225.8px;" width="10.8" height="7.4" viewBox="0 0 10.8 7.4" fill="none"><path d="M2 2 L5.4 5.4 L8.8 2" stroke="#f0f0f0" stroke-width="2" stroke-linecap="round" stroke-linejoin="round"/></svg>
<svg style="left:1727px;top:140px;" width="48" height="44" viewBox="0 0 48 44" fill="none"><text x="2.6" y="19" font-family="Liberation Sans" font-size="22" fill="#3f9be6">A</text><text x="2.8" y="41.4" font-family="Liberation Sans" font-size="24" fill="#d6d6d6">Z</text><path d="M21.2 12 H44.4 V14.6 L35.2 24.4 V34.8 H30.6 V24.4 L21.2 14.6 Z" stroke="#d6d6d6" stroke-width="1.8" stroke-linejoin="round"/></svg>
<span style="top:193.00px;font-size:17.4px;line-height:1;color:#ffffff;letter-spacing:0.104px;transform:scaleX(1.0700);transform-origin:left center;left:1724.56px;">Sort &amp;</span>
<span style="top:218.00px;font-size:17.4px;line-height:1;color:#ffffff;letter-spacing:-0.075px;left:1723.56px;">Filter</span>
<svg style="left:1766.9px;top:220.5px;" width="10.8" height="7.4" viewBox="0 0 10.8 7.4" fill="none"><path d="M2 2 L5.4 5.4 L8.8 2" stroke="#f0f0f0" stroke-width="2" stroke-linecap="round" stroke-linejoin="round"/></svg>
<svg style="left:1795px;top:139px;" width="52" height="48" viewBox="0 0 52 48" fill="none"><circle cx="31.1" cy="17.9" r="15" stroke="#d6d6d6" stroke-width="1.9"/><path d="M20.6 28.6 L4.2 44.6" stroke="#d6d6d6" stroke-width="1.9" stroke-linecap="round"/></svg>
<span style="top:193.00px;font-size:17.4px;line-height:1;color:#ffffff;letter-spacing:0.020px;transform:scaleX(1.0700);transform-origin:left center;left:1793.96px;">Find &amp;</span>
<span style="top:218.00px;font-size:17.4px;line-height:1;color:#ffffff;letter-spacing:-0.452px;left:1789.82px;">Select</span>
<svg style="left:1840.5px;top:220.5px;" width="10.8" height="7.4" viewBox="0 0 10.8 7.4" fill="none"><path d="M2 2 L5.4 5.4 L8.8 2" stroke="#f0f0f0" stroke-width="2" stroke-linecap="round" stroke-linejoin="round"/></svg>
<span style="top:255.00px;font-size:15.2px;line-height:1;color:#f0f0f0;letter-spacing:0.098px;transform:scaleX(1.0700);transform-origin:left center;left:1681.06px;">Editing</span>
<svg style="left:1893.5px;top:139.5px;" width="46" height="46" viewBox="0 0 46 46" fill="none"><g stroke="#d4582c" stroke-width="1.9"><rect x="1.8" y="1.8" width="41.4" height="41.4"/><rect x="5.4" y="5.4" width="34.2" height="34.2" stroke-width="1.3"/><rect x="8.8" y="8.8" width="11.6" height="11.6"/><rect x="24.6" y="8.8" width="11.6" height="11.6"/><rect x="8.8" y="24.6" width="11.6" height="11.6"/><rect x="24.6" y="24.6" width="11.6" height="11.6"/></g></svg>
<span style="top:193.00px;font-size:17.4px;line-height:1;color:#ffffff;letter-spacing:0.000px;transform:scaleX(1.0629);transform-origin:left center;left:1885.15px;">Add-ins</span>
<span style="top:255.00px;font-size:15.2px;line-height:1;color:#f0f0f0;letter-spacing:0.000px;transform:scaleX(1.0342);transform-origin:left center;left:1888.46px;">Add-ins</span>
<svg style="left:1988px;top:140px;" width="46" height="46" viewBox="0 0 46 46" fill="none"><g stroke="#a9a9a9" stroke-width="1.7"><rect x="1.6" y="1.8" width="40.4" height="40"/><path d="M1.6 6.4 H42" stroke-width="4"/><path d="M1.6 19 H42 M1.6 31 H42 M15 31 V41.8 M28.6 31 V41.8"/></g><circle cx="20.4" cy="19.4" r="13.6" fill="#292929" stroke="#d0d0d0" stroke-width="1.9"/><path d="M30.4 29.6 L43.4 43" stroke="#d0d0d0" stroke-width="2.4" stroke-linecap="round"/><rect x="12.6" y="18" width="4.6" height="8.4" fill="#9a9a9a"/><rect x="17.8" y="12.6" width="4.6" height="13.8" stroke="#d0d0d0" stroke-width="1.3"/><rect x="23.4" y="14.8" width="4.4" height="11.6" fill="#3a96dd"/></svg>
<span style="top:193.00px;font-size:17.4px;line-height:1;color:#ffffff;letter-spacing:0.030px;left:1979.86px;">Analyze</span>
<span style="top:218.00px;font-size:17.4px;line-height:1;color:#ffffff;letter-spacing:0.193px;left:1990.96px;">Data</span>
<div style="left:2156.6px;top:142.7px;width:112.2px;height:112.2px;background:#fff;border-radius:50%;"></div>
<div style="left:2181.6px;top:173px;width:61.3px;height:52.5px;background:#5a62ec;"></div>
<div style="left:2189.7px;top:181.4px;width:17.9px;height:15.7px;background:#fff;"></div>
<div style="left:2189.7px;top:203.6px;width:17.9px;height:14.3px;background:#fff;"></div>
<div style="left:2215.6px;top:181.4px;width:19.7px;height:15.7px;background:#fff;"></div>
<div style="left:2215.6px;top:203.6px;width:19.7px;height:14.3px;background:#fff;"></div>
<svg style="left:2290px;top:148px;" width="370" height="56" viewBox="0 0 370 56" fill="none"><text transform="translate(5.00 48.80) scale(0.8764 1)" x="-1.99" y="0" font-family="Liberation Sans" font-weight="700" font-size="47.21" fill="#fff" stroke="#fff" stroke-width="2.4" stroke-linejoin="round">F</text><text transform="translate(31.00 48.80) scale(0.9302 1)" x="-1.99" y="0" font-family="Liberation Sans" font-weight="700" font-size="47.21" fill="#fff" stroke="#fff" stroke-width="2.4" stroke-linejoin="round">I</text><text transform="translate(44.80 48.80) scale(1.0221 1)" x="-1.99" y="0" font-family="Liberation Sans" font-weight="700" font-size="47.21" fill="#fff" stroke="#fff" stroke-width="2.4" stroke-linejoin="round">N</text><text transform="translate(80.90 48.80) scale(1.1003 1)" x="-1.99" y="0" font-family="Liberation Sans" font-weight="700" font-size="47.21" fill="#fff" stroke="#fff" stroke-width="2.4" stroke-linejoin="round">M</text><text transform="translate(162.50 48.80) scale(1.0251 1)" x="-1.99" y="0" font-family="Liberation Sans" font-weight="700" font-size="47.21" fill="#fff" stroke="#fff" stroke-width="2.4" stroke-linejoin="round">D</text><text transform="translate(197.80 48.80) scale(0.7283 1)" x="-1.99" y="0" font-family="Liberation Sans" font-weight="700" font-size="47.21" fill="#fff" stroke="#fff" stroke-width="2.4" stroke-linejoin="round">E</text><text transform="translate(223.70 48.80) scale(0.7220 1)" x="-1.99" y="0" font-family="Liberation Sans" font-weight="700" font-size="47.21" fill="#fff" stroke="#fff" stroke-width="2.4" stroke-linejoin="round">L</text><text transform="translate(244.60 48.80) scale(0.8593 1)" x="-0.10" y="0" font-family="Liberation Sans" font-weight="700" font-size="47.21" fill="#fff" stroke="#fff" stroke-width="2.4" stroke-linejoin="round">S</text><text transform="translate(275.00 48.80) scale(0.7558 1)" x="-1.99" y="0" font-family="Liberation Sans" font-weight="700" font-size="47.21" fill="#fff" stroke="#fff" stroke-width="2.4" stroke-linejoin="round">L</text><text transform="translate(296.40 48.80) scale(1.0374 1)" x="0.02" y="0" font-family="Liberation Sans" font-weight="700" font-size="47.21" fill="#fff" stroke="#fff" stroke-width="2.4" stroke-linejoin="round">A</text><text transform="translate(333.00 48.80) scale(0.9328 1)" x="-1.99" y="0" font-family="Liberation Sans" font-weight="700" font-size="47.21" fill="#fff" stroke="#fff" stroke-width="2.4" stroke-linejoin="round">B</text><circle cx="141.50" cy="31.80" r="13.35" stroke="#fff" stroke-width="8.7"/><rect x="135.10" y="17.60" width="12.8" height="19" rx="6.4" fill="#292929"/><rect x="137.20" y="6.60" width="8.6" height="27.4" rx="4.3" fill="#fff"/></svg>
<span style="top:211.00px;font-size:31.4px;line-height:1;color:#ffffff;letter-spacing:23.950px;transform:scaleX(1.0700);transform-origin:left center;left:2294.64px;-webkit-text-stroke:0.5px #fff;">Templates</span>
<svg style="left:2848.9px;top:252.6px;" width="16.6" height="10.4" viewBox="0 0 16.6 10.4" fill="none"><path d="M2 2 L8.3 8.4 L14.6 2" stroke="#fff" stroke-width="2" stroke-linecap="round" stroke-linejoin="round"/></svg>
<svg style="left:53px;top:138px;" width="46" height="52" viewBox="0 0 46 52" fill="none">
<path d="M14.6 9.4 H5.8 A1.6 1.6 0 0 0 4.2 11 V41.6 A1.6 1.6 0 0 0 5.8 43.2 H21" stroke="#f0a030" stroke-width="3.3" stroke-linejoin="round"/>
<path d="M27.4 9.4 H31.4 A1.6 1.6 0 0 1 33 11 V20" stroke="#f0a030" stroke-width="3.3"/>
<path d="M10.6 13.6 V7.6 H15.4 A3.9 3.9 0 0 1 23 7.6 H27.8 V13.6 Z" stroke="#bdbdbd" stroke-width="1.8" stroke-linejoin="round" fill="#292929"/>
<rect x="22.6" y="22" width="19.4" height="25.2" stroke="#d9d9d9" stroke-width="1.9" fill="#292929"/></svg>
<svg style="left:113.5px;top:139px;" width="22" height="27" viewBox="0 0 22 27" fill="none"><path d="M7 1.6 L14.9 19.5 M15.6 1.6 L7.1 19.5" stroke="#e2e2e2" stroke-width="1.7" stroke-linecap="round"/><circle cx="5.4" cy="22.2" r="2.9" stroke="#3f9be6" stroke-width="1.8"/><circle cx="16.4" cy="22.2" r="2.9" stroke="#3f9be6" stroke-width="1.8"/></svg>
<svg style="left:110.5px;top:177.5px;" width="28" height="28" viewBox="0 0 28 28" fill="none"><path d="M9.4 21.6 H2.4 V2 H10.4 L13.6 5.2" stroke="#d0d0d0" stroke-width="1.7" stroke-linejoin="round"/><path d="M11.4 6.2 H19.8 L25 11.4 V25 H11.4 Z" stroke="#d9d9d9" stroke-width="1.8" stroke-linejoin="round"/><path d="M19.6 6.4 V11.8 H25 M14.8 16.6 H21.6 M14.8 19.8 H21.6" stroke="#d9d9d9" stroke-width="1.6"/></svg>
<svg style="left:111px;top:216px;" width="28" height="26" viewBox="0 0 28 26" fill="none"><path d="M17.4 8.8 L21.9 4.1 A2.1 2.1 0 0 1 25 7.1 L20.5 11.8" stroke="#e0e0e0" stroke-width="1.7" stroke-linejoin="round"/><path d="M13.4 7.6 L22 15.8 L19.6 18.2 L11 10 Z" stroke="#e0e0e0" stroke-width="1.6" stroke-linejoin="round"/><path d="M10.6 10.4 L18.8 18.4 C15.6 20.4 14.6 22.4 14.4 24.6 L2.4 13.6 C5.4 13.6 8.2 12.8 10.6 10.4 Z" stroke="#f0a030" stroke-width="1.7" stroke-linejoin="round"/><path d="M6.4 17 L14.2 24.2 L14.8 21.8 L9 16.4 Z" fill="#f0a030"/></svg>
<div style="left:11px;top:1670px;width:2880px;height:48px;background:#0a0a0a;"></div>
<div style="left:11px;top:1718px;width:2880px;height:33px;background:#141414;"></div>
<div style="left:11px;top:1717.6px;width:2880px;height:1px;background:#2c2c2c;"></div>
<svg style="left:44px;top:1683px;" width="14" height="21" viewBox="0 0 14 21" fill="none"><path d="M10.4 3 L3.2 10.4 L10.4 17.8" stroke="#8c8c8c" stroke-width="1.9" stroke-linecap="round" stroke-linejoin="round"/></svg>
<svg style="left:92px;top:1683px;" width="14" height="21" viewBox="0 0 14 21" fill="none"><path d="M3.6 3 L10.8 10.4 L3.6 17.8" stroke="#d8d8d8" stroke-width="1.9" stroke-linecap="round" stroke-linejoin="round"/></svg>
<span style="top:1687.00px;font-size:19.5px;line-height:1;color:#fff;letter-spacing:0.008px;transform:scaleX(1.0700);transform-origin:left center;left:189.46px;">Contents</span>
<div style="left:292.2px;top:1680.5px;width:1px;height:26.8px;background:#4a4a4a;"></div>
<div style="left:433.1px;top:1680.5px;width:1px;height:26.8px;background:#4a4a4a;"></div>
<div style="left:552px;top:1680.5px;width:1px;height:26.8px;background:#4a4a4a;"></div>
<div style="left:723.1px;top:1680.5px;width:1px;height:26.8px;background:#4a4a4a;"></div>
<div style="left:825px;top:1680.5px;width:1px;height:26.8px;background:#4a4a4a;"></div>
<div style="left:925.1px;top:1680.5px;width:1px;height:26.8px;background:#4a4a4a;"></div>
<div style="left:1051px;top:1680.5px;width:1px;height:26.8px;background:#4a4a4a;"></div>
<div style="left:1154.1px;top:1680.5px;width:1px;height:26.8px;background:#4a4a4a;"></div>
<div style="left:1209.2px;top:1680.5px;width:1px;height:26.8px;background:#4a4a4a;"></div>
<div style="left:1270.1px;top:1680.5px;width:1px;height:26.8px;background:#4a4a4a;"></div>
<div style="left:1330.9px;top:1680.5px;width:1px;height:26.8px;background:#4a4a4a;"></div>
<div style="left:1459.2px;top:1680.5px;width:1px;height:26.8px;background:#4a4a4a;"></div>
<div style="left:1587.1px;top:1680.5px;width:1px;height:26.8px;background:#4a4a4a;"></div>
<div style="left:1714.1px;top:1680.5px;width:1px;height:26.8px;background:#4a4a4a;"></div>
<div style="left:1775px;top:1680.5px;width:1px;height:26.8px;background:#4a4a4a;"></div>
<div style="left:1860.2px;top:1680.5px;width:1px;height:26.8px;background:#4a4a4a;"></div>
<div style="left:1958px;top:1680.5px;width:1px;height:26.8px;background:#4a4a4a;"></div>
<div style="left:2034.9px;top:1680.5px;width:1px;height:26.8px;background:#4a4a4a;"></div>
<div style="left:298.9px;top:1676px;width:127.9px;height:35.8px;background:#fce962;border-radius:7px;"></div>
<span style="top:1687.00px;font-size:19.5px;line-height:1;color:#151515;letter-spacing:0.011px;transform:scaleX(1.0700);transform-origin:left center;left:312.38px;">Dashboard</span>
<div style="left:440.2px;top:1676px;width:105.7px;height:35.8px;background:#fce962;border-radius:7px;"></div>
<span style="top:1687.00px;font-size:19.5px;line-height:1;color:#151515;letter-spacing:0.000px;transform:scaleX(1.0223);transform-origin:left center;left:453.56px;">Revenue</span>
<div style="left:559.3px;top:1676px;width:157.8px;height:35.8px;background:#fce962;border-radius:7px;"></div>
<span style="top:1687.00px;font-size:19.5px;line-height:1;color:#151515;letter-spacing:-0.146px;left:571.42px;">COGS &amp; OPEX</span>
<div style="left:730.1px;top:1676px;width:88.9px;height:35.8px;background:#fce962;border-radius:7px;"></div>
<span style="top:1687.00px;font-size:19.5px;line-height:1;color:#151515;letter-spacing:0.068px;transform:scaleX(1.0700);transform-origin:left center;left:741.88px;">Payroll</span>
<div style="left:832px;top:1676px;width:86.8px;height:35.8px;background:#fce962;border-radius:7px;"></div>
<span style="top:1687.00px;font-size:19.5px;line-height:1;color:#151515;letter-spacing:-0.683px;transform:scaleX(0.9796);transform-origin:left center;left:844.44px;">CAPEX</span>
<div style="left:932.2px;top:1676px;width:112.4px;height:35.8px;background:#fce962;border-radius:7px;"></div>
<span style="top:1687.00px;font-size:19.5px;line-height:1;color:#151515;letter-spacing:0.000px;transform:scaleX(1.0523);transform-origin:left center;left:944.57px;">CapTable</span>
<div style="left:1058.4px;top:1676px;width:89.6px;height:35.8px;background:#fce962;border-radius:7px;"></div>
<span style="top:1687.00px;font-size:19.5px;line-height:1;color:#151515;letter-spacing:0.157px;transform:scaleX(1.0700);transform-origin:left center;left:1070.16px;">Capital</span>
<div style="left:1161px;top:1676px;width:41.8px;height:35.8px;background:#4ab1e8;border-radius:7px;"></div>
<span style="top:1687.00px;font-size:19.5px;line-height:1;color:#151515;letter-spacing:-0.346px;left:1173.00px;">IS</span>
<div style="left:1277px;top:1676px;width:47.6px;height:35.8px;background:#4ab1e8;border-radius:7px;"></div>
<span style="top:1687.00px;font-size:19.5px;line-height:1;color:#151515;letter-spacing:-0.683px;transform:scaleX(0.9404);transform-origin:left center;left:1289.19px;">BS</span>
<div style="left:1338px;top:1676px;width:115px;height:35.8px;background:#4ab1e8;border-radius:7px;"></div>
<span style="top:1687.00px;font-size:19.5px;line-height:1;color:#151515;letter-spacing:0.217px;left:1350.52px;">Scenarios</span>
<div style="left:1466.2px;top:1676px;width:114.8px;height:35.8px;background:#4ab1e8;border-radius:7px;"></div>
<span style="top:1687.00px;font-size:19.5px;line-height:1;color:#151515;letter-spacing:0.347px;transform:scaleX(1.0700);transform-origin:left center;left:1479.10px;">Valuation</span>
<div style="left:1594px;top:1676px;width:114px;height:35.8px;background:#4ab1e8;border-radius:7px;"></div>
<span style="top:1687.00px;font-size:19.5px;line-height:1;color:#151515;letter-spacing:0.000px;transform:scaleX(1.0547);transform-origin:left center;left:1607.47px;">Summary</span>
<div style="left:1721px;top:1676px;width:48px;height:35.8px;background:#4ab1e8;border-radius:7px;"></div>
<span style="top:1687.00px;font-size:19.5px;line-height:1;color:#151515;letter-spacing:-0.683px;transform:scaleX(0.9165);transform-origin:left center;left:1733.53px;">BE</span>
<div style="left:1782px;top:1676px;width:72.2px;height:35.8px;background:#4ab1e8;border-radius:7px;"></div>
<span style="top:1687.00px;font-size:19.5px;line-height:1;color:#151515;letter-spacing:-0.370px;left:1794.39px;">ROIC</span>
<div style="left:1867.2px;top:1676px;width:84.4px;height:35.8px;background:#4ab1e8;border-radius:7px;"></div>
<span style="top:1687.00px;font-size:19.5px;line-height:1;color:#151515;letter-spacing:0.000px;transform:scaleX(1.0400);transform-origin:left center;left:1879.49px;">Charts</span>
<div style="left:1965px;top:1676px;width:64px;height:35.8px;background:#4ab1e8;border-radius:7px;"></div>
<span style="top:1687.00px;font-size:19.5px;line-height:1;color:#151515;letter-spacing:-0.567px;left:1977.09px;">KPIs</span>
<div style="left:2042px;top:1676px;width:30px;height:35.8px;background:#4ab1e8;border-radius:7px 0 0 7px;overflow:hidden;"><span style="left:12.4px;top:9.77px;font-size:20px;line-height:1;color:#151515">Sc</span></div>
<div style="left:1215.6px;top:1670px;width:49px;height:42.2px;background:linear-gradient(180deg,#ffffff 0%,#ffffff 45%,#d4e9f8 100%);border-radius:0 0 7px 7px;"></div>
<svg style="left:1208.6px;top:1670px;" width="7" height="7" viewBox="0 0 7 7" fill="none"><path d="M7 0 V7 A7 7 0 0 0 0 0 Z" fill="#fff"/></svg>
<svg style="left:1264.6px;top:1670px;" width="7" height="7" viewBox="0 0 7 7" fill="none"><path d="M0 0 V7 A7 7 0 0 1 7 0 Z" fill="#fff"/></svg>
<span style="top:1681.00px;font-size:20px;line-height:1;color:#222;letter-spacing:-0.700px;transform:scaleX(0.9298);transform-origin:left center;left:1227.57px;">CF</span>
<div style="left:1228px;top:1705px;width:23.6px;height:2.8px;background:#1e7a45;"></div>
<div style="left:2087.7px;top:1691.2px;width:3.8px;height:3.8px;background:#e0e0e0;border-radius:50%;"></div>
<div style="left:2093.3px;top:1691.2px;width:3.8px;height:3.8px;background:#e0e0e0;border-radius:50%;"></div>
<div style="left:2098.9px;top:1691.2px;width:3.8px;height:3.8px;background:#e0e0e0;border-radius:50%;"></div>
<div style="left:2134.6px;top:1692.2px;width:17.2px;height:1.9px;background:#e8e8e8;"></div>
<div style="left:2142.25px;top:1684.5px;width:1.9px;height:17.2px;background:#e8e8e8;"></div>
<div style="left:2189.9px;top:1685.7px;width:3.4px;height:3.4px;background:#e8e8e8;"></div>
<div style="left:2189.9px;top:1692.3px;width:3.4px;height:3.4px;background:#e8e8e8;"></div>
<div style="left:2189.9px;top:1698.9px;width:3.4px;height:3.4px;background:#e8e8e8;"></div>
<div style="left:2216.4px;top:1680px;width:644px;height:26.4px;background:#1b1b1b;border-radius:13px;"></div>
<svg style="left:2223px;top:1686px;" width="12" height="14" viewBox="0 0 12 14" fill="none"><path d="M10.6 1.2 V12.8 L1.2 7 Z" fill="#9d9d9d"/></svg>
<div style="left:2241.6px;top:1686.8px;width:159.4px;height:12.6px;background:#9d9d9d;border-radius:6.3px;"></div>
<svg style="left:2842.5px;top:1686px;" width="12" height="14" viewBox="0 0 12 14" fill="none"><path d="M1.4 1.2 V12.8 L10.8 7 Z" fill="#9d9d9d"/></svg>
<div style="left:2860.5px;top:278px;width:30.5px;height:1392px;background:#0a0a0a;"></div>
<div style="left:2861.5px;top:279.2px;width:28px;height:1389.5px;background:#141414;border-radius:13px;"></div>
<svg style="left:2867.5px;top:284.5px;" width="17" height="13" viewBox="0 0 17 13" fill="none"><path d="M2.6 10.6 H14.2 A1.2 1.2 0 0 0 15.1 8.7 L9.4 2 A1.3 1.3 0 0 0 7.4 2 L1.7 8.7 A1.2 1.2 0 0 0 2.6 10.6 Z" fill="#9a9a9a"/></svg>
<div style="left:2869.9px;top:303.8px;width:12px;height:1024.3px;background:#9a9a9a;border-radius:6px;"></div>
<svg style="left:2867.5px;top:1652.5px;" width="17" height="13" viewBox="0 0 17 13" fill="none"><path d="M2.6 2 H14.2 A1.2 1.2 0 0 1 15.1 3.9 L9.4 10.6 A1.3 1.3 0 0 1 7.4 10.6 L1.7 3.9 A1.2 1.2 0 0 1 2.6 2 Z" fill="#9a9a9a"/></svg>
<span style="top:1728.00px;font-size:15px;line-height:1;color:#f0f0f0;letter-spacing:-0.019px;left:26.06px;">Ready</span>
<svg style="left:98.5px;top:1725px;" width="24" height="22" viewBox="0 0 24 22" fill="none"><path d="M1.6 7 V2 H21.4 V7 M1.6 7 V19.4 H8.4" stroke="#e6e6e6" stroke-width="1.7"/><path d="M1.6 3.2 H21.4" stroke="#e6e6e6" stroke-width="2.6"/><path d="M4.6 10.6 H9.4 M4.6 14.6 H8" stroke="#e6e6e6" stroke-width="1.6"/><circle cx="15.6" cy="14.6" r="6.1" stroke="#e6e6e6" stroke-width="1.7"/><circle cx="15.6" cy="14.6" r="2.9" fill="#e6e6e6"/></svg>
<svg style="left:145.5px;top:1723.5px;" width="24" height="24" viewBox="0 0 24 24" fill="none"><circle cx="9.4" cy="4.2" r="2.3" stroke="#f0f0f0" stroke-width="1.5"/><path d="M1.6 7.8 C4 9 6 9.6 9.4 9.6 C12.8 9.6 14.8 9 17.2 7.8 M9.4 9.6 V13.4 M9.4 13.4 L5.4 21.2 M9.4 13.4 L11.6 16.6" stroke="#f0f0f0" stroke-width="1.7" stroke-linecap="round"/><path d="M13.4 15.2 L21.6 22.6 M21.6 15.2 L13.4 22.6" stroke="#f0f0f0" stroke-width="1.7" stroke-linecap="round"/></svg>
<span style="top:1728.00px;font-size:15px;line-height:1;color:#fff;font-weight:700;letter-spacing:-0.000px;transform:scaleX(1.0485);transform-origin:left center;left:173.51px;">Accessibility: Investigate</span>
<div style="left:2445px;top:1718.5px;width:59.7px;height:32.5px;background:#2b2b2b;"></div>
<svg style="left:2463.5px;top:1723.4px;" width="21" height="21" viewBox="0 0 21 21" fill="none"><g stroke="#f4f4f4" stroke-width="2"><rect x="1.4" y="1.4" width="18" height="18"/><path d="M7.4 1.4 V19.4 M13.4 1.4 V19.4 M1.4 7.4 H19.4 M1.4 13.4 H19.4"/></g></svg>
<svg style="left:2523.5px;top:1723.4px;" width="22" height="21" viewBox="0 0 22 21" fill="none"><g stroke="#f4f4f4" stroke-width="2"><rect x="1.4" y="1.4" width="19.6" height="18"/><rect x="6" y="5.4" width="10.4" height="10" stroke-width="1.6"/><path d="M7.6 8.2 H14.8 M7.6 10.4 H14.8 M7.6 12.6 H14.8" stroke-width="1.3"/></g></svg>
<svg style="left:2583.5px;top:1723.4px;" width="23" height="21" viewBox="0 0 23 21" fill="none"><g stroke="#f4f4f4" stroke-width="2"><rect x="1.4" y="1.4" width="19.6" height="18"/><path d="M1.4 11.6 H14.2 V1.4 M8.4 1.4 V11.6" /></g></svg>
<div style="left:2633.5px;top:1734px;width:11.6px;height:1.5px;background:#d4d4d4;"></div>
<div style="left:2653px;top:1733.6px;width:148px;height:2.2px;background:#b4b4b4;border-radius:1px;"></div>
<div style="left:2723.1px;top:1726px;width:7.8px;height:17px;background:#c4c4c4;border-radius:1px;"></div>
<div style="left:2808.8px;top:1734px;width:11.8px;height:1.5px;background:#e4e4e4;"></div>
<div style="left:2813.95px;top:1728.9px;width:1.5px;height:11.8px;background:#e4e4e4;"></div>
<span style="top:1728.00px;font-size:15px;line-height:1;color:#f0f0f0;letter-spacing:0.000px;transform:scaleX(1.0596);transform-origin:left center;left:2838.81px;">100%</span>
</div></body></html>
